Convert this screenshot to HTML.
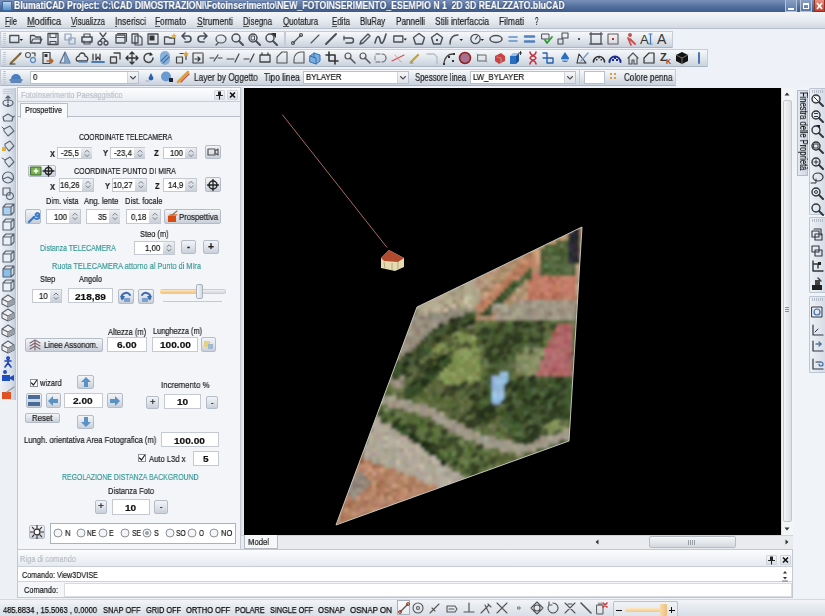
<!DOCTYPE html><html><head><meta charset="utf-8"><style>
html,body{margin:0;padding:0;width:825px;height:616px;overflow:hidden;background:#eef1f6;font-family:"Liberation Sans",sans-serif;}
#r{position:relative;width:825px;height:616px;overflow:hidden}
#r div{position:absolute;box-sizing:border-box}
.t{white-space:nowrap;line-height:1;transform-origin:0 0;will-change:transform;-webkit-text-stroke:0.2px currentColor}
.cg rect{width:4px;height:4px}
</style></head><body><div id="r">
<div style="left:0px;top:0px;width:825px;height:12px;background:linear-gradient(#7a92bb,#56739f 50%,#3d5b8b)"></div>
<div style="left:2px;top:1px;width:10px;height:10px;background:linear-gradient(#b8d4f0,#5a90c8);border:1px solid #3a6aa0;border-radius:1px"></div>
<div class="t" style="left:14px;top:1.00px;font-size:10px;font-weight:bold;color:#ffffff;transform:scaleX(0.869);text-shadow:0 0 2px #1a2f56,0 0 1px #1a2f56">BlumatiCAD Project: C:\CAD DIMOSTRAZIONI\Fotoinserimento\NEW_FOTOINSERIMENTO_ESEMPIO N 1  2D 3D REALZZATO.bluCAD</div>
<div style="left:785px;top:0px;width:12px;height:12px;background:linear-gradient(#8aa0c4,#5a78a6);border:1px solid #b4c2d8;border-top:none"></div>
<div style="left:788px;top:8px;width:6px;height:2px;background:#fff"></div>
<div style="left:800px;top:0px;width:12px;height:12px;background:linear-gradient(#8aa0c4,#5a78a6);border:1px solid #b4c2d8;border-top:none"></div>
<div style="left:803px;top:3px;width:6px;height:6px;border:1px solid #fff;border-top-width:2px"></div>
<div style="left:814px;top:0px;width:11px;height:12px;background:linear-gradient(#e89080,#c8402e);border:1px solid #8e3020;border-top:none"></div>
<svg style="position:absolute;left:814px;top:0px;" width="11" height="12" viewBox="0 0 11 12"><path d="M3 3 L8 9 M8 3 L3 9" stroke="#fff" stroke-width="1.8"/></svg>
<div style="left:0px;top:12px;width:825px;height:17px;background:linear-gradient(#f3f5f8,#e4e9ef 60%,#d2d9e1);border-bottom:1px solid #b6c0cc"></div>
<div class="t" style="left:5px;top:16.70px;font-size:10px;color:#1e1e1e;transform:scaleX(0.745);">File</div>
<div style="left:5px;top:25.8px;width:4.548875096974399px;height:1.0px;background:#555"></div>
<div class="t" style="left:27px;top:16.70px;font-size:10px;color:#1e1e1e;transform:scaleX(0.913);">Modifica</div>
<div style="left:27px;top:25.8px;width:7.606126731011329px;height:1.0px;background:#555"></div>
<div class="t" style="left:71px;top:16.70px;font-size:10px;color:#1e1e1e;transform:scaleX(0.758);">Visualizza</div>
<div style="left:71px;top:25.8px;width:5.058056872037909px;height:1.0px;background:#555"></div>
<div class="t" style="left:115px;top:16.70px;font-size:10px;color:#1e1e1e;transform:scaleX(0.845);">Inserisci</div>
<div style="left:115px;top:25.8px;width:2.3483447658813077px;height:1.0px;background:#555"></div>
<div class="t" style="left:155px;top:16.70px;font-size:10px;color:#1e1e1e;transform:scaleX(0.833);">Formato</div>
<div style="left:155px;top:25.8px;width:5.085998489045579px;height:1.0px;background:#555"></div>
<div class="t" style="left:197px;top:16.70px;font-size:10px;color:#1e1e1e;transform:scaleX(0.841);">Strumenti</div>
<div style="left:197px;top:25.8px;width:5.611772438472201px;height:1.0px;background:#555"></div>
<div class="t" style="left:243px;top:16.70px;font-size:10px;color:#1e1e1e;transform:scaleX(0.790);">Disegna</div>
<div style="left:243px;top:25.8px;width:5.708603066439537px;height:1.0px;background:#555"></div>
<div class="t" style="left:283px;top:16.70px;font-size:10px;color:#1e1e1e;transform:scaleX(0.787);">Quotatura</div>
<div style="left:283px;top:25.8px;width:6.121925509487028px;height:1.0px;background:#555"></div>
<div class="t" style="left:332px;top:16.70px;font-size:10px;color:#1e1e1e;transform:scaleX(0.790);">Edita</div>
<div style="left:332px;top:25.8px;width:5.267841228491136px;height:1.0px;background:#555"></div>
<div class="t" style="left:360px;top:16.70px;font-size:10px;color:#1e1e1e;transform:scaleX(0.776);">BluRay</div>
<div class="t" style="left:395.7px;top:16.70px;font-size:10px;color:#1e1e1e;transform:scaleX(0.815);">Pannelli</div>
<div class="t" style="left:434.5px;top:16.70px;font-size:10px;color:#1e1e1e;transform:scaleX(0.836);">Stili interfaccia</div>
<div class="t" style="left:499px;top:16.70px;font-size:10px;color:#1e1e1e;transform:scaleX(0.849);">Filmati</div>
<div class="t" style="left:534.5px;top:16.70px;font-size:10px;color:#1e1e1e;transform:scaleX(0.629);">?</div>
<div style="left:0px;top:29px;width:825px;height:58px;background:#eef1f7"></div>
<div style="left:0px;top:30.5px;width:672.5px;height:17.799999999999997px;background:linear-gradient(#f6f8fa,#e4e9ef 45%,#c9d2dd);border:1px solid #c4ccd8;border-bottom-color:#aab5c3;border-radius:1px"></div>
<div style="left:0px;top:49px;width:708.4px;height:18.200000000000003px;background:linear-gradient(#f6f8fa,#e4e9ef 45%,#c9d2dd);border:1px solid #c4ccd8;border-bottom-color:#aab5c3;border-radius:1px"></div>
<div style="left:0px;top:69px;width:676.4px;height:16.5px;background:linear-gradient(#f6f8fa,#e4e9ef 45%,#c9d2dd);border:1px solid #c4ccd8;border-bottom-color:#aab5c3;border-radius:1px"></div>
<div style="left:3px;top:33px;width:3px;height:1px;background:#c0c8d4"></div>
<div style="left:3px;top:35px;width:3px;height:1px;background:#c0c8d4"></div>
<div style="left:3px;top:37px;width:3px;height:1px;background:#c0c8d4"></div>
<div style="left:3px;top:39px;width:3px;height:1px;background:#c0c8d4"></div>
<div style="left:3px;top:41px;width:3px;height:1px;background:#c0c8d4"></div>
<div style="left:3px;top:43px;width:3px;height:1px;background:#c0c8d4"></div>
<div style="left:3px;top:45px;width:3px;height:1px;background:#c0c8d4"></div>
<div style="left:3px;top:52px;width:3px;height:1px;background:#c0c8d4"></div>
<div style="left:3px;top:54px;width:3px;height:1px;background:#c0c8d4"></div>
<div style="left:3px;top:56px;width:3px;height:1px;background:#c0c8d4"></div>
<div style="left:3px;top:58px;width:3px;height:1px;background:#c0c8d4"></div>
<div style="left:3px;top:60px;width:3px;height:1px;background:#c0c8d4"></div>
<div style="left:3px;top:62px;width:3px;height:1px;background:#c0c8d4"></div>
<div style="left:3px;top:64px;width:3px;height:1px;background:#c0c8d4"></div>
<div style="left:3px;top:71px;width:3px;height:1px;background:#c0c8d4"></div>
<div style="left:3px;top:73px;width:3px;height:1px;background:#c0c8d4"></div>
<div style="left:3px;top:75px;width:3px;height:1px;background:#c0c8d4"></div>
<div style="left:3px;top:77px;width:3px;height:1px;background:#c0c8d4"></div>
<div style="left:3px;top:79px;width:3px;height:1px;background:#c0c8d4"></div>
<div style="left:3px;top:81px;width:3px;height:1px;background:#c0c8d4"></div>
<div style="left:3px;top:83px;width:3px;height:1px;background:#c0c8d4"></div>
<svg style="position:absolute;left:9px;top:32px;" width="14" height="14" viewBox="0 0 14 14"><path d="M0.8 3.5h9v7h-9z" fill="none" stroke="#4a4f58" stroke-width="1.3" stroke-linecap="round" stroke-linejoin="round"/><path d="M10.5 7h3.5l-1.75 2z" fill="#222"/></svg>
<svg style="position:absolute;left:29px;top:32px;" width="14" height="14" viewBox="0 0 14 14"><path d="M1.5 3.5h4l1 1.5h5v6h-10z" fill="none" stroke="#4a4f58" stroke-width="1.3" stroke-linecap="round" stroke-linejoin="round"/><path d="M2 11l2-4h9l-2 4" fill="none" stroke="#4a4f58" stroke-width="1.1" stroke-linecap="round" stroke-linejoin="round"/></svg>
<svg style="position:absolute;left:46px;top:32px;" width="14" height="14" viewBox="0 0 14 14"><path d="M2 1.5h10v11h-10z" fill="none" stroke="#4a4f58" stroke-width="1.3" stroke-linecap="round" stroke-linejoin="round"/><path d="M4 1.5v4h6v-4M4 12.5v-3h6v3" fill="none" stroke="#4a4f58" stroke-width="1.1" stroke-linecap="round" stroke-linejoin="round"/></svg>
<svg style="position:absolute;left:63px;top:32px;" width="14" height="14" viewBox="0 0 14 14"><path d="M2 2h6v6h-6z" fill="none" stroke="#8aa0b8" stroke-width="1.2" stroke-linecap="round" stroke-linejoin="round"/><path d="M6 6h6v6h-6z" fill="none" stroke="#8aa0b8" stroke-width="1.2" stroke-linecap="round" stroke-linejoin="round"/></svg>
<svg style="position:absolute;left:80px;top:32px;" width="14" height="14" viewBox="0 0 14 14"><path d="M2 5h10v5h-10z" fill="none" stroke="#4a4f58" stroke-width="1.6" stroke-linecap="round" stroke-linejoin="round"/><path d="M4 5v-3h6v3M4 9v3h6v-3" fill="none" stroke="#4a4f58" stroke-width="1.2" stroke-linecap="round" stroke-linejoin="round"/></svg>
<svg style="position:absolute;left:96px;top:32px;" width="14" height="14" viewBox="0 0 14 14"><path d="M4 1l6 8M10 1l-6 8" fill="none" stroke="#4a4f58" stroke-width="1.3" stroke-linecap="round" stroke-linejoin="round"/><path d="M4 11m-2 0a2 2 0 1 0 4 0a2 2 0 1 0-4 0M10 11m-2 0a2 2 0 1 0 4 0a2 2 0 1 0-4 0" fill="none" stroke="#4a4f58" stroke-width="1.3" stroke-linecap="round" stroke-linejoin="round"/></svg>
<svg style="position:absolute;left:114px;top:32px;" width="14" height="14" viewBox="0 0 14 14"><path d="M2 3h9v8h-9z" fill="none" stroke="#4a4f58" stroke-width="1.3" stroke-linecap="round" stroke-linejoin="round"/><path d="M2 5.5h9M3.5 1.5h9v8" fill="none" stroke="#4a4f58" stroke-width="1.1" stroke-linecap="round" stroke-linejoin="round"/></svg>
<svg style="position:absolute;left:130px;top:32px;" width="14" height="14" viewBox="0 0 14 14"><path d="M2 2h6v9h-6z" fill="none" stroke="#4a4f58" stroke-width="1.3" stroke-linecap="round" stroke-linejoin="round"/><path d="M5 4h5l2 2v7h-7z" fill="none" stroke="#4a4f58" stroke-width="1.2" stroke-linecap="round" stroke-linejoin="round"/></svg>
<svg style="position:absolute;left:146px;top:32px;" width="14" height="14" viewBox="0 0 14 14"><path d="M2 2h10v10h-10z" fill="none" stroke="#4a4f58" stroke-width="1.3" stroke-linecap="round" stroke-linejoin="round"/><path d="M3.5 3.5h5v5h-5z" fill="#333"/></svg>
<svg style="position:absolute;left:163px;top:32px;" width="14" height="14" viewBox="0 0 14 14"><path d="M1.5 5h4l1 1h5v6h-10z" fill="none" stroke="#4a4f58" stroke-width="1.3" stroke-linecap="round" stroke-linejoin="round"/><path d="M11 1l1 2 2 .3-1.5 1.3.4 2-1.9-1-1.9 1 .4-2L8 3.3 10 3z" fill="#e8b030"/></svg>
<svg style="position:absolute;left:179px;top:32px;" width="14" height="14" viewBox="0 0 14 14"><path d="M3 4h6a3 3 0 0 1 0 6h-3M3 4l3-3M3 4l3 3" fill="none" stroke="#4a4f58" stroke-width="1.6" stroke-linecap="round" stroke-linejoin="round"/></svg>
<svg style="position:absolute;left:196px;top:32px;" width="14" height="14" viewBox="0 0 14 14"><path d="M11 4h-6a3 3 0 0 0 0 6h3M11 4l-3-3M11 4l-3 3" fill="none" stroke="#4a4f58" stroke-width="1.6" stroke-linecap="round" stroke-linejoin="round"/></svg>
<svg style="position:absolute;left:214px;top:32px;" width="14" height="14" viewBox="0 0 14 14"><path d="M2 7a5 4 0 1 0 10 0a5 4 0 1 0-10 0" fill="none" stroke="#4a4f58" stroke-width="1.2" stroke-linecap="round" stroke-linejoin="round"/><path d="M4 11l-2 2" fill="none" stroke="#4a4f58" stroke-width="1.2" stroke-linecap="round" stroke-linejoin="round"/></svg>
<svg style="position:absolute;left:230px;top:32px;" width="14" height="14" viewBox="0 0 14 14"><path d="M2 6a4 4 0 1 0 8 0a4 4 0 1 0-8 0" fill="none" stroke="#4a4f58" stroke-width="1.5" stroke-linecap="round" stroke-linejoin="round"/><path d="M9 9l4 4" fill="none" stroke="#4a4f58" stroke-width="2" stroke-linecap="round" stroke-linejoin="round"/></svg>
<svg style="position:absolute;left:247px;top:32px;" width="14" height="14" viewBox="0 0 14 14"><path d="M2 6a4 4 0 1 0 8 0a4 4 0 1 0-8 0" fill="none" stroke="#4a4f58" stroke-width="1.5" stroke-linecap="round" stroke-linejoin="round"/><path d="M9 9l4 4" fill="none" stroke="#4a4f58" stroke-width="2" stroke-linecap="round" stroke-linejoin="round"/><path d="M4.5 4h3v4h-3z" fill="none" stroke="#4a4f58" stroke-width="1" stroke-linecap="round" stroke-linejoin="round"/></svg>
<svg style="position:absolute;left:264px;top:32px;" width="14" height="14" viewBox="0 0 14 14"><path d="M2 6a4 4 0 1 0 8 0a4 4 0 1 0-8 0" fill="none" stroke="#4a4f58" stroke-width="1.5" stroke-linecap="round" stroke-linejoin="round"/><path d="M9 9l4 4" fill="none" stroke="#4a4f58" stroke-width="2" stroke-linecap="round" stroke-linejoin="round"/><path d="M7 1h5v5z" fill="#333"/></svg>
<svg style="position:absolute;left:290px;top:32px;" width="14" height="14" viewBox="0 0 14 14"><path d="M3 11l8-8" fill="none" stroke="#4a4f58" stroke-width="1.1" stroke-linecap="round" stroke-linejoin="round"/><path d="M3 11m-1.5 0a1.5 1.5 0 1 0 3 0a1.5 1.5 0 1 0-3 0M11 3m-1.5 0a1.5 1.5 0 1 0 3 0a1.5 1.5 0 1 0-3 0" fill="none" stroke="#4a4f58" stroke-width="1.1" stroke-linecap="round" stroke-linejoin="round"/></svg>
<svg style="position:absolute;left:308px;top:32px;" width="14" height="14" viewBox="0 0 14 14"><path d="M3 11l8-8" fill="none" stroke="#4a4f58" stroke-width="1.1" stroke-linecap="round" stroke-linejoin="round"/></svg>
<svg style="position:absolute;left:324px;top:32px;" width="14" height="14" viewBox="0 0 14 14"><path d="M2 12l10-10" fill="none" stroke="#4a4f58" stroke-width="2" stroke-linecap="round" stroke-linejoin="round"/></svg>
<svg style="position:absolute;left:342px;top:32px;" width="14" height="14" viewBox="0 0 14 14"><path d="M2 6h7a2.5 2.5 0 0 1 0 5h-5" fill="none" stroke="#4a4f58" stroke-width="1.4" stroke-linecap="round" stroke-linejoin="round"/><path d="M2 4v4" fill="none" stroke="#4a4f58" stroke-width="1.2" stroke-linecap="round" stroke-linejoin="round"/></svg>
<svg style="position:absolute;left:358px;top:32px;" width="14" height="14" viewBox="0 0 14 14"><path d="M2 12l1-3 7-7 2 2-7 7z" fill="none" stroke="#4a4f58" stroke-width="1.4" stroke-linecap="round" stroke-linejoin="round"/></svg>
<svg style="position:absolute;left:374px;top:32px;" width="14" height="14" viewBox="0 0 14 14"><path d="M1 11c2-8 4-8 5-3s3 5 6-6" fill="none" stroke="#4a4f58" stroke-width="1.6" stroke-linecap="round" stroke-linejoin="round"/></svg>
<svg style="position:absolute;left:393px;top:32px;" width="14" height="14" viewBox="0 0 14 14"><path d="M0.8 4h9v6h-9z" fill="none" stroke="#4a4f58" stroke-width="1.3" stroke-linecap="round" stroke-linejoin="round"/><path d="M10.5 6.5h3.5l-1.75 2z" fill="#222"/></svg>
<svg style="position:absolute;left:412px;top:32px;" width="14" height="14" viewBox="0 0 14 14"><path d="M7 1.5l5.5 4-2 6.5h-7l-2-6.5z" fill="none" stroke="#4a4f58" stroke-width="1.4" stroke-linecap="round" stroke-linejoin="round"/></svg>
<svg style="position:absolute;left:430px;top:32px;" width="14" height="14" viewBox="0 0 14 14"><path d="M7 1.5l5.5 4-2 6.5h-7l-2-6.5z" fill="none" stroke="#4a4f58" stroke-width="1.4" stroke-linecap="round" stroke-linejoin="round"/><path d="M6 7h2v2h-2z" fill="#4a4f58"/></svg>
<svg style="position:absolute;left:449px;top:32px;" width="14" height="14" viewBox="0 0 14 14"><path d="M1 12c0-6 3-9 8-9" fill="none" stroke="#4a4f58" stroke-width="1.4" stroke-linecap="round" stroke-linejoin="round"/><path d="M10.5 7h3.5l-1.75 2z" fill="#222"/></svg>
<svg style="position:absolute;left:470px;top:32px;" width="14" height="14" viewBox="0 0 14 14"><path d="M0.8 7a4.7 4.7 0 1 0 9.4 0a4.7 4.7 0 1 0-9.4 0" fill="none" stroke="#4a4f58" stroke-width="1.3" stroke-linecap="round" stroke-linejoin="round"/><path d="M5.5 7l2-3" fill="none" stroke="#4a4f58" stroke-width="1.2" stroke-linecap="round" stroke-linejoin="round"/><path d="M10.5 7h3.5l-1.75 2z" fill="#222"/></svg>
<svg style="position:absolute;left:489px;top:32px;" width="14" height="14" viewBox="0 0 14 14"><path d="M1 7a6 3.5 0 1 0 12 0a6 3.5 0 1 0-12 0" fill="none" stroke="#4a4f58" stroke-width="1.5" stroke-linecap="round" stroke-linejoin="round"/></svg>
<svg style="position:absolute;left:506px;top:32px;" width="14" height="14" viewBox="0 0 14 14"><path d="M3 5h8M3 9h8" fill="none" stroke="#6090c8" stroke-width="1.5" stroke-linecap="round" stroke-linejoin="round"/></svg>
<svg style="position:absolute;left:522px;top:32px;" width="14" height="14" viewBox="0 0 14 14"><path d="M3 4.5h9M3 9.5h9" fill="none" stroke="#5080c0" stroke-width="2.6" stroke-linecap="round" stroke-linejoin="round"/></svg>
<svg style="position:absolute;left:540px;top:32px;" width="14" height="14" viewBox="0 0 14 14"><path d="M2 2h7v5h-7z" fill="none" stroke="#4a4f58" stroke-width="1" stroke-linecap="round" stroke-linejoin="round"/><path d="M5 8l2 3 5-6" fill="none" stroke="#2a9a2a" stroke-width="1.8" stroke-linecap="round" stroke-linejoin="round"/></svg>
<svg style="position:absolute;left:556px;top:32px;" width="14" height="14" viewBox="0 0 14 14"><path d="M6 1h6v5h-6zM2 7h5v5h-5z" fill="none" stroke="#4a4f58" stroke-width="1.1" stroke-linecap="round" stroke-linejoin="round"/></svg>
<svg style="position:absolute;left:572px;top:32px;" width="14" height="14" viewBox="0 0 14 14"><path d="M6 6h2v2h-2z" fill="#555"/></svg>
<svg style="position:absolute;left:589px;top:32px;" width="14" height="14" viewBox="0 0 14 14"><path d="M2 2h10v10h-10z" fill="none" stroke="#4a4f58" stroke-width="1.3" stroke-linecap="round" stroke-linejoin="round"/><path d="M0 2h2M12 2h2M0 12h2M12 12h2M2 0v2M12 0v2" fill="none" stroke="#4a4f58" stroke-width="1" stroke-linecap="round" stroke-linejoin="round"/></svg>
<svg style="position:absolute;left:606px;top:32px;" width="14" height="14" viewBox="0 0 14 14"><path d="M2 2h10v10h-10z" fill="none" stroke="#6a5a5a" stroke-width="1.1" stroke-linecap="round" stroke-linejoin="round"/><path d="M6 6h2v2h-2z" fill="#c03030"/></svg>
<svg style="position:absolute;left:624px;top:32px;" width="14" height="14" viewBox="0 0 14 14"><path d="M6 1a2 2 0 1 1 0 4a2 2 0 1 1 0-4z" fill="#c85050"/><path d="M4 6l3 7M6 7l5 5" fill="none" stroke="#c85050" stroke-width="1.8" stroke-linecap="round" stroke-linejoin="round"/></svg>
<svg style="position:absolute;left:640px;top:32px;" width="14" height="14" viewBox="0 0 14 14"><text x="0" y="12" font-family="Liberation Sans" font-size="13" fill="#333">A</text><path d="M10.5 2v10M9 2h3M9 12h3" fill="none" stroke="#4a7ab8" stroke-width="1.2" stroke-linecap="round" stroke-linejoin="round"/></svg>
<svg style="position:absolute;left:656px;top:32px;" width="14" height="14" viewBox="0 0 14 14"><text x="1" y="12" font-family="Liberation Sans" font-size="14" fill="#333">A</text></svg>
<div style="left:284px;top:32px;width:2px;height:14px;background:#c4ccd8"></div>
<svg style="position:absolute;left:9px;top:51px;" width="14" height="14" viewBox="0 0 14 14"><path d="M2 12l9-9" fill="none" stroke="#8a6a3a" stroke-width="2.2" stroke-linecap="round" stroke-linejoin="round"/><path d="M1 13h5" fill="none" stroke="#333" stroke-width="1" stroke-linecap="round" stroke-linejoin="round"/><path d="M11 3l1-1" fill="none" stroke="#555" stroke-width="1.5" stroke-linecap="round" stroke-linejoin="round"/></svg>
<svg style="position:absolute;left:24px;top:51px;" width="14" height="14" viewBox="0 0 14 14"><path d="M4 4m-2.5 0a2.5 2.5 0 1 0 5 0a2.5 2.5 0 1 0-5 0" fill="none" stroke="#555" stroke-width="1.1" stroke-linecap="round" stroke-linejoin="round"/><path d="M9 9m-2.5 0a2.5 2.5 0 1 0 5 0a2.5 2.5 0 1 0-5 0" fill="none" stroke="#5a8ac0" stroke-width="1.3" stroke-linecap="round" stroke-linejoin="round"/><path d="M8 2h3v3" fill="none" stroke="#333" stroke-width="1.1" stroke-linecap="round" stroke-linejoin="round"/></svg>
<svg style="position:absolute;left:41px;top:51px;" width="14" height="14" viewBox="0 0 14 14"><path d="M2 1.5h7v11h-7z" fill="none" stroke="#444" stroke-width="1.2" stroke-linecap="round" stroke-linejoin="round"/><path d="M3.5 3h3v3h-3z" fill="#333"/><path d="M6 10h6M10 8l2 2-2 2" fill="none" stroke="#c06020" stroke-width="1.4" stroke-linecap="round" stroke-linejoin="round"/></svg>
<svg style="position:absolute;left:58px;top:51px;" width="14" height="14" viewBox="0 0 14 14"><path d="M7 1l-5 11h5zM7 1l5 11h-5z" fill="none" stroke="#506a88" stroke-width="1.2" stroke-linecap="round" stroke-linejoin="round"/><path d="M7 1l5 11h-5z" fill="#7aa0c8"/></svg>
<svg style="position:absolute;left:75px;top:51px;" width="14" height="14" viewBox="0 0 14 14"><path d="M2 10a3 3 0 0 1 2-5a3 3 0 0 1 6 0a3 3 0 0 1 2 5z" fill="none" stroke="#444" stroke-width="1.3" stroke-linecap="round" stroke-linejoin="round"/><path d="M4 11h8" fill="none" stroke="#5a8ac0" stroke-width="1.5" stroke-linecap="round" stroke-linejoin="round"/></svg>
<svg style="position:absolute;left:91px;top:51px;" width="14" height="14" viewBox="0 0 14 14"><path d="M2 3v6M5 3v6l2-3 2 3v-6" fill="none" stroke="#333" stroke-width="1.2" stroke-linecap="round" stroke-linejoin="round"/><path d="M1 11h12" fill="none" stroke="#4a7ab8" stroke-width="1.8" stroke-linecap="round" stroke-linejoin="round"/></svg>
<svg style="position:absolute;left:109px;top:51px;" width="14" height="14" viewBox="0 0 14 14"><path d="M1.5 6h6v6h-6zM5 2h6v6" fill="none" stroke="#444" stroke-width="1.3" stroke-linecap="round" stroke-linejoin="round"/></svg>
<svg style="position:absolute;left:125px;top:51px;" width="14" height="14" viewBox="0 0 14 14"><path d="M7 1v12M1 7h12M5 3l2-2 2 2M5 11l2 2 2-2M3 5l-2 2 2 2M11 5l2 2-2 2" fill="none" stroke="#333" stroke-width="1.3" stroke-linecap="round" stroke-linejoin="round"/></svg>
<svg style="position:absolute;left:142px;top:51px;" width="14" height="14" viewBox="0 0 14 14"><path d="M11 7a4.5 4.5 0 1 1-2-3.8" fill="none" stroke="#444" stroke-width="1.5" stroke-linecap="round" stroke-linejoin="round"/><path d="M8 1l3 3-3.5 1z" fill="#333"/></svg>
<svg style="position:absolute;left:158px;top:51px;" width="14" height="14" viewBox="0 0 14 14"><path d="M2 5a5 5 0 0 1 10 0v4a5 5 0 0 1-10 0z" fill="#8ab0d8"/><path d="M3 10l6-6M5 12l6-6" fill="none" stroke="#3a70b0" stroke-width="1.1" stroke-linecap="round" stroke-linejoin="round"/></svg>
<svg style="position:absolute;left:175px;top:51px;" width="14" height="14" viewBox="0 0 14 14"><path d="M1.5 6h6v6h-6zM5 2.5h6v6" fill="none" stroke="#444" stroke-width="1.2" stroke-linecap="round" stroke-linejoin="round"/><path d="M11 0l1 2 2 .3-1.5 1.3.4 2-1.9-1-1.9 1 .4-2L8 2.3 10 2z" fill="#e8a020"/></svg>
<svg style="position:absolute;left:191px;top:51px;" width="14" height="14" viewBox="0 0 14 14"><path d="M2 2h10v10h-10z" fill="none" stroke="#444" stroke-width="1.2" stroke-linecap="round" stroke-linejoin="round"/><path d="M4 8h5M7 6l2 2-2 2" fill="none" stroke="#333" stroke-width="1.2" stroke-linecap="round" stroke-linejoin="round"/><path d="M10 0l1 2 2 .3-1.5 1.3z" fill="#e8a020"/></svg>
<svg style="position:absolute;left:209px;top:51px;" width="14" height="14" viewBox="0 0 14 14"><path d="M1 7h4M9 7h4M5 10l4-6" fill="none" stroke="#444" stroke-width="1.2" stroke-linecap="round" stroke-linejoin="round"/></svg>
<svg style="position:absolute;left:226px;top:51px;" width="14" height="14" viewBox="0 0 14 14"><path d="M1 8h3M5 8h3M9 11l4-8" fill="none" stroke="#444" stroke-width="1.2" stroke-linecap="round" stroke-linejoin="round"/></svg>
<svg style="position:absolute;left:242px;top:51px;" width="14" height="14" viewBox="0 0 14 14"><path d="M2 8h5M8 11l4-8" fill="none" stroke="#444" stroke-width="1.2" stroke-linecap="round" stroke-linejoin="round"/></svg>
<svg style="position:absolute;left:258px;top:51px;" width="14" height="14" viewBox="0 0 14 14"><path d="M2 4h10v7h-10zM4 4v-2M10 4v-2" fill="none" stroke="#444" stroke-width="1.3" stroke-linecap="round" stroke-linejoin="round"/></svg>
<svg style="position:absolute;left:275px;top:51px;" width="14" height="14" viewBox="0 0 14 14"><path d="M2 12v-6l5-5h5v11z" fill="none" stroke="#555" stroke-width="1.1" stroke-linecap="round" stroke-linejoin="round"/></svg>
<svg style="position:absolute;left:292px;top:51px;" width="14" height="14" viewBox="0 0 14 14"><path d="M2 12v-4a7 7 0 0 1 7-7h3v11z" fill="none" stroke="#555" stroke-width="1.1" stroke-linecap="round" stroke-linejoin="round"/></svg>
<svg style="position:absolute;left:308px;top:51px;" width="14" height="14" viewBox="0 0 14 14"><path d="M2 5l4-3 6 2v6l-4 3-6-2z" fill="#7aaee0"/><path d="M2 5l4-3 6 2v6l-4 3-6-2zM6 2v5M2 5l6 2v6" fill="none" stroke="#3a70b0" stroke-width="1" stroke-linecap="round" stroke-linejoin="round"/></svg>
<svg style="position:absolute;left:325px;top:51px;" width="14" height="14" viewBox="0 0 14 14"><path d="M4 1v9h9M1 4h9v9" fill="none" stroke="#333" stroke-width="1.6" stroke-linecap="round" stroke-linejoin="round"/></svg>
<svg style="position:absolute;left:343px;top:51px;" width="14" height="14" viewBox="0 0 14 14"><path d="M2 5a3 3 0 1 0 6 0a3 3 0 1 0-6 0" fill="none" stroke="#555" stroke-width="1.2" stroke-linecap="round" stroke-linejoin="round"/><path d="M7 7l5 5" fill="none" stroke="#555" stroke-width="1.5" stroke-linecap="round" stroke-linejoin="round"/></svg>
<svg style="position:absolute;left:358px;top:51px;" width="14" height="14" viewBox="0 0 14 14"><path d="M2 5a3 3 0 1 0 6 0a3 3 0 1 0-6 0" fill="none" stroke="#555" stroke-width="1.2" stroke-linecap="round" stroke-linejoin="round"/><path d="M7 7l5 5" fill="none" stroke="#555" stroke-width="1.5" stroke-linecap="round" stroke-linejoin="round"/></svg>
<svg style="position:absolute;left:374px;top:51px;" width="14" height="14" viewBox="0 0 14 14"><path d="M2 3h4M2 11h4M8 3a4 4 0 0 1 0 8" fill="none" stroke="#666" stroke-width="1.2" stroke-linecap="round" stroke-linejoin="round"/><path d="M1 5v4" fill="none" stroke="#888" stroke-width="1" stroke-linecap="round" stroke-linejoin="round"/></svg>
<svg style="position:absolute;left:391px;top:51px;" width="14" height="14" viewBox="0 0 14 14"><path d="M1 10l12-6" fill="none" stroke="#d05050" stroke-width="1.1" stroke-linecap="round" stroke-linejoin="round"/><path d="M4 4l6 7" fill="none" stroke="#e08080" stroke-width="0.8" stroke-linecap="round" stroke-linejoin="round"/></svg>
<svg style="position:absolute;left:408px;top:51px;" width="14" height="14" viewBox="0 0 14 14"><path d="M3 11l7-7" fill="none" stroke="#c8a030" stroke-width="2.2" stroke-linecap="round" stroke-linejoin="round"/><path d="M2 12h3" fill="none" stroke="#888" stroke-width="1" stroke-linecap="round" stroke-linejoin="round"/></svg>
<svg style="position:absolute;left:425px;top:51px;" width="14" height="14" viewBox="0 0 14 14"><path d="M2 3h7l3 3v7" fill="none" stroke="#b8bcc4" stroke-width="1.3" stroke-linecap="round" stroke-linejoin="round"/></svg>
<svg style="position:absolute;left:442px;top:51px;" width="14" height="14" viewBox="0 0 14 14"><path d="M2 12c1-6 4-9 9-9" fill="none" stroke="#444" stroke-width="1.3" stroke-linecap="round" stroke-linejoin="round"/><path d="M1 12h2v2h-2zM6 5h2v2h-2zM11 2h2v2h-2zM10 9h2v2h-2z" fill="#333"/></svg>
<svg style="position:absolute;left:458px;top:51px;" width="14" height="14" viewBox="0 0 14 14"><path d="M7 1.5a5.5 5.5 0 1 1 0 11a5.5 5.5 0 1 1 0-11z" fill="#a87090"/><path d="M7 1.5a5.5 5.5 0 1 1 0 11a5.5 5.5 0 1 1 0-11z" fill="none" stroke="#902020" stroke-width="1.5" stroke-linecap="round" stroke-linejoin="round"/></svg>
<svg style="position:absolute;left:475px;top:51px;" width="14" height="14" viewBox="0 0 14 14"><path d="M3 4h8v6h-8z" fill="none" stroke="#666" stroke-width="1" stroke-linecap="round" stroke-linejoin="round"/><path d="M2 3l1 1M11 10l1 1" fill="none" stroke="#888" stroke-width="1" stroke-linecap="round" stroke-linejoin="round"/></svg>
<svg style="position:absolute;left:493px;top:51px;" width="14" height="14" viewBox="0 0 14 14"><path d="M2 5l6-3 4 3v5l-6 3-4-3z" fill="#d04040"/><path d="M4 6l4 1v5" fill="none" stroke="#999" stroke-width="1.2" stroke-linecap="round" stroke-linejoin="round"/></svg>
<svg style="position:absolute;left:508px;top:51px;" width="14" height="14" viewBox="0 0 14 14"><path d="M2 5h6v8h-6z" fill="#2a70c0"/><path d="M2 5l3-3h6l-3 3z" fill="#9ac0e8"/><path d="M8 5l3-3v8l-3 3z" fill="#1a50a0"/><path d="M11 2h3M12.5 0.5v3" fill="none" stroke="#333" stroke-width="1" stroke-linecap="round" stroke-linejoin="round"/></svg>
<svg style="position:absolute;left:526px;top:51px;" width="14" height="14" viewBox="0 0 14 14"><path d="M4 1c0 4 6 4 6 6s-6 2-6 6M10 1c0 4-6 4-6 6s6 2 6 6" fill="none" stroke="#c03040" stroke-width="1.5" stroke-linecap="round" stroke-linejoin="round"/></svg>
<svg style="position:absolute;left:541px;top:51px;" width="14" height="14" viewBox="0 0 14 14"><path d="M2 2h4v10h6v-5h-10" fill="none" stroke="#2a60b0" stroke-width="1.4" stroke-linecap="round" stroke-linejoin="round"/></svg>
<svg style="position:absolute;left:558px;top:51px;" width="14" height="14" viewBox="0 0 14 14"><path d="M7 1l4 6a4 4 0 0 1-8 0z" fill="#2a70c0"/><path d="M3 9h8" fill="none" stroke="#fff" stroke-width="1" stroke-linecap="round" stroke-linejoin="round"/></svg>
<svg style="position:absolute;left:575px;top:51px;" width="14" height="14" viewBox="0 0 14 14"><path d="M2 12h9l-7-9z" fill="none" stroke="#333" stroke-width="1.1" stroke-linecap="round" stroke-linejoin="round"/><path d="M6 10l7-8" fill="none" stroke="#7aa0c8" stroke-width="1.5" stroke-linecap="round" stroke-linejoin="round"/></svg>
<svg style="position:absolute;left:592px;top:51px;" width="14" height="14" viewBox="0 0 14 14"><path d="M1.5 11a5.5 5.5 0 0 1 11 0" fill="none" stroke="#333" stroke-width="1.6" stroke-linecap="round" stroke-linejoin="round"/><path d="M4 8h1.5v1.5h-1.5zM8.5 8h1.5v1.5h-1.5zM6.3 6h1.5v1.5h-1.5z" fill="#333"/></svg>
<svg style="position:absolute;left:608px;top:51px;" width="14" height="14" viewBox="0 0 14 14"><path d="M1.5 11a5.5 5.5 0 0 1 11 0" fill="none" stroke="#1a2a90" stroke-width="2" stroke-linecap="round" stroke-linejoin="round"/><path d="M4 8h2v2h-2zM8 8h2v2h-2zM6 6h2v2h-2z" fill="#1a2a90"/></svg>
<svg style="position:absolute;left:626px;top:51px;" width="14" height="14" viewBox="0 0 14 14"><path d="M2 7l5-5 5 5M3 6v7h3v-4h2v4h3v-7" fill="none" stroke="#555" stroke-width="1.2" stroke-linecap="round" stroke-linejoin="round"/></svg>
<svg style="position:absolute;left:642px;top:51px;" width="14" height="14" viewBox="0 0 14 14"><path d="M2 12v-5l5-5h5v10z" fill="none" stroke="#333" stroke-width="1.2" stroke-linecap="round" stroke-linejoin="round"/></svg>
<svg style="position:absolute;left:659px;top:51px;" width="14" height="14" viewBox="0 0 14 14"><text x="1" y="10" font-family="Liberation Sans" font-weight="bold" font-size="11" fill="#333">Z</text><text x="7" y="13" font-family="Liberation Sans" font-weight="bold" font-size="7" fill="#c03030">K</text></svg>
<svg style="position:absolute;left:675px;top:51px;" width="14" height="14" viewBox="0 0 14 14"><path d="M7 1l6 3v6l-6 3-6-3v-6z" fill="#111"/><path d="M1 4l6 3 6-3M7 7v6" fill="none" stroke="#888" stroke-width="0.8" stroke-linecap="round" stroke-linejoin="round"/></svg>
<svg style="position:absolute;left:692px;top:51px;" width="14" height="14" viewBox="0 0 14 14"><path d="M7 2v10" fill="none" stroke="#3a6aa8" stroke-width="1.8" stroke-linecap="round" stroke-linejoin="round"/></svg>
<svg style="position:absolute;left:9px;top:70px;" width="14" height="14" viewBox="0 0 14 14"><path d="M2 9a5 5 0 0 1 10 0z" fill="#4a80c0"/><path d="M1 10h12M2 12h10" fill="none" stroke="#3a6aa8" stroke-width="1.4" stroke-linecap="round" stroke-linejoin="round"/></svg>
<div style="left:29.6px;top:70.5px;width:109.4px;height:13.0px;background:#fff;border:1px solid #b8c0cc"></div>
<div style="left:127px;top:71.5px;width:11px;height:11.0px;background:linear-gradient(#f4f6f8,#dde2e8);border-left:1px solid #d0d6de"></div>
<svg style="position:absolute;left:129px;top:74.5px;" width="8" height="6" viewBox="0 0 8 6"><path d="M1.5 1.5l2.5 2.5 2.5-2.5" fill="none" stroke="#555" stroke-width="1.1" stroke-linecap="round" stroke-linejoin="round"/></svg>
<div class="t" style="left:32.6px;top:73.22px;font-size:9px;color:#111;transform:scaleX(0.870);">0</div>
<svg style="position:absolute;left:144px;top:70px;" width="14" height="14" viewBox="0 0 14 14"><path d="M7 3l2.5 5a2.5 2.5 0 0 1-5 0z" fill="#2a60b0"/><path d="M2 11h3" fill="none" stroke="#aab" stroke-width="1" stroke-linecap="round" stroke-linejoin="round"/></svg>
<svg style="position:absolute;left:160px;top:70px;" width="14" height="14" viewBox="0 0 14 14"><path d="M6 1.5a5 5 0 1 1 0 10a5 5 0 1 1 0-10z" fill="#6a9ad0"/><path d="M9 8h4v4h-4z" fill="#223"/></svg>
<svg style="position:absolute;left:176px;top:70px;" width="14" height="14" viewBox="0 0 14 14"><path d="M2 12l10-10" fill="none" stroke="#d8a040" stroke-width="2.5" stroke-linecap="round" stroke-linejoin="round"/><path d="M5 12l8-8" fill="none" stroke="#c85050" stroke-width="1.3" stroke-linecap="round" stroke-linejoin="round"/></svg>
<div class="t" style="left:193.5px;top:72.14px;font-size:10.5px;color:#1e1e1e;transform:scaleX(0.792);">Layer by Oggetto</div>
<div class="t" style="left:264px;top:72.14px;font-size:10.5px;color:#1e1e1e;transform:scaleX(0.791);">Tipo linea</div>
<div style="left:303.3px;top:70.5px;width:105.5px;height:13.0px;background:#fff;border:1px solid #b8c0cc"></div>
<div style="left:396.8px;top:71.5px;width:11.0px;height:11.0px;background:linear-gradient(#f4f6f8,#dde2e8);border-left:1px solid #d0d6de"></div>
<svg style="position:absolute;left:398.8px;top:74.5px;" width="8" height="6" viewBox="0 0 8 6"><path d="M1.5 1.5l2.5 2.5 2.5-2.5" fill="none" stroke="#555" stroke-width="1.1" stroke-linecap="round" stroke-linejoin="round"/></svg>
<div class="t" style="left:306.3px;top:73.22px;font-size:9px;color:#111;transform:scaleX(0.870);">BYLAYER</div>
<div class="t" style="left:414.8px;top:72.14px;font-size:10.5px;color:#1e1e1e;transform:scaleX(0.737);">Spessore linea</div>
<div style="left:469.6px;top:70.5px;width:106.10000000000002px;height:13.0px;background:#fff;border:1px solid #b8c0cc"></div>
<div style="left:563.7px;top:71.5px;width:11.0px;height:11.0px;background:linear-gradient(#f4f6f8,#dde2e8);border-left:1px solid #d0d6de"></div>
<svg style="position:absolute;left:565.7px;top:74.5px;" width="8" height="6" viewBox="0 0 8 6"><path d="M1.5 1.5l2.5 2.5 2.5-2.5" fill="none" stroke="#555" stroke-width="1.1" stroke-linecap="round" stroke-linejoin="round"/></svg>
<div class="t" style="left:472.6px;top:73.22px;font-size:9px;color:#111;transform:scaleX(0.870);">LW_BYLAYER</div>
<div style="left:579px;top:70px;width:1px;height:14px;background:#c0c8d4"></div>
<div style="left:583.5px;top:70.5px;width:21.100000000000023px;height:13.0px;background:#fff;border:1px solid #b8c0cc"></div>
<svg style="position:absolute;left:607px;top:70px;" width="14" height="14" viewBox="0 0 14 14"><path d="M3 3h2v2h-2zM7 3h2v2h-2zM3 7h2v2h-2zM7 7h2v2h-2z" fill="#d8a040"/></svg>
<div class="t" style="left:624px;top:72.14px;font-size:10.5px;color:#1e1e1e;transform:scaleX(0.768);">Colore penna</div>
<div style="left:0px;top:87px;width:17px;height:511px;background:#edf0f5"></div>
<div style="left:0px;top:88px;width:16px;height:312px;background:linear-gradient(90deg,#eef2f8,#d8e0ea 70%,#c6d0dc);border-right:1px solid #bcc6d2"></div>
<div style="left:17px;top:87px;width:224px;height:463px;background:#f3f5f9;border:1px solid #c2c8d2"></div>
<div style="left:18px;top:88px;width:222px;height:14px;background:linear-gradient(#fdfdfe,#eaeef3);border-bottom:1px solid #c8ced8"></div>
<div class="t" style="left:20.5px;top:90.26px;font-size:9.5px;color:#bcc0c8;transform:scaleX(0.778);">FotoInserimento Paesaggistico</div>
<div style="left:18px;top:102px;width:222px;height:15px;background:#eef1f5;border-bottom:1px solid #b8bec8"></div>
<div style="left:20px;top:103px;width:48px;height:15px;background:#f8f9fb;border:1px solid #b8bec8;border-bottom:none"></div>
<div class="t" style="left:25px;top:106.42px;font-size:9px;color:#1a1a1a;transform:scaleX(0.822);">Prospettive</div>
<div class="t" style="left:79px;top:133.22px;font-size:9px;color:#1a1a1a;transform:scaleX(0.758);">COORDINATE TELECAMERA</div>
<div class="t" style="left:49.9px;top:148.71px;font-size:9.6px;font-weight:bold;color:#1a1a1a;transform:scaleX(0.765);">X</div>
<div style="left:57.4px;top:146.6px;width:35.1px;height:12.800000000000011px;background:#fff;border:1px solid #c4c9d2"></div>
<div style="left:80.5px;top:147.6px;width:11.0px;height:10.800000000000011px;background:linear-gradient(#eceff3,#c9cfd8)"></div>
<svg style="position:absolute;left:81.5px;top:147.6px;" width="10" height="10.800000000000011" viewBox="0 0 10 10.800000000000011"><path d="M3 4.2l2 -2 2 2M3 6.6l2 2 2-2" fill="none" stroke="#6a7078" stroke-width="0.9" stroke-linecap="round" stroke-linejoin="round"/></svg>
<div class="t" style="left:60.654940624999995px;top:149.22px;font-size:9px;color:#111;transform:scaleX(0.870);">-25,5</div>
<div class="t" style="left:102.7px;top:148.21px;font-size:9.6px;font-weight:bold;color:#1a1a1a;transform:scaleX(0.796);">Y</div>
<div style="left:110.4px;top:146.6px;width:35.099999999999994px;height:12.800000000000011px;background:#fff;border:1px solid #c4c9d2"></div>
<div style="left:133.5px;top:147.6px;width:11.0px;height:10.800000000000011px;background:linear-gradient(#eceff3,#c9cfd8)"></div>
<svg style="position:absolute;left:134.5px;top:147.6px;" width="10" height="10.800000000000011" viewBox="0 0 10 10.800000000000011"><path d="M3 4.2l2 -2 2 2M3 6.6l2 2 2-2" fill="none" stroke="#6a7078" stroke-width="0.9" stroke-linecap="round" stroke-linejoin="round"/></svg>
<div class="t" style="left:113.654940625px;top:149.22px;font-size:9px;color:#111;transform:scaleX(0.870);">-23,4</div>
<div class="t" style="left:154px;top:147.71px;font-size:9.6px;font-weight:bold;color:#1a1a1a;transform:scaleX(0.802);">Z</div>
<div style="left:162.5px;top:146.6px;width:34.900000000000006px;height:12.800000000000011px;background:#fff;border:1px solid #c4c9d2"></div>
<div style="left:185.4px;top:147.6px;width:11.0px;height:10.800000000000011px;background:linear-gradient(#eceff3,#c9cfd8)"></div>
<svg style="position:absolute;left:186.4px;top:147.6px;" width="10" height="10.800000000000011" viewBox="0 0 10 10.800000000000011"><path d="M3 4.2l2 -2 2 2M3 6.6l2 2 2-2" fill="none" stroke="#6a7078" stroke-width="0.9" stroke-linecap="round" stroke-linejoin="round"/></svg>
<div class="t" style="left:170.33735781250002px;top:149.22px;font-size:9px;color:#111;transform:scaleX(0.870);">100</div>
<div style="left:205px;top:145.4px;width:16px;height:14.0px;background:linear-gradient(#f2f4f7,#dde2e9 55%,#c9d0da);border:1px solid #b4bcc8;border-radius:2px;"></div>
<svg style="position:absolute;left:206px;top:145px;" width="14" height="14" viewBox="0 0 14 14"><path d="M2 4h7v6h-7z" fill="none" stroke="#555" stroke-width="1.2" stroke-linecap="round" stroke-linejoin="round"/><path d="M9 6l3-2v6l-3-2" fill="none" stroke="#555" stroke-width="1.2" stroke-linecap="round" stroke-linejoin="round"/></svg>
<div style="left:28.4px;top:164.5px;width:27.200000000000003px;height:12.699999999999989px;background:linear-gradient(#f2f4f7,#dde2e9 55%,#c9d0da);border:1px solid #b4bcc8;border-radius:2px;"></div>
<svg style="position:absolute;left:30px;top:165px;" width="12" height="12" viewBox="0 0 12 12"><path d="M1 2h10v8h-10z" fill="#7ab050"/><path d="M1 2h10v8h-10z" fill="none" stroke="#3a6a2a" stroke-width="1" stroke-linecap="round" stroke-linejoin="round"/><path d="M6 4v4M4 6h4" fill="none" stroke="#fff" stroke-width="1.4" stroke-linecap="round" stroke-linejoin="round"/></svg>
<svg style="position:absolute;left:42px;top:165px;" width="13" height="12" viewBox="0 0 13 12"><path d="M6.5 1v10M1 6h11" fill="none" stroke="#222" stroke-width="1.3" stroke-linecap="round" stroke-linejoin="round"/><path d="M6.5 6m-3.5 0a3.5 3.5 0 1 0 7 0a3.5 3.5 0 1 0-7 0" fill="none" stroke="#222" stroke-width="1.4" stroke-linecap="round" stroke-linejoin="round"/></svg>
<div class="t" style="left:74px;top:166.92px;font-size:9px;color:#1a1a1a;transform:scaleX(0.785);">COORDINATE PUNTO DI MIRA</div>
<div class="t" style="left:50px;top:181.51px;font-size:9.6px;font-weight:bold;color:#1a1a1a;transform:scaleX(0.781);">X</div>
<div style="left:59px;top:178.4px;width:34.8px;height:13.299999999999983px;background:#fff;border:1px solid #c4c9d2"></div>
<div style="left:81.8px;top:179.4px;width:11.0px;height:11.299999999999983px;background:linear-gradient(#eceff3,#c9cfd8)"></div>
<svg style="position:absolute;left:82.8px;top:179.4px;" width="10" height="11.299999999999983" viewBox="0 0 10 11.299999999999983"><path d="M3 4.4l2 -2 2 2M3 6.8l2 2 2-2" fill="none" stroke="#6a7078" stroke-width="0.9" stroke-linecap="round" stroke-linejoin="round"/></svg>
<div class="t" style="left:60.207871874999995px;top:181.27px;font-size:9px;color:#111;transform:scaleX(0.870);">16,26</div>
<div class="t" style="left:105px;top:181.21px;font-size:9.6px;font-weight:bold;color:#1a1a1a;transform:scaleX(0.781);">Y</div>
<div style="left:112px;top:178.4px;width:35px;height:13.299999999999983px;background:#fff;border:1px solid #c4c9d2"></div>
<div style="left:135px;top:179.4px;width:11px;height:11.299999999999983px;background:linear-gradient(#eceff3,#c9cfd8)"></div>
<svg style="position:absolute;left:136px;top:179.4px;" width="10" height="11.299999999999983" viewBox="0 0 10 11.299999999999983"><path d="M3 4.4l2 -2 2 2M3 6.8l2 2 2-2" fill="none" stroke="#6a7078" stroke-width="0.9" stroke-linecap="round" stroke-linejoin="round"/></svg>
<div class="t" style="left:113.407871875px;top:181.27px;font-size:9px;color:#111;transform:scaleX(0.870);">10,27</div>
<div class="t" style="left:155px;top:180.71px;font-size:9.6px;font-weight:bold;color:#1a1a1a;transform:scaleX(0.767);">Z</div>
<div style="left:162.5px;top:178.4px;width:34.900000000000006px;height:13.299999999999983px;background:#fff;border:1px solid #c4c9d2"></div>
<div style="left:185.4px;top:179.4px;width:11.0px;height:11.299999999999983px;background:linear-gradient(#eceff3,#c9cfd8)"></div>
<svg style="position:absolute;left:186.4px;top:179.4px;" width="10" height="11.299999999999983" viewBox="0 0 10 11.299999999999983"><path d="M3 4.4l2 -2 2 2M3 6.8l2 2 2-2" fill="none" stroke="#6a7078" stroke-width="0.9" stroke-linecap="round" stroke-linejoin="round"/></svg>
<div class="t" style="left:168.1620859375px;top:181.27px;font-size:9px;color:#111;transform:scaleX(0.870);">14,9</div>
<div style="left:205px;top:177px;width:16px;height:14.699999999999989px;background:linear-gradient(#f2f4f7,#dde2e9 55%,#c9d0da);border:1px solid #b4bcc8;border-radius:2px;"></div>
<svg style="position:absolute;left:206px;top:177.5px;" width="14" height="14" viewBox="0 0 14 14"><path d="M7 1.5v11M1.5 7h11" fill="none" stroke="#222" stroke-width="1.3" stroke-linecap="round" stroke-linejoin="round"/><path d="M7 7m-4 0a4 4 0 1 0 8 0a4 4 0 1 0-8 0" fill="none" stroke="#222" stroke-width="1.5" stroke-linecap="round" stroke-linejoin="round"/></svg>
<div class="t" style="left:45.5px;top:196.92px;font-size:9px;color:#1a1a1a;transform:scaleX(0.823);">Dim. vista</div>
<div class="t" style="left:84.4px;top:196.92px;font-size:9px;color:#1a1a1a;transform:scaleX(0.849);">Ang. lente</div>
<div class="t" style="left:125px;top:196.92px;font-size:9px;color:#1a1a1a;transform:scaleX(0.842);">Dist. focale</div>
<div style="left:25px;top:209px;width:16px;height:14.800000000000011px;background:linear-gradient(#f2f4f7,#dde2e9 55%,#c9d0da);border:1px solid #b4bcc8;border-radius:2px;"></div>
<svg style="position:absolute;left:26px;top:209.5px;" width="14" height="14" viewBox="0 0 14 14"><path d="M3 12l5-5" fill="none" stroke="#3a7ac8" stroke-width="2.4" stroke-linecap="round" stroke-linejoin="round"/><path d="M8 7a3 3 0 1 0 3-4l-1.5 1.5 .5 1.5 1.5.5 1.5-1.5" fill="none" stroke="#3a7ac8" stroke-width="1.8" stroke-linecap="round" stroke-linejoin="round"/></svg>
<div style="left:45.5px;top:209px;width:35.5px;height:14.800000000000011px;background:#fff;border:1px solid #c4c9d2"></div>
<div style="left:69px;top:210px;width:11px;height:12.800000000000011px;background:linear-gradient(#eceff3,#c9cfd8)"></div>
<svg style="position:absolute;left:70px;top:210px;" width="10" height="12.800000000000011" viewBox="0 0 10 12.800000000000011"><path d="M3 5.2l2 -2 2 2M3 7.6l2 2 2-2" fill="none" stroke="#6a7078" stroke-width="0.9" stroke-linecap="round" stroke-linejoin="round"/></svg>
<div class="t" style="left:53.9373578125px;top:212.62px;font-size:9px;color:#111;transform:scaleX(0.870);">100</div>
<div style="left:85.7px;top:209px;width:34.8px;height:14.800000000000011px;background:#fff;border:1px solid #c4c9d2"></div>
<div style="left:108.5px;top:210px;width:11.0px;height:12.800000000000011px;background:linear-gradient(#eceff3,#c9cfd8)"></div>
<svg style="position:absolute;left:109.5px;top:210px;" width="10" height="12.800000000000011" viewBox="0 0 10 12.800000000000011"><path d="M3 5.2l2 -2 2 2M3 7.6l2 2 2-2" fill="none" stroke="#6a7078" stroke-width="0.9" stroke-linecap="round" stroke-linejoin="round"/></svg>
<div class="t" style="left:97.791571875px;top:212.62px;font-size:9px;color:#111;transform:scaleX(0.870);">35</div>
<div style="left:125.6px;top:209px;width:35.099999999999994px;height:14.800000000000011px;background:#fff;border:1px solid #c4c9d2"></div>
<div style="left:148.7px;top:210px;width:11.0px;height:12.800000000000011px;background:linear-gradient(#eceff3,#c9cfd8)"></div>
<svg style="position:absolute;left:149.7px;top:210px;" width="10" height="12.800000000000011" viewBox="0 0 10 12.800000000000011"><path d="M3 5.2l2 -2 2 2M3 7.6l2 2 2-2" fill="none" stroke="#6a7078" stroke-width="0.9" stroke-linecap="round" stroke-linejoin="round"/></svg>
<div class="t" style="left:131.46208593749998px;top:212.62px;font-size:9px;color:#111;transform:scaleX(0.870);">0,18</div>
<div style="left:164.3px;top:209px;width:56.29999999999998px;height:14.800000000000011px;background:linear-gradient(#f2f4f7,#dde2e9 55%,#c9d0da);border:1px solid #b4bcc8;border-radius:2px;"></div>
<svg style="position:absolute;left:166px;top:210px;" width="12" height="13" viewBox="0 0 12 13"><path d="M2 6h8v6h-8z" fill="#d84a10"/><path d="M2 6l2-2h8l-2 2z" fill="#f08040"/><path d="M6 5l5-4" fill="none" stroke="#777" stroke-width="1.2" stroke-linecap="round" stroke-linejoin="round"/></svg>
<div class="t" style="left:179px;top:212.16px;font-size:9.5px;color:#1a1a1a;transform:scaleX(0.821);">Prospettiva</div>
<div class="t" style="left:140.4px;top:229.82px;font-size:9px;color:#1a1a1a;transform:scaleX(0.829);">Steo (m)</div>
<div class="t" style="left:40.4px;top:243.92px;font-size:9px;color:#3a9a98;transform:scaleX(0.771);">Distanza TELECAMERA</div>
<div style="left:134px;top:240.8px;width:40.69999999999999px;height:14.0px;background:#fff;border:1px solid #c4c9d2"></div>
<div style="left:162.7px;top:241.8px;width:11.0px;height:12.0px;background:linear-gradient(#eceff3,#c9cfd8)"></div>
<svg style="position:absolute;left:163.7px;top:241.8px;" width="10" height="12.0" viewBox="0 0 10 12.0"><path d="M3 4.8l2 -2 2 2M3 7.2l2 2 2-2" fill="none" stroke="#6a7078" stroke-width="0.9" stroke-linecap="round" stroke-linejoin="round"/></svg>
<div class="t" style="left:145.46208593749998px;top:244.02px;font-size:9px;color:#111;transform:scaleX(0.870);">1,00</div>
<div style="left:181px;top:240px;width:15px;height:14px;background:linear-gradient(#f2f4f7,#dde2e9 55%,#c9d0da);border:1px solid #b4bcc8;border-radius:2px;"></div>
<div class="t" style="left:187px;top:241.90px;font-size:10px;font-weight:bold;color:#1a1a1a;transform:scaleX(0.901);">-</div>
<div style="left:203px;top:240px;width:15.5px;height:14px;background:linear-gradient(#f2f4f7,#dde2e9 55%,#c9d0da);border:1px solid #b4bcc8;border-radius:2px;"></div>
<div class="t" style="left:207.5px;top:242.40px;font-size:10px;font-weight:bold;color:#1a1a1a;transform:scaleX(1.027);">+</div>
<div class="t" style="left:51.8px;top:261.62px;font-size:9px;color:#3a9a98;transform:scaleX(0.814);">Ruota TELECAMERA attorno al Punto di MIra</div>
<div class="t" style="left:39.8px;top:274.92px;font-size:9px;color:#1a1a1a;transform:scaleX(0.821);">Step</div>
<div class="t" style="left:79px;top:274.92px;font-size:9px;color:#1a1a1a;transform:scaleX(0.821);">Angolo</div>
<div style="left:31.5px;top:289px;width:30.5px;height:14.399999999999977px;background:#fff;border:1px solid #c4c9d2"></div>
<div style="left:50px;top:290px;width:11px;height:12.399999999999977px;background:linear-gradient(#eceff3,#c9cfd8)"></div>
<svg style="position:absolute;left:51px;top:290px;" width="10" height="12.399999999999977" viewBox="0 0 10 12.399999999999977"><path d="M3 5.0l2 -2 2 2M3 7.4l2 2 2-2" fill="none" stroke="#6a7078" stroke-width="0.9" stroke-linecap="round" stroke-linejoin="round"/></svg>
<div class="t" style="left:39.291571875px;top:292.42px;font-size:9px;color:#111;transform:scaleX(0.870);">10</div>
<div style="left:68.4px;top:288px;width:44.599999999999994px;height:15.399999999999977px;background:#fff;border:1px solid #c4c9d2"></div>
<div class="t" style="left:75.26485453125px;top:291.50px;font-size:9.8px;font-weight:bold;color:#111;transform:scaleX(1.030);">218,89</div>
<div style="left:118px;top:289px;width:15.5px;height:15px;background:linear-gradient(#f2f4f7,#dde2e9 55%,#c9d0da);border:1px solid #b4bcc8;border-radius:2px;"></div>
<svg style="position:absolute;left:119px;top:290px;" width="14" height="14" viewBox="0 0 14 14"><path d="M3 9a4.5 4.5 0 0 1 8-4" fill="none" stroke="#3a6ab0" stroke-width="2" stroke-linecap="round" stroke-linejoin="round"/><path d="M1 6l3 4 2-4z" fill="#3a6ab0"/><path d="M5 8h6v4h-6z" fill="#7aa0d0"/></svg>
<div style="left:137.8px;top:289px;width:15.799999999999983px;height:15px;background:linear-gradient(#f2f4f7,#dde2e9 55%,#c9d0da);border:1px solid #b4bcc8;border-radius:2px;"></div>
<svg style="position:absolute;left:139px;top:290px;" width="14" height="14" viewBox="0 0 14 14"><path d="M11 9a4.5 4.5 0 0 0-8-4" fill="none" stroke="#3a6ab0" stroke-width="2" stroke-linecap="round" stroke-linejoin="round"/><path d="M13 6l-3 4-2-4z" fill="#3a6ab0"/><path d="M3 8h6v4h-6z" fill="#7aa0d0"/></svg>
<div style="left:159.5px;top:289px;width:66.1px;height:4.5px;background:linear-gradient(#eef0f3,#d4d9e0);border:1px solid #c8ced6;border-radius:2px"></div>
<div style="left:160px;top:289.5px;width:37px;height:3.5px;background:linear-gradient(#fae6c0,#f2c47e)"></div>
<div style="left:196px;top:284px;width:6.5px;height:14.800000000000011px;background:linear-gradient(90deg,#f4f6f8,#d4dae2);border:1px solid #a8b0bc;border-radius:2px"></div>
<div style="left:163px;top:300.5px;width:59px;height:1.5px;background:#c4cad4"></div>
<div class="t" style="left:107.8px;top:327.92px;font-size:9px;color:#1a1a1a;transform:scaleX(0.839);">Altezza (m)</div>
<div class="t" style="left:152.9px;top:326.52px;font-size:9px;color:#1a1a1a;transform:scaleX(0.818);">Lunghezza (m)</div>
<div style="left:25px;top:337.5px;width:77.7px;height:14.800000000000011px;background:linear-gradient(#f2f4f7,#dde2e9 55%,#c9d0da);border:1px solid #b4bcc8;border-radius:2px;"></div>
<svg style="position:absolute;left:28px;top:338px;" width="14" height="14" viewBox="0 0 14 14"><path d="M2 5l5-3 5 3M2 8l5-3 5 3M2 11l5-3 5 3M7 2v10" fill="none" stroke="#806068" stroke-width="1.1" stroke-linecap="round" stroke-linejoin="round"/></svg>
<div class="t" style="left:44px;top:340.92px;font-size:9px;color:#1a1a1a;transform:scaleX(0.843);">Linee Assonom.</div>
<div style="left:107.3px;top:337px;width:40.000000000000014px;height:15.300000000000011px;background:#fff;border:1px solid #c4c9d2"></div>
<div class="t" style="left:117.47806484375px;top:340.45px;font-size:9.8px;font-weight:bold;color:#111;transform:scaleX(1.030);">6.00</div>
<div style="left:152.4px;top:337px;width:45.19999999999999px;height:15.300000000000011px;background:#fff;border:1px solid #c4c9d2"></div>
<div class="t" style="left:159.56485453125px;top:340.45px;font-size:9.8px;font-weight:bold;color:#111;transform:scaleX(1.030);">100.00</div>
<div style="left:200.7px;top:337px;width:15.300000000000011px;height:15.300000000000011px;background:linear-gradient(#f2f4f7,#dde2e9 55%,#c9d0da);border:1px solid #b4bcc8;border-radius:2px;"></div>
<svg style="position:absolute;left:202px;top:338px;" width="13" height="13" viewBox="0 0 13 13"><path d="M2 3h6v6h-6z" fill="#e8d080"/><path d="M6 6h5v5h-5z" fill="#a0b8d0"/></svg>
<div style="left:29.7px;top:379px;width:8.099999999999998px;height:7.600000000000023px;background:#fff;border:1px solid #8a929c"></div>
<svg style="position:absolute;left:29.7px;top:379px;" width="8" height="8" viewBox="0 0 8 8"><path d="M1.5 4l2 2 3-4.5" fill="none" stroke="#222" stroke-width="1.2" stroke-linecap="round" stroke-linejoin="round"/></svg>
<div class="t" style="left:40.4px;top:378.72px;font-size:9px;color:#1a1a1a;transform:scaleX(0.831);">wizard</div>
<div style="left:77.3px;top:375px;width:16.5px;height:14px;background:linear-gradient(#f2f4f7,#dde2e9 55%,#c9d0da);border:1px solid #b4bcc8;border-radius:2px;"></div>
<svg style="position:absolute;left:78.55px;top:375.0px;" width="14" height="14" viewBox="0 0 14 14"><path d="M7 2l5 5h-3v5h-4v-5h-3z" fill="#5a92c4"/></svg>
<div class="t" style="left:161px;top:380.82px;font-size:9px;color:#1a1a1a;transform:scaleX(0.875);">Incremento %</div>
<div style="left:26.4px;top:393px;width:15.200000000000003px;height:15px;background:linear-gradient(#f2f4f7,#dde2e9 55%,#c9d0da);border:1px solid #b4bcc8;border-radius:2px;"></div>
<svg style="position:absolute;left:28px;top:395px;" width="12" height="11" viewBox="0 0 12 11"><path d="M0 0h12v11h-12z" fill="#4a6a98"/><path d="M0 4h12v3h-12z" fill="#c8d8e8"/></svg>
<div style="left:45.5px;top:393px;width:15.200000000000003px;height:15px;background:linear-gradient(#f2f4f7,#dde2e9 55%,#c9d0da);border:1px solid #b4bcc8;border-radius:2px;"></div>
<svg style="position:absolute;left:46.1px;top:393.5px;" width="14" height="14" viewBox="0 0 14 14"><path d="M2 7l5-5v3h5v4h-5v3z" fill="#5a92c4"/></svg>
<div style="left:63.8px;top:393px;width:38.900000000000006px;height:15px;background:#fff;border:1px solid #c4c9d2"></div>
<div class="t" style="left:73.42806484375px;top:396.30px;font-size:9.8px;font-weight:bold;color:#111;transform:scaleX(1.030);">2.00</div>
<div style="left:107px;top:393px;width:16px;height:15px;background:linear-gradient(#f2f4f7,#dde2e9 55%,#c9d0da);border:1px solid #b4bcc8;border-radius:2px;"></div>
<svg style="position:absolute;left:108.0px;top:393.5px;" width="14" height="14" viewBox="0 0 14 14"><path d="M12 7l-5-5v3h-5v4h5v3z" fill="#5a92c4"/></svg>
<div style="left:146px;top:396px;width:12.699999999999989px;height:12.800000000000011px;background:linear-gradient(#f2f4f7,#dde2e9 55%,#c9d0da);border:1px solid #b4bcc8;border-radius:2px;"></div>
<div class="t" style="left:149.5px;top:398.42px;font-size:9px;color:#1a1a1a;transform:scaleX(1.046);">+</div>
<div style="left:163.8px;top:394px;width:37.39999999999998px;height:14.800000000000011px;background:#fff;border:1px solid #c4c9d2"></div>
<div class="t" style="left:176.8867896875px;top:397.20px;font-size:9.8px;font-weight:bold;color:#111;transform:scaleX(1.030);">10</div>
<div style="left:205.8px;top:396px;width:12.699999999999989px;height:12.800000000000011px;background:linear-gradient(#f2f4f7,#dde2e9 55%,#c9d0da);border:1px solid #b4bcc8;border-radius:2px;"></div>
<div class="t" style="left:210.5px;top:397.66px;font-size:9.5px;color:#1a1a1a;transform:scaleX(0.790);">-</div>
<div style="left:24.6px;top:413.4px;width:35.6px;height:9.600000000000023px;background:linear-gradient(#f2f4f7,#dde2e9 55%,#c9d0da);border:1px solid #b4bcc8;border-radius:2px;"></div>
<div class="t" style="left:31.5px;top:414.22px;font-size:9px;color:#1a1a1a;transform:scaleX(0.872);">Reset</div>
<div style="left:77.3px;top:415.4px;width:16.5px;height:13.600000000000023px;background:linear-gradient(#f2f4f7,#dde2e9 55%,#c9d0da);border:1px solid #b4bcc8;border-radius:2px;"></div>
<svg style="position:absolute;left:78.55px;top:415.2px;" width="14" height="14" viewBox="0 0 14 14"><path d="M7 12l5-5h-3v-5h-4v5h-3z" fill="#5a92c4"/></svg>
<div class="t" style="left:23.8px;top:435.92px;font-size:9px;color:#1a1a1a;transform:scaleX(0.848);">Lungh. orientativa Area Fotografica (m)</div>
<div style="left:160.5px;top:432.4px;width:58.80000000000001px;height:14.600000000000023px;background:#fff;border:1px solid #c4c9d2"></div>
<div class="t" style="left:174.46485453125px;top:435.50px;font-size:9.8px;font-weight:bold;color:#111;transform:scaleX(1.030);">100.00</div>
<div style="left:137.6px;top:454px;width:8.400000000000006px;height:8px;background:#fff;border:1px solid #8a929c"></div>
<svg style="position:absolute;left:137.6px;top:454px;" width="8" height="8" viewBox="0 0 8 8"><path d="M1.5 4l2 2 3-4.5" fill="none" stroke="#222" stroke-width="1.2" stroke-linecap="round" stroke-linejoin="round"/></svg>
<div class="t" style="left:148.5px;top:454.62px;font-size:9px;color:#1a1a1a;transform:scaleX(0.848);">Auto L3d x</div>
<div style="left:193px;top:451px;width:26.30000000000001px;height:15px;background:#fff;border:1px solid #c4c9d2"></div>
<div class="t" style="left:203.34339484375002px;top:454.30px;font-size:9.8px;font-weight:bold;color:#111;transform:scaleX(1.030);">5</div>
<div class="t" style="left:61.8px;top:472.62px;font-size:9px;color:#3a9a98;transform:scaleX(0.768);">REGOLAZIONE DISTANZA BACKGROUND</div>
<div class="t" style="left:108.4px;top:486.52px;font-size:9px;color:#1a1a1a;transform:scaleX(0.829);">Distanza Foto</div>
<div style="left:94.5px;top:499.8px;width:12.5px;height:13.999999999999943px;background:linear-gradient(#f2f4f7,#dde2e9 55%,#c9d0da);border:1px solid #b4bcc8;border-radius:2px;"></div>
<div class="t" style="left:98px;top:502.42px;font-size:9px;color:#1a1a1a;transform:scaleX(1.141);">+</div>
<div style="left:112px;top:499.3px;width:37.69999999999999px;height:15.300000000000011px;background:#fff;border:1px solid #c4c9d2"></div>
<div class="t" style="left:125.23678968749999px;top:502.75px;font-size:9.8px;font-weight:bold;color:#111;transform:scaleX(1.030);">10</div>
<div style="left:154.4px;top:499.8px;width:13.400000000000006px;height:13.999999999999943px;background:linear-gradient(#f2f4f7,#dde2e9 55%,#c9d0da);border:1px solid #b4bcc8;border-radius:2px;"></div>
<div class="t" style="left:159.5px;top:501.66px;font-size:9.5px;color:#1a1a1a;transform:scaleX(0.790);">-</div>
<div style="left:29px;top:525px;width:16px;height:14px;background:linear-gradient(#f2f4f7,#dde2e9 55%,#c9d0da);border:1px solid #b4bcc8;border-radius:2px;"></div>
<svg style="position:absolute;left:30px;top:525px;" width="14" height="14" viewBox="0 0 14 14"><path d="M7 4a3 3 0 1 1 0 6a3 3 0 1 1 0-6z" fill="#fff"/><path d="M7 4a3 3 0 1 1 0 6a3 3 0 1 1 0-6z" fill="none" stroke="#333" stroke-width="1.3" stroke-linecap="round" stroke-linejoin="round"/><path d="M7 0.5v2M7 11.5v2M0.5 7h2M11.5 7h2M2.4 2.4l1.4 1.4M10.2 10.2l1.4 1.4M2.4 11.6l1.4-1.4M10.2 3.8l1.4-1.4" fill="none" stroke="#333" stroke-width="1.2" stroke-linecap="round" stroke-linejoin="round"/></svg>
<div style="left:49.8px;top:523px;width:186.0px;height:20.5px;background:#fff;border:1px solid #aab2bc"></div>
<svg style="position:absolute;left:53.2px;top:528.3px;" width="10" height="10" viewBox="0 0 10 10"><circle cx="5" cy="5" r="4" fill="#f4f5f7" stroke="#8a929c" stroke-width="1"/></svg>
<svg style="position:absolute;left:75.5px;top:528.3px;" width="10" height="10" viewBox="0 0 10 10"><circle cx="5" cy="5" r="4" fill="#f4f5f7" stroke="#8a929c" stroke-width="1"/></svg>
<svg style="position:absolute;left:97.8px;top:528.3px;" width="10" height="10" viewBox="0 0 10 10"><circle cx="5" cy="5" r="4" fill="#f4f5f7" stroke="#8a929c" stroke-width="1"/></svg>
<svg style="position:absolute;left:120px;top:528.3px;" width="10" height="10" viewBox="0 0 10 10"><circle cx="5" cy="5" r="4" fill="#f4f5f7" stroke="#8a929c" stroke-width="1"/></svg>
<svg style="position:absolute;left:142.4px;top:528.3px;" width="10" height="10" viewBox="0 0 10 10"><circle cx="5" cy="5" r="4" fill="#f4f5f7" stroke="#8a929c" stroke-width="1"/><circle cx="5" cy="5" r="2" fill="#9aa2ac"/></svg>
<svg style="position:absolute;left:164.7px;top:528.3px;" width="10" height="10" viewBox="0 0 10 10"><circle cx="5" cy="5" r="4" fill="#f4f5f7" stroke="#8a929c" stroke-width="1"/></svg>
<svg style="position:absolute;left:187px;top:528.3px;" width="10" height="10" viewBox="0 0 10 10"><circle cx="5" cy="5" r="4" fill="#f4f5f7" stroke="#8a929c" stroke-width="1"/></svg>
<svg style="position:absolute;left:209.3px;top:528.3px;" width="10" height="10" viewBox="0 0 10 10"><circle cx="5" cy="5" r="4" fill="#f4f5f7" stroke="#8a929c" stroke-width="1"/></svg>
<div class="t" style="left:65px;top:529.42px;font-size:9px;color:#1a1a1a;transform:scaleX(0.877);">N</div>
<div class="t" style="left:87px;top:529.42px;font-size:9px;color:#1a1a1a;transform:scaleX(0.720);">NE</div>
<div class="t" style="left:109.3px;top:529.42px;font-size:9px;color:#1a1a1a;transform:scaleX(0.766);">E</div>
<div class="t" style="left:131.5px;top:529.42px;font-size:9px;color:#1a1a1a;transform:scaleX(0.750);">SE</div>
<div class="t" style="left:153.8px;top:529.42px;font-size:9px;color:#1a1a1a;transform:scaleX(0.800);">S</div>
<div class="t" style="left:176px;top:529.42px;font-size:9px;color:#1a1a1a;transform:scaleX(0.738);">SO</div>
<div class="t" style="left:199px;top:529.42px;font-size:9px;color:#1a1a1a;transform:scaleX(0.714);">O</div>
<div class="t" style="left:220.7px;top:529.42px;font-size:9px;color:#1a1a1a;transform:scaleX(0.837);">NO</div>
<div style="left:241px;top:87px;width:3px;height:448px;background:linear-gradient(90deg,#d4d8de,#eef0f3)"></div>
<div style="left:244px;top:87.5px;width:537px;height:447.5px;background:#000"></div>
<svg style="position:absolute;left:244px;top:88px;" width="537" height="447" viewBox="0 0 537 447">
<line x1="38.3" y1="26.6" x2="143" y2="159.5" stroke="#c07070" stroke-width="0.9"/>
<polygon points="137,170 145,162 160,170 160,179 151,183 137,180" fill="#e6dab0"/>
<polygon points="137,170 145,162 160,170 154,174 140,173" fill="#b24a30"/>
<path d="M140 174l1 6M148 175v7M154 174v8" stroke="#a89870" stroke-width="0.8"/>
</svg>
<svg style="position:absolute;left:330px;top:220px;" width="260" height="310" viewBox="0 0 260 310"><defs><clipPath id="cq"><polygon points="252,7 239,221 6,305 87,87"/></clipPath>
<filter id="bl" x="-2%" y="-2%" width="104%" height="104%"><feGaussianBlur stdDeviation="1.8"/></filter></defs>
<g clip-path="url(#cq)"><g filter="url(#bl)" class="cg"><rect x="246" y="4" fill="#ae8d6f"/><rect x="250" y="4" fill="#a38a69"/><rect x="238" y="8" fill="#bea182"/><rect x="242" y="8" fill="#25232d"/><rect x="246" y="8" fill="#1a1d29"/><rect x="250" y="8" fill="#b39875"/><rect x="230" y="12" fill="#c89679"/><rect x="234" y="12" fill="#bc9678"/><rect x="238" y="12" fill="#272a33"/><rect x="242" y="12" fill="#232536"/><rect x="246" y="12" fill="#26272a"/><rect x="250" y="12" fill="#b58a73"/><rect x="222" y="16" fill="#bf966e"/><rect x="226" y="16" fill="#b88a65"/><rect x="230" y="16" fill="#d3a479"/><rect x="234" y="16" fill="#b59876"/><rect x="238" y="16" fill="#232a27"/><rect x="242" y="16" fill="#23282f"/><rect x="246" y="16" fill="#162127"/><rect x="250" y="16" fill="#a58766"/><rect x="210" y="20" fill="#c89e74"/><rect x="214" y="20" fill="#cb947a"/><rect x="218" y="20" fill="#cf9777"/><rect x="222" y="20" fill="#c59d7c"/><rect x="226" y="20" fill="#49592e"/><rect x="230" y="20" fill="#556743"/><rect x="234" y="20" fill="#476135"/><rect x="238" y="20" fill="#292b2d"/><rect x="242" y="20" fill="#22222b"/><rect x="246" y="20" fill="#2c3635"/><rect x="250" y="20" fill="#a88c6d"/><rect x="202" y="24" fill="#c89a75"/><rect x="206" y="24" fill="#c3966e"/><rect x="210" y="24" fill="#cda578"/><rect x="214" y="24" fill="#4a5f3b"/><rect x="218" y="24" fill="#4e672e"/><rect x="222" y="24" fill="#455a31"/><rect x="226" y="24" fill="#4e6035"/><rect x="230" y="24" fill="#697a53"/><rect x="234" y="24" fill="#4d5637"/><rect x="238" y="24" fill="#2a2e3c"/><rect x="242" y="24" fill="#342736"/><rect x="246" y="24" fill="#2a2c27"/><rect x="250" y="24" fill="#b8a27c"/><rect x="194" y="28" fill="#b79377"/><rect x="198" y="28" fill="#ba9c84"/><rect x="202" y="28" fill="#cdab75"/><rect x="206" y="28" fill="#cc9f7b"/><rect x="210" y="28" fill="#546038"/><rect x="214" y="28" fill="#52663c"/><rect x="218" y="28" fill="#5f7644"/><rect x="222" y="28" fill="#4b6742"/><rect x="226" y="28" fill="#4d5f32"/><rect x="230" y="28" fill="#414f25"/><rect x="234" y="28" fill="#556d3b"/><rect x="238" y="28" fill="#353538"/><rect x="242" y="28" fill="#2a2630"/><rect x="246" y="28" fill="#302739"/><rect x="250" y="28" fill="#9b7b59"/><rect x="186" y="32" fill="#b39279"/><rect x="190" y="32" fill="#b39779"/><rect x="194" y="32" fill="#aa8166"/><rect x="198" y="32" fill="#a8654a"/><rect x="202" y="32" fill="#c1916f"/><rect x="206" y="32" fill="#d6aa85"/><rect x="210" y="32" fill="#485f3e"/><rect x="214" y="32" fill="#3d572e"/><rect x="218" y="32" fill="#536437"/><rect x="222" y="32" fill="#3d582a"/><rect x="226" y="32" fill="#435432"/><rect x="230" y="32" fill="#454e31"/><rect x="234" y="32" fill="#416034"/><rect x="238" y="32" fill="#1b2027"/><rect x="242" y="32" fill="#303039"/><rect x="246" y="32" fill="#333232"/><rect x="250" y="32" fill="#c09c7d"/><rect x="178" y="36" fill="#c2ad96"/><rect x="182" y="36" fill="#a68d67"/><rect x="186" y="36" fill="#ba957a"/><rect x="190" y="36" fill="#b79577"/><rect x="194" y="36" fill="#ad7855"/><rect x="198" y="36" fill="#ad815b"/><rect x="202" y="36" fill="#b68968"/><rect x="206" y="36" fill="#d6a682"/><rect x="210" y="36" fill="#405125"/><rect x="214" y="36" fill="#646b46"/><rect x="218" y="36" fill="#53653b"/><rect x="222" y="36" fill="#69744b"/><rect x="226" y="36" fill="#647c50"/><rect x="230" y="36" fill="#485230"/><rect x="234" y="36" fill="#51603a"/><rect x="238" y="36" fill="#2d2e37"/><rect x="242" y="36" fill="#2b282f"/><rect x="246" y="36" fill="#262631"/><rect x="250" y="36" fill="#b0916e"/><rect x="170" y="40" fill="#b99978"/><rect x="174" y="40" fill="#b1907a"/><rect x="178" y="40" fill="#a6815d"/><rect x="182" y="40" fill="#a88261"/><rect x="186" y="40" fill="#a88a6a"/><rect x="190" y="40" fill="#cd9072"/><rect x="194" y="40" fill="#d0966d"/><rect x="198" y="40" fill="#bb7d62"/><rect x="202" y="40" fill="#c48570"/><rect x="206" y="40" fill="#cfa286"/><rect x="210" y="40" fill="#506438"/><rect x="214" y="40" fill="#455934"/><rect x="218" y="40" fill="#576f45"/><rect x="222" y="40" fill="#526540"/><rect x="226" y="40" fill="#42592b"/><rect x="230" y="40" fill="#435c39"/><rect x="234" y="40" fill="#55683b"/><rect x="238" y="40" fill="#353739"/><rect x="242" y="40" fill="#212c36"/><rect x="246" y="40" fill="#202323"/><rect x="250" y="40" fill="#947756"/><rect x="162" y="44" fill="#b19477"/><rect x="166" y="44" fill="#c8a085"/><rect x="170" y="44" fill="#9d8366"/><rect x="174" y="44" fill="#b0937a"/><rect x="178" y="44" fill="#ac8f6e"/><rect x="182" y="44" fill="#ba9a7a"/><rect x="186" y="44" fill="#ad7a5e"/><rect x="190" y="44" fill="#aa7049"/><rect x="194" y="44" fill="#b57f5f"/><rect x="198" y="44" fill="#b67f5f"/><rect x="202" y="44" fill="#c38562"/><rect x="206" y="44" fill="#bd8d6b"/><rect x="210" y="44" fill="#4b6135"/><rect x="214" y="44" fill="#657f53"/><rect x="218" y="44" fill="#516c48"/><rect x="222" y="44" fill="#5f6b47"/><rect x="226" y="44" fill="#5b6d43"/><rect x="230" y="44" fill="#506d3d"/><rect x="234" y="44" fill="#5a653e"/><rect x="238" y="44" fill="#5b6c48"/><rect x="242" y="44" fill="#586648"/><rect x="246" y="44" fill="#c5a887"/><rect x="250" y="44" fill="#bfa784"/><rect x="154" y="48" fill="#a98e6a"/><rect x="158" y="48" fill="#aa886c"/><rect x="162" y="48" fill="#c8a390"/><rect x="166" y="48" fill="#b38f73"/><rect x="170" y="48" fill="#a08058"/><rect x="174" y="48" fill="#95835e"/><rect x="178" y="48" fill="#ad906e"/><rect x="182" y="48" fill="#b47f61"/><rect x="186" y="48" fill="#be8165"/><rect x="190" y="48" fill="#ba7d5a"/><rect x="194" y="48" fill="#b27759"/><rect x="198" y="48" fill="#425c39"/><rect x="202" y="48" fill="#a69463"/><rect x="206" y="48" fill="#a98b6e"/><rect x="210" y="48" fill="#4f613c"/><rect x="214" y="48" fill="#395124"/><rect x="218" y="48" fill="#485634"/><rect x="222" y="48" fill="#586d43"/><rect x="226" y="48" fill="#41572b"/><rect x="230" y="48" fill="#525f3d"/><rect x="234" y="48" fill="#60774e"/><rect x="238" y="48" fill="#607648"/><rect x="242" y="48" fill="#4f5c41"/><rect x="246" y="48" fill="#b4a07f"/><rect x="250" y="48" fill="#b79178"/><rect x="146" y="52" fill="#c1a181"/><rect x="150" y="52" fill="#a18865"/><rect x="154" y="52" fill="#bc9374"/><rect x="158" y="52" fill="#b99476"/><rect x="162" y="52" fill="#b49076"/><rect x="166" y="52" fill="#aa8a6c"/><rect x="170" y="52" fill="#af926d"/><rect x="174" y="52" fill="#b79d81"/><rect x="178" y="52" fill="#c99071"/><rect x="182" y="52" fill="#a96c51"/><rect x="186" y="52" fill="#a57354"/><rect x="190" y="52" fill="#b77857"/><rect x="194" y="52" fill="#3c5932"/><rect x="198" y="52" fill="#446033"/><rect x="202" y="52" fill="#c77a70"/><rect x="206" y="52" fill="#b77461"/><rect x="210" y="52" fill="#3b5a32"/><rect x="214" y="52" fill="#606b43"/><rect x="218" y="52" fill="#5a7340"/><rect x="222" y="52" fill="#3e6336"/><rect x="226" y="52" fill="#616d44"/><rect x="230" y="52" fill="#475c39"/><rect x="234" y="52" fill="#506340"/><rect x="238" y="52" fill="#546b40"/><rect x="242" y="52" fill="#4a5a2c"/><rect x="246" y="52" fill="#bf9988"/><rect x="250" y="52" fill="#636e41"/><rect x="138" y="56" fill="#a09075"/><rect x="142" y="56" fill="#b7ad8f"/><rect x="146" y="56" fill="#a68f76"/><rect x="150" y="56" fill="#bfa28b"/><rect x="154" y="56" fill="#ae946f"/><rect x="158" y="56" fill="#bda283"/><rect x="162" y="56" fill="#b69d72"/><rect x="166" y="56" fill="#aa866e"/><rect x="170" y="56" fill="#b69b75"/><rect x="174" y="56" fill="#bc8566"/><rect x="178" y="56" fill="#b97b59"/><rect x="182" y="56" fill="#c68667"/><rect x="186" y="56" fill="#c88877"/><rect x="190" y="56" fill="#496b43"/><rect x="194" y="56" fill="#495f32"/><rect x="198" y="56" fill="#43542a"/><rect x="202" y="56" fill="#b67862"/><rect x="206" y="56" fill="#bf7a66"/><rect x="210" y="56" fill="#ba7966"/><rect x="214" y="56" fill="#d0826e"/><rect x="218" y="56" fill="#ac5e4b"/><rect x="222" y="56" fill="#bd8169"/><rect x="226" y="56" fill="#ac6c4a"/><rect x="230" y="56" fill="#c6836d"/><rect x="234" y="56" fill="#ca8a6f"/><rect x="238" y="56" fill="#c28072"/><rect x="242" y="56" fill="#c17965"/><rect x="246" y="56" fill="#b69678"/><rect x="250" y="56" fill="#60673b"/><rect x="130" y="60" fill="#beb196"/><rect x="134" y="60" fill="#b0a383"/><rect x="138" y="60" fill="#b8a795"/><rect x="142" y="60" fill="#aca58d"/><rect x="146" y="60" fill="#a88574"/><rect x="150" y="60" fill="#ae8870"/><rect x="154" y="60" fill="#c2ad92"/><rect x="158" y="60" fill="#ac9973"/><rect x="162" y="60" fill="#9e7563"/><rect x="166" y="60" fill="#a98f6c"/><rect x="170" y="60" fill="#a37553"/><rect x="174" y="60" fill="#b47959"/><rect x="178" y="60" fill="#9f6a4a"/><rect x="182" y="60" fill="#3c6037"/><rect x="186" y="60" fill="#516d45"/><rect x="190" y="60" fill="#446432"/><rect x="194" y="60" fill="#b19674"/><rect x="198" y="60" fill="#b26b51"/><rect x="202" y="60" fill="#c37865"/><rect x="206" y="60" fill="#c57e60"/><rect x="210" y="60" fill="#cb866f"/><rect x="214" y="60" fill="#be7863"/><rect x="218" y="60" fill="#b56f60"/><rect x="222" y="60" fill="#b36858"/><rect x="226" y="60" fill="#cc8471"/><rect x="230" y="60" fill="#b87966"/><rect x="234" y="60" fill="#b97862"/><rect x="238" y="60" fill="#c9816c"/><rect x="242" y="60" fill="#ba765a"/><rect x="246" y="60" fill="#ab896f"/><rect x="122" y="64" fill="#b8b588"/><rect x="126" y="64" fill="#a7a793"/><rect x="130" y="64" fill="#8f8567"/><rect x="134" y="64" fill="#b0b195"/><rect x="138" y="64" fill="#afa88a"/><rect x="142" y="64" fill="#b3a08e"/><rect x="146" y="64" fill="#b59176"/><rect x="150" y="64" fill="#b89e83"/><rect x="154" y="64" fill="#9c896e"/><rect x="158" y="64" fill="#bf9b7d"/><rect x="162" y="64" fill="#b7967b"/><rect x="166" y="64" fill="#dd9878"/><rect x="170" y="64" fill="#b98762"/><rect x="174" y="64" fill="#b37154"/><rect x="178" y="64" fill="#3c592b"/><rect x="182" y="64" fill="#24421a"/><rect x="186" y="64" fill="#3e5a2e"/><rect x="190" y="64" fill="#a27f69"/><rect x="194" y="64" fill="#b89779"/><rect x="198" y="64" fill="#c7866f"/><rect x="202" y="64" fill="#c57964"/><rect x="206" y="64" fill="#b27862"/><rect x="210" y="64" fill="#c07e67"/><rect x="214" y="64" fill="#c58371"/><rect x="218" y="64" fill="#cc8470"/><rect x="222" y="64" fill="#b3795a"/><rect x="226" y="64" fill="#c67e65"/><rect x="230" y="64" fill="#b97a60"/><rect x="234" y="64" fill="#cb886f"/><rect x="238" y="64" fill="#c77868"/><rect x="242" y="64" fill="#be7b69"/><rect x="246" y="64" fill="#ccad87"/><rect x="114" y="68" fill="#cdc0a2"/><rect x="118" y="68" fill="#aca58d"/><rect x="122" y="68" fill="#b3a392"/><rect x="126" y="68" fill="#a19c7f"/><rect x="130" y="68" fill="#a29979"/><rect x="134" y="68" fill="#b5a689"/><rect x="138" y="68" fill="#b3a790"/><rect x="142" y="68" fill="#a7a487"/><rect x="146" y="68" fill="#b8af9d"/><rect x="150" y="68" fill="#9d7e5c"/><rect x="154" y="68" fill="#997754"/><rect x="158" y="68" fill="#9f7b5f"/><rect x="162" y="68" fill="#c38b67"/><rect x="166" y="68" fill="#bc8867"/><rect x="170" y="68" fill="#b87d5c"/><rect x="174" y="68" fill="#345123"/><rect x="178" y="68" fill="#4b5e3e"/><rect x="182" y="68" fill="#3e6739"/><rect x="186" y="68" fill="#c5ae90"/><rect x="190" y="68" fill="#b39870"/><rect x="194" y="68" fill="#9a7f61"/><rect x="198" y="68" fill="#c27d64"/><rect x="202" y="68" fill="#bd785f"/><rect x="206" y="68" fill="#c07463"/><rect x="210" y="68" fill="#c8886b"/><rect x="214" y="68" fill="#c87d70"/><rect x="218" y="68" fill="#ba6e5a"/><rect x="222" y="68" fill="#bf7d64"/><rect x="226" y="68" fill="#c4815f"/><rect x="230" y="68" fill="#c97e6f"/><rect x="234" y="68" fill="#c67a6e"/><rect x="238" y="68" fill="#c57765"/><rect x="242" y="68" fill="#b57a63"/><rect x="246" y="68" fill="#c7a381"/><rect x="106" y="72" fill="#a69985"/><rect x="110" y="72" fill="#b5ab90"/><rect x="114" y="72" fill="#b7ac8c"/><rect x="118" y="72" fill="#a2917b"/><rect x="122" y="72" fill="#998f6f"/><rect x="126" y="72" fill="#ada38b"/><rect x="130" y="72" fill="#a09b83"/><rect x="134" y="72" fill="#afab91"/><rect x="138" y="72" fill="#b7ae96"/><rect x="142" y="72" fill="#a29f86"/><rect x="146" y="72" fill="#b5a38b"/><rect x="150" y="72" fill="#ae946f"/><rect x="154" y="72" fill="#d0af91"/><rect x="158" y="72" fill="#cc936f"/><rect x="162" y="72" fill="#c48766"/><rect x="166" y="72" fill="#b87861"/><rect x="170" y="72" fill="#355127"/><rect x="174" y="72" fill="#495a39"/><rect x="178" y="72" fill="#435a33"/><rect x="182" y="72" fill="#a98863"/><rect x="186" y="72" fill="#ac9872"/><rect x="190" y="72" fill="#a38670"/><rect x="194" y="72" fill="#bd9e78"/><rect x="198" y="72" fill="#b67060"/><rect x="202" y="72" fill="#b36e54"/><rect x="206" y="72" fill="#c98066"/><rect x="210" y="72" fill="#a3634a"/><rect x="214" y="72" fill="#cd876b"/><rect x="218" y="72" fill="#cb7e6c"/><rect x="222" y="72" fill="#af6e51"/><rect x="226" y="72" fill="#ae6655"/><rect x="230" y="72" fill="#b5755e"/><rect x="234" y="72" fill="#bc7765"/><rect x="238" y="72" fill="#c87e71"/><rect x="242" y="72" fill="#bb7665"/><rect x="246" y="72" fill="#bca289"/><rect x="98" y="76" fill="#aca389"/><rect x="102" y="76" fill="#b3a894"/><rect x="106" y="76" fill="#c1a795"/><rect x="110" y="76" fill="#b6ad97"/><rect x="114" y="76" fill="#aaa081"/><rect x="118" y="76" fill="#b5aa94"/><rect x="122" y="76" fill="#aba484"/><rect x="126" y="76" fill="#b2a28e"/><rect x="130" y="76" fill="#a29176"/><rect x="134" y="76" fill="#c7c5a7"/><rect x="138" y="76" fill="#c2bfa6"/><rect x="142" y="76" fill="#afae8b"/><rect x="146" y="76" fill="#a9a187"/><rect x="150" y="76" fill="#b99278"/><rect x="154" y="76" fill="#c69477"/><rect x="158" y="76" fill="#a66c49"/><rect x="162" y="76" fill="#b7866a"/><rect x="166" y="76" fill="#2e4122"/><rect x="170" y="76" fill="#365129"/><rect x="174" y="76" fill="#3a522b"/><rect x="178" y="76" fill="#a17b62"/><rect x="182" y="76" fill="#c9a58d"/><rect x="186" y="76" fill="#9c826a"/><rect x="190" y="76" fill="#b49374"/><rect x="194" y="76" fill="#c29f7d"/><rect x="198" y="76" fill="#ba6755"/><rect x="202" y="76" fill="#bf7a60"/><rect x="206" y="76" fill="#ba6c5c"/><rect x="210" y="76" fill="#ab6a57"/><rect x="214" y="76" fill="#b57055"/><rect x="218" y="76" fill="#bf7b68"/><rect x="222" y="76" fill="#a25a43"/><rect x="226" y="76" fill="#bc7464"/><rect x="230" y="76" fill="#ad7459"/><rect x="234" y="76" fill="#c4866e"/><rect x="238" y="76" fill="#c48567"/><rect x="242" y="76" fill="#ae7557"/><rect x="246" y="76" fill="#9e8261"/><rect x="90" y="80" fill="#ab9f84"/><rect x="94" y="80" fill="#b0a68d"/><rect x="98" y="80" fill="#aea88d"/><rect x="102" y="80" fill="#b6ad95"/><rect x="106" y="80" fill="#b19f8b"/><rect x="110" y="80" fill="#969679"/><rect x="114" y="80" fill="#b9ae8d"/><rect x="118" y="80" fill="#bdb799"/><rect x="122" y="80" fill="#918e6f"/><rect x="126" y="80" fill="#ad9e84"/><rect x="130" y="80" fill="#b4ad8d"/><rect x="134" y="80" fill="#d3c7aa"/><rect x="138" y="80" fill="#b4a78a"/><rect x="142" y="80" fill="#aeab8d"/><rect x="146" y="80" fill="#a49f84"/><rect x="150" y="80" fill="#a96b56"/><rect x="154" y="80" fill="#c37f5e"/><rect x="158" y="80" fill="#ca906e"/><rect x="162" y="80" fill="#3e562f"/><rect x="166" y="80" fill="#3a512e"/><rect x="170" y="80" fill="#334f27"/><rect x="174" y="80" fill="#a88264"/><rect x="178" y="80" fill="#a38760"/><rect x="182" y="80" fill="#a4926e"/><rect x="186" y="80" fill="#a18871"/><rect x="190" y="80" fill="#afa492"/><rect x="194" y="80" fill="#928077"/><rect x="198" y="80" fill="#8b8771"/><rect x="202" y="80" fill="#a7988d"/><rect x="206" y="80" fill="#9fa48d"/><rect x="210" y="80" fill="#9f9989"/><rect x="214" y="80" fill="#a39c85"/><rect x="218" y="80" fill="#9f8d7f"/><rect x="222" y="80" fill="#aa9d87"/><rect x="226" y="80" fill="#918879"/><rect x="230" y="80" fill="#a6967f"/><rect x="234" y="80" fill="#b1a48f"/><rect x="238" y="80" fill="#8b886f"/><rect x="242" y="80" fill="#948b7a"/><rect x="246" y="80" fill="#be9780"/><rect x="82" y="84" fill="#535f34"/><rect x="86" y="84" fill="#bfb79d"/><rect x="90" y="84" fill="#b1a48b"/><rect x="94" y="84" fill="#afaf8b"/><rect x="98" y="84" fill="#b9ad95"/><rect x="102" y="84" fill="#b0af8c"/><rect x="106" y="84" fill="#b7b59c"/><rect x="110" y="84" fill="#b7a98f"/><rect x="114" y="84" fill="#948274"/><rect x="118" y="84" fill="#b5a78d"/><rect x="122" y="84" fill="#d2bfaa"/><rect x="126" y="84" fill="#948d72"/><rect x="130" y="84" fill="#aaaa81"/><rect x="134" y="84" fill="#b3a690"/><rect x="138" y="84" fill="#c5bfa3"/><rect x="142" y="84" fill="#b0a387"/><rect x="146" y="84" fill="#c0865c"/><rect x="150" y="84" fill="#b27658"/><rect x="154" y="84" fill="#c38769"/><rect x="158" y="84" fill="#38522a"/><rect x="162" y="84" fill="#9e9480"/><rect x="166" y="84" fill="#b6aba1"/><rect x="170" y="84" fill="#a6a593"/><rect x="174" y="84" fill="#b6aa90"/><rect x="178" y="84" fill="#999078"/><rect x="182" y="84" fill="#9a9281"/><rect x="186" y="84" fill="#989887"/><rect x="190" y="84" fill="#a39685"/><rect x="194" y="84" fill="#a19c8c"/><rect x="198" y="84" fill="#9f9683"/><rect x="202" y="84" fill="#b4a693"/><rect x="206" y="84" fill="#998e7f"/><rect x="210" y="84" fill="#978c71"/><rect x="214" y="84" fill="#a79d89"/><rect x="218" y="84" fill="#9b9582"/><rect x="222" y="84" fill="#9f9987"/><rect x="226" y="84" fill="#a19d8d"/><rect x="230" y="84" fill="#a39988"/><rect x="234" y="84" fill="#ac9b87"/><rect x="238" y="84" fill="#a49584"/><rect x="242" y="84" fill="#a1907f"/><rect x="246" y="84" fill="#5c6f44"/><rect x="82" y="88" fill="#56683b"/><rect x="86" y="88" fill="#969578"/><rect x="90" y="88" fill="#afa787"/><rect x="94" y="88" fill="#b7b09a"/><rect x="98" y="88" fill="#ae9c8a"/><rect x="102" y="88" fill="#c3b29e"/><rect x="106" y="88" fill="#c6b994"/><rect x="110" y="88" fill="#ae9787"/><rect x="114" y="88" fill="#cfc4a5"/><rect x="118" y="88" fill="#898273"/><rect x="122" y="88" fill="#9c9788"/><rect x="126" y="88" fill="#9d9180"/><rect x="130" y="88" fill="#91937e"/><rect x="134" y="88" fill="#918873"/><rect x="138" y="88" fill="#a09c87"/><rect x="142" y="88" fill="#928876"/><rect x="146" y="88" fill="#ab8569"/><rect x="150" y="88" fill="#c68866"/><rect x="154" y="88" fill="#3f5e3a"/><rect x="158" y="88" fill="#3f5639"/><rect x="162" y="88" fill="#9d9788"/><rect x="166" y="88" fill="#8d8164"/><rect x="170" y="88" fill="#9fa18c"/><rect x="174" y="88" fill="#b1aa9c"/><rect x="178" y="88" fill="#978e7d"/><rect x="182" y="88" fill="#988e7a"/><rect x="186" y="88" fill="#adaa91"/><rect x="190" y="88" fill="#9f9d8a"/><rect x="194" y="88" fill="#99907c"/><rect x="198" y="88" fill="#89806e"/><rect x="202" y="88" fill="#958f79"/><rect x="206" y="88" fill="#a09583"/><rect x="210" y="88" fill="#a99f92"/><rect x="214" y="88" fill="#9a9280"/><rect x="218" y="88" fill="#a19284"/><rect x="222" y="88" fill="#aca288"/><rect x="226" y="88" fill="#918c7e"/><rect x="230" y="88" fill="#968776"/><rect x="234" y="88" fill="#a09486"/><rect x="238" y="88" fill="#9a907b"/><rect x="242" y="88" fill="#a29586"/><rect x="246" y="88" fill="#60603d"/><rect x="82" y="92" fill="#5f6f3d"/><rect x="86" y="92" fill="#a09187"/><rect x="90" y="92" fill="#9d997f"/><rect x="94" y="92" fill="#bca997"/><rect x="98" y="92" fill="#82836d"/><rect x="102" y="92" fill="#8e8f7a"/><rect x="106" y="92" fill="#939582"/><rect x="110" y="92" fill="#96917b"/><rect x="114" y="92" fill="#7c7264"/><rect x="118" y="92" fill="#929181"/><rect x="122" y="92" fill="#8c8472"/><rect x="126" y="92" fill="#8f8378"/><rect x="130" y="92" fill="#989181"/><rect x="134" y="92" fill="#485835"/><rect x="138" y="92" fill="#3d5128"/><rect x="142" y="92" fill="#455e36"/><rect x="146" y="92" fill="#9a795a"/><rect x="150" y="92" fill="#325421"/><rect x="154" y="92" fill="#1b330e"/><rect x="158" y="92" fill="#36512e"/><rect x="162" y="92" fill="#a57d5c"/><rect x="166" y="92" fill="#a9988e"/><rect x="170" y="92" fill="#8b8972"/><rect x="174" y="92" fill="#968d78"/><rect x="178" y="92" fill="#8e8776"/><rect x="182" y="92" fill="#afa494"/><rect x="186" y="92" fill="#a7a683"/><rect x="190" y="92" fill="#a49f8d"/><rect x="194" y="92" fill="#958c7b"/><rect x="198" y="92" fill="#938585"/><rect x="202" y="92" fill="#9d8e85"/><rect x="206" y="92" fill="#a0947f"/><rect x="210" y="92" fill="#a29b88"/><rect x="214" y="92" fill="#94897e"/><rect x="218" y="92" fill="#7f7463"/><rect x="222" y="92" fill="#a59985"/><rect x="226" y="92" fill="#a59387"/><rect x="230" y="92" fill="#8e8a77"/><rect x="234" y="92" fill="#9d9681"/><rect x="238" y="92" fill="#a6a08c"/><rect x="242" y="92" fill="#968a7d"/><rect x="246" y="92" fill="#74764e"/><rect x="78" y="96" fill="#8b8374"/><rect x="82" y="96" fill="#a49c95"/><rect x="86" y="96" fill="#968979"/><rect x="90" y="96" fill="#7d7567"/><rect x="94" y="96" fill="#918982"/><rect x="98" y="96" fill="#857e70"/><rect x="102" y="96" fill="#938f7b"/><rect x="106" y="96" fill="#90877a"/><rect x="110" y="96" fill="#939282"/><rect x="114" y="96" fill="#938c7e"/><rect x="118" y="96" fill="#978e7d"/><rect x="122" y="96" fill="#a39b8a"/><rect x="126" y="96" fill="#424d33"/><rect x="130" y="96" fill="#414f34"/><rect x="134" y="96" fill="#384427"/><rect x="138" y="96" fill="#3b4928"/><rect x="142" y="96" fill="#3d5428"/><rect x="146" y="96" fill="#ab896b"/><rect x="150" y="96" fill="#b39178"/><rect x="154" y="96" fill="#b38a75"/><rect x="158" y="96" fill="#a4866a"/><rect x="162" y="96" fill="#c29a84"/><rect x="166" y="96" fill="#ac9b90"/><rect x="170" y="96" fill="#a09385"/><rect x="174" y="96" fill="#ae9f92"/><rect x="178" y="96" fill="#a9a88b"/><rect x="182" y="96" fill="#a7a089"/><rect x="186" y="96" fill="#988c82"/><rect x="190" y="96" fill="#9a957e"/><rect x="194" y="96" fill="#9a9885"/><rect x="198" y="96" fill="#989582"/><rect x="202" y="96" fill="#a5978a"/><rect x="206" y="96" fill="#a89b89"/><rect x="210" y="96" fill="#a19b87"/><rect x="214" y="96" fill="#958977"/><rect x="218" y="96" fill="#a19d8d"/><rect x="222" y="96" fill="#a3a08c"/><rect x="226" y="96" fill="#b0a498"/><rect x="230" y="96" fill="#9e9480"/><rect x="234" y="96" fill="#989585"/><rect x="238" y="96" fill="#a7a48a"/><rect x="242" y="96" fill="#97917f"/><rect x="246" y="96" fill="#6e7550"/><rect x="78" y="100" fill="#999483"/><rect x="82" y="100" fill="#89887b"/><rect x="86" y="100" fill="#a29989"/><rect x="90" y="100" fill="#a09486"/><rect x="94" y="100" fill="#968a74"/><rect x="98" y="100" fill="#998c80"/><rect x="102" y="100" fill="#9d9690"/><rect x="106" y="100" fill="#a2948e"/><rect x="110" y="100" fill="#838275"/><rect x="114" y="100" fill="#8a876f"/><rect x="118" y="100" fill="#495535"/><rect x="122" y="100" fill="#495a3a"/><rect x="126" y="100" fill="#3e4b2d"/><rect x="130" y="100" fill="#404e2a"/><rect x="134" y="100" fill="#506640"/><rect x="138" y="100" fill="#4c613c"/><rect x="142" y="100" fill="#3d4c28"/><rect x="146" y="100" fill="#677145"/><rect x="150" y="100" fill="#54653b"/><rect x="154" y="100" fill="#6f7e4d"/><rect x="158" y="100" fill="#67753c"/><rect x="162" y="100" fill="#6b7641"/><rect x="166" y="100" fill="#5b6837"/><rect x="170" y="100" fill="#565b3a"/><rect x="174" y="100" fill="#5d653b"/><rect x="178" y="100" fill="#5d793f"/><rect x="182" y="100" fill="#4f5e33"/><rect x="186" y="100" fill="#576537"/><rect x="190" y="100" fill="#34441b"/><rect x="194" y="100" fill="#44552d"/><rect x="198" y="100" fill="#4e673a"/><rect x="202" y="100" fill="#4c5430"/><rect x="206" y="100" fill="#475227"/><rect x="210" y="100" fill="#606e47"/><rect x="214" y="100" fill="#516136"/><rect x="218" y="100" fill="#5a6d36"/><rect x="222" y="100" fill="#678350"/><rect x="226" y="100" fill="#5c693a"/><rect x="230" y="100" fill="#5c6a38"/><rect x="234" y="100" fill="#535f3f"/><rect x="238" y="100" fill="#636f41"/><rect x="242" y="100" fill="#6c744f"/><rect x="246" y="100" fill="#525a30"/><rect x="74" y="104" fill="#627340"/><rect x="78" y="104" fill="#aa9d8c"/><rect x="82" y="104" fill="#8d8174"/><rect x="86" y="104" fill="#9d9381"/><rect x="90" y="104" fill="#918979"/><rect x="94" y="104" fill="#86776b"/><rect x="98" y="104" fill="#94967f"/><rect x="102" y="104" fill="#a99d90"/><rect x="106" y="104" fill="#a19c8a"/><rect x="110" y="104" fill="#415232"/><rect x="114" y="104" fill="#4e5e3d"/><rect x="118" y="104" fill="#3b5327"/><rect x="122" y="104" fill="#466132"/><rect x="126" y="104" fill="#4f553b"/><rect x="130" y="104" fill="#344d29"/><rect x="134" y="104" fill="#36502b"/><rect x="138" y="104" fill="#91857a"/><rect x="142" y="104" fill="#747b4e"/><rect x="146" y="104" fill="#64703d"/><rect x="150" y="104" fill="#5e7144"/><rect x="154" y="104" fill="#666e49"/><rect x="158" y="104" fill="#596935"/><rect x="162" y="104" fill="#4d6336"/><rect x="166" y="104" fill="#5a5e3a"/><rect x="170" y="104" fill="#495f3b"/><rect x="174" y="104" fill="#425530"/><rect x="178" y="104" fill="#4c6535"/><rect x="182" y="104" fill="#536544"/><rect x="186" y="104" fill="#465b34"/><rect x="190" y="104" fill="#3e4c29"/><rect x="194" y="104" fill="#576841"/><rect x="198" y="104" fill="#304118"/><rect x="202" y="104" fill="#435734"/><rect x="206" y="104" fill="#4e5131"/><rect x="210" y="104" fill="#5e663e"/><rect x="214" y="104" fill="#647346"/><rect x="218" y="104" fill="#586630"/><rect x="222" y="104" fill="#697753"/><rect x="226" y="104" fill="#aa6464"/><rect x="230" y="104" fill="#a66361"/><rect x="234" y="104" fill="#b0595d"/><rect x="238" y="104" fill="#b36669"/><rect x="242" y="104" fill="#727c55"/><rect x="246" y="104" fill="#526236"/><rect x="74" y="108" fill="#968c78"/><rect x="78" y="108" fill="#9d9b81"/><rect x="82" y="108" fill="#9c897b"/><rect x="86" y="108" fill="#907c74"/><rect x="90" y="108" fill="#a29b84"/><rect x="94" y="108" fill="#969182"/><rect x="98" y="108" fill="#918b7f"/><rect x="102" y="108" fill="#2e421d"/><rect x="106" y="108" fill="#354e2a"/><rect x="110" y="108" fill="#415736"/><rect x="114" y="108" fill="#4a5a2e"/><rect x="118" y="108" fill="#465439"/><rect x="122" y="108" fill="#394a25"/><rect x="126" y="108" fill="#4c6038"/><rect x="130" y="108" fill="#596035"/><rect x="134" y="108" fill="#5a6c39"/><rect x="138" y="108" fill="#5f683d"/><rect x="142" y="108" fill="#5b683d"/><rect x="146" y="108" fill="#5a6c3a"/><rect x="150" y="108" fill="#3b4925"/><rect x="154" y="108" fill="#405429"/><rect x="158" y="108" fill="#3f582c"/><rect x="162" y="108" fill="#425c38"/><rect x="166" y="108" fill="#31441c"/><rect x="170" y="108" fill="#3c4e21"/><rect x="174" y="108" fill="#506339"/><rect x="178" y="108" fill="#4f653b"/><rect x="182" y="108" fill="#43592c"/><rect x="186" y="108" fill="#4f5f2e"/><rect x="190" y="108" fill="#4c5d32"/><rect x="194" y="108" fill="#55653c"/><rect x="198" y="108" fill="#495b3f"/><rect x="202" y="108" fill="#5a6d42"/><rect x="206" y="108" fill="#3e5025"/><rect x="210" y="108" fill="#4b5a27"/><rect x="214" y="108" fill="#606b43"/><rect x="218" y="108" fill="#5f6b39"/><rect x="222" y="108" fill="#5d6038"/><rect x="226" y="108" fill="#bf726e"/><rect x="230" y="108" fill="#a8676b"/><rect x="234" y="108" fill="#9f5a5c"/><rect x="238" y="108" fill="#a6595c"/><rect x="242" y="108" fill="#696b49"/><rect x="246" y="108" fill="#5e7738"/><rect x="74" y="112" fill="#969786"/><rect x="78" y="112" fill="#aca797"/><rect x="82" y="112" fill="#9c927f"/><rect x="86" y="112" fill="#918067"/><rect x="90" y="112" fill="#989185"/><rect x="94" y="112" fill="#938c7e"/><rect x="98" y="112" fill="#3e5a2b"/><rect x="102" y="112" fill="#424d29"/><rect x="106" y="112" fill="#4b5a39"/><rect x="110" y="112" fill="#505836"/><rect x="114" y="112" fill="#3f4e25"/><rect x="118" y="112" fill="#515b2e"/><rect x="122" y="112" fill="#818f52"/><rect x="126" y="112" fill="#8b965f"/><rect x="130" y="112" fill="#7f8c4b"/><rect x="134" y="112" fill="#73803c"/><rect x="138" y="112" fill="#85975e"/><rect x="142" y="112" fill="#70773f"/><rect x="146" y="112" fill="#586538"/><rect x="150" y="112" fill="#324a27"/><rect x="154" y="112" fill="#465730"/><rect x="158" y="112" fill="#4d663c"/><rect x="162" y="112" fill="#43552c"/><rect x="166" y="112" fill="#495729"/><rect x="170" y="112" fill="#4d5834"/><rect x="174" y="112" fill="#505d31"/><rect x="178" y="112" fill="#435430"/><rect x="182" y="112" fill="#42542c"/><rect x="186" y="112" fill="#515d3f"/><rect x="190" y="112" fill="#3b4723"/><rect x="194" y="112" fill="#4d6132"/><rect x="198" y="112" fill="#3d5125"/><rect x="202" y="112" fill="#595f3e"/><rect x="206" y="112" fill="#4c663d"/><rect x="210" y="112" fill="#414e24"/><rect x="214" y="112" fill="#637145"/><rect x="218" y="112" fill="#5b6c42"/><rect x="222" y="112" fill="#a2504e"/><rect x="226" y="112" fill="#a25957"/><rect x="230" y="112" fill="#a96164"/><rect x="234" y="112" fill="#ad6263"/><rect x="238" y="112" fill="#b86d6c"/><rect x="242" y="112" fill="#57663e"/><rect x="246" y="112" fill="#5c673a"/><rect x="70" y="116" fill="#636e3c"/><rect x="74" y="116" fill="#94887b"/><rect x="78" y="116" fill="#90877d"/><rect x="82" y="116" fill="#968d82"/><rect x="86" y="116" fill="#9a9a80"/><rect x="90" y="116" fill="#8f8477"/><rect x="94" y="116" fill="#3e4d2d"/><rect x="98" y="116" fill="#4a633b"/><rect x="102" y="116" fill="#394a20"/><rect x="106" y="116" fill="#303b1d"/><rect x="110" y="116" fill="#303e17"/><rect x="114" y="116" fill="#7e8b4b"/><rect x="118" y="116" fill="#7b9355"/><rect x="122" y="116" fill="#92a061"/><rect x="126" y="116" fill="#7b9554"/><rect x="130" y="116" fill="#799351"/><rect x="134" y="116" fill="#788d47"/><rect x="138" y="116" fill="#819159"/><rect x="142" y="116" fill="#9baa70"/><rect x="146" y="116" fill="#5b6936"/><rect x="150" y="116" fill="#3f542a"/><rect x="154" y="116" fill="#50693d"/><rect x="158" y="116" fill="#4c5934"/><rect x="162" y="116" fill="#3f4d26"/><rect x="166" y="116" fill="#496233"/><rect x="170" y="116" fill="#53603b"/><rect x="174" y="116" fill="#405232"/><rect x="178" y="116" fill="#4c592a"/><rect x="182" y="116" fill="#363d20"/><rect x="186" y="116" fill="#55653c"/><rect x="190" y="116" fill="#4b5c35"/><rect x="194" y="116" fill="#52683a"/><rect x="198" y="116" fill="#3d542f"/><rect x="202" y="116" fill="#4b6135"/><rect x="206" y="116" fill="#4e612e"/><rect x="210" y="116" fill="#404e30"/><rect x="214" y="116" fill="#576d3d"/><rect x="218" y="116" fill="#727d55"/><rect x="222" y="116" fill="#a85f61"/><rect x="226" y="116" fill="#b46f6c"/><rect x="230" y="116" fill="#ac6e6f"/><rect x="234" y="116" fill="#ab6064"/><rect x="238" y="116" fill="#b96e6b"/><rect x="242" y="116" fill="#576839"/><rect x="246" y="116" fill="#768f5c"/><rect x="70" y="120" fill="#978d78"/><rect x="74" y="120" fill="#998a80"/><rect x="78" y="120" fill="#888572"/><rect x="82" y="120" fill="#9b8c76"/><rect x="86" y="120" fill="#978778"/><rect x="90" y="120" fill="#3d4520"/><rect x="94" y="120" fill="#404d2f"/><rect x="98" y="120" fill="#4f5836"/><rect x="102" y="120" fill="#3d4727"/><rect x="106" y="120" fill="#374e26"/><rect x="110" y="120" fill="#8d9e60"/><rect x="114" y="120" fill="#7d894a"/><rect x="118" y="120" fill="#929663"/><rect x="122" y="120" fill="#83985a"/><rect x="126" y="120" fill="#818e55"/><rect x="130" y="120" fill="#8a9a5d"/><rect x="134" y="120" fill="#77884d"/><rect x="138" y="120" fill="#83915b"/><rect x="142" y="120" fill="#6c863f"/><rect x="146" y="120" fill="#495127"/><rect x="150" y="120" fill="#646e42"/><rect x="154" y="120" fill="#54623d"/><rect x="158" y="120" fill="#4c5c35"/><rect x="162" y="120" fill="#374d24"/><rect x="166" y="120" fill="#4f5d34"/><rect x="170" y="120" fill="#3a5225"/><rect x="174" y="120" fill="#496037"/><rect x="178" y="120" fill="#52643e"/><rect x="182" y="120" fill="#515b32"/><rect x="186" y="120" fill="#485933"/><rect x="190" y="120" fill="#465526"/><rect x="194" y="120" fill="#3e511f"/><rect x="198" y="120" fill="#445d39"/><rect x="202" y="120" fill="#4e6b41"/><rect x="206" y="120" fill="#485e2f"/><rect x="210" y="120" fill="#47602b"/><rect x="214" y="120" fill="#677c46"/><rect x="218" y="120" fill="#a6635a"/><rect x="222" y="120" fill="#b2716b"/><rect x="226" y="120" fill="#b3726a"/><rect x="230" y="120" fill="#b7686a"/><rect x="234" y="120" fill="#ab5962"/><rect x="238" y="120" fill="#a55d67"/><rect x="242" y="120" fill="#5a753f"/><rect x="246" y="120" fill="#596133"/><rect x="70" y="124" fill="#938a6e"/><rect x="74" y="124" fill="#a19b87"/><rect x="78" y="124" fill="#968e7d"/><rect x="82" y="124" fill="#94857e"/><rect x="86" y="124" fill="#3a4f2a"/><rect x="90" y="124" fill="#3a4b24"/><rect x="94" y="124" fill="#506339"/><rect x="98" y="124" fill="#47582f"/><rect x="102" y="124" fill="#4d4e2b"/><rect x="106" y="124" fill="#7a8c48"/><rect x="110" y="124" fill="#859655"/><rect x="114" y="124" fill="#7f945a"/><rect x="118" y="124" fill="#728046"/><rect x="122" y="124" fill="#8c9c57"/><rect x="126" y="124" fill="#77853f"/><rect x="130" y="124" fill="#8d9160"/><rect x="134" y="124" fill="#7b8446"/><rect x="138" y="124" fill="#718642"/><rect x="142" y="124" fill="#788644"/><rect x="146" y="124" fill="#515d3a"/><rect x="150" y="124" fill="#65774a"/><rect x="154" y="124" fill="#49612f"/><rect x="158" y="124" fill="#56633b"/><rect x="162" y="124" fill="#414d24"/><rect x="166" y="124" fill="#475833"/><rect x="170" y="124" fill="#576c3c"/><rect x="174" y="124" fill="#3e471b"/><rect x="178" y="124" fill="#4b542f"/><rect x="182" y="124" fill="#48613a"/><rect x="186" y="124" fill="#4c6035"/><rect x="190" y="124" fill="#495936"/><rect x="194" y="124" fill="#607650"/><rect x="198" y="124" fill="#4f603e"/><rect x="202" y="124" fill="#515e3c"/><rect x="206" y="124" fill="#506644"/><rect x="210" y="124" fill="#3a451c"/><rect x="214" y="124" fill="#5b6736"/><rect x="218" y="124" fill="#a25c59"/><rect x="222" y="124" fill="#ab595b"/><rect x="226" y="124" fill="#a96362"/><rect x="230" y="124" fill="#b06774"/><rect x="234" y="124" fill="#b26b69"/><rect x="238" y="124" fill="#aa626c"/><rect x="242" y="124" fill="#656a3c"/><rect x="66" y="128" fill="#4c5f2e"/><rect x="70" y="128" fill="#a29b8e"/><rect x="74" y="128" fill="#959486"/><rect x="78" y="128" fill="#897d68"/><rect x="82" y="128" fill="#4a5b35"/><rect x="86" y="128" fill="#303d17"/><rect x="90" y="128" fill="#3b472b"/><rect x="94" y="128" fill="#3e5936"/><rect x="98" y="128" fill="#3d5929"/><rect x="102" y="128" fill="#778a4a"/><rect x="106" y="128" fill="#8e9756"/><rect x="110" y="128" fill="#80894c"/><rect x="114" y="128" fill="#818f52"/><rect x="118" y="128" fill="#6b8643"/><rect x="122" y="128" fill="#7d904d"/><rect x="126" y="128" fill="#8c9e61"/><rect x="130" y="128" fill="#8a9258"/><rect x="134" y="128" fill="#92a264"/><rect x="138" y="128" fill="#778750"/><rect x="142" y="128" fill="#8a955c"/><rect x="146" y="128" fill="#7f9a57"/><rect x="150" y="128" fill="#69754b"/><rect x="154" y="128" fill="#3a4d26"/><rect x="158" y="128" fill="#3c4f2e"/><rect x="162" y="128" fill="#5b7145"/><rect x="166" y="128" fill="#4d5d38"/><rect x="170" y="128" fill="#3d4c21"/><rect x="174" y="128" fill="#485532"/><rect x="178" y="128" fill="#555d39"/><rect x="182" y="128" fill="#54623c"/><rect x="186" y="128" fill="#395424"/><rect x="190" y="128" fill="#5c7043"/><rect x="194" y="128" fill="#8c9b68"/><rect x="198" y="128" fill="#7b8860"/><rect x="202" y="128" fill="#919868"/><rect x="206" y="128" fill="#8b8d6d"/><rect x="210" y="128" fill="#849165"/><rect x="214" y="128" fill="#bd6372"/><rect x="218" y="128" fill="#b86c75"/><rect x="222" y="128" fill="#b46668"/><rect x="226" y="128" fill="#b4726a"/><rect x="230" y="128" fill="#a16762"/><rect x="234" y="128" fill="#ab6a60"/><rect x="238" y="128" fill="#b16a6e"/><rect x="242" y="128" fill="#5b6c36"/><rect x="66" y="132" fill="#596a37"/><rect x="70" y="132" fill="#9f907e"/><rect x="74" y="132" fill="#354624"/><rect x="78" y="132" fill="#475d38"/><rect x="82" y="132" fill="#485133"/><rect x="86" y="132" fill="#344725"/><rect x="90" y="132" fill="#404d2e"/><rect x="94" y="132" fill="#354b2d"/><rect x="98" y="132" fill="#536b40"/><rect x="102" y="132" fill="#7c8e5b"/><rect x="106" y="132" fill="#85924b"/><rect x="110" y="132" fill="#718748"/><rect x="114" y="132" fill="#8ea162"/><rect x="118" y="132" fill="#8a9259"/><rect x="122" y="132" fill="#899e5c"/><rect x="126" y="132" fill="#819151"/><rect x="130" y="132" fill="#8ca066"/><rect x="134" y="132" fill="#899b5b"/><rect x="138" y="132" fill="#89a761"/><rect x="142" y="132" fill="#6d7a42"/><rect x="146" y="132" fill="#6e8345"/><rect x="150" y="132" fill="#526035"/><rect x="154" y="132" fill="#495f2d"/><rect x="158" y="132" fill="#45552c"/><rect x="162" y="132" fill="#465c2e"/><rect x="166" y="132" fill="#485829"/><rect x="170" y="132" fill="#4b5c39"/><rect x="174" y="132" fill="#48532d"/><rect x="178" y="132" fill="#495d35"/><rect x="182" y="132" fill="#40522e"/><rect x="186" y="132" fill="#79784b"/><rect x="190" y="132" fill="#7a9059"/><rect x="194" y="132" fill="#828858"/><rect x="198" y="132" fill="#717952"/><rect x="202" y="132" fill="#747a51"/><rect x="206" y="132" fill="#80895c"/><rect x="210" y="132" fill="#94a36e"/><rect x="214" y="132" fill="#b27572"/><rect x="218" y="132" fill="#b46a68"/><rect x="222" y="132" fill="#b7727b"/><rect x="226" y="132" fill="#aa6b65"/><rect x="230" y="132" fill="#c07178"/><rect x="234" y="132" fill="#ad6360"/><rect x="238" y="132" fill="#a3535a"/><rect x="242" y="132" fill="#4c511f"/><rect x="62" y="136" fill="#636e4c"/><rect x="66" y="136" fill="#9e9377"/><rect x="70" y="136" fill="#4a532c"/><rect x="74" y="136" fill="#3a5130"/><rect x="78" y="136" fill="#50603e"/><rect x="82" y="136" fill="#4d5937"/><rect x="86" y="136" fill="#334624"/><rect x="90" y="136" fill="#435131"/><rect x="94" y="136" fill="#687946"/><rect x="98" y="136" fill="#60683c"/><rect x="102" y="136" fill="#808b4a"/><rect x="106" y="136" fill="#7d924f"/><rect x="110" y="136" fill="#344c24"/><rect x="114" y="136" fill="#37512c"/><rect x="118" y="136" fill="#395129"/><rect x="122" y="136" fill="#758849"/><rect x="126" y="136" fill="#839654"/><rect x="130" y="136" fill="#75894c"/><rect x="134" y="136" fill="#92a86b"/><rect x="138" y="136" fill="#7b8b4d"/><rect x="142" y="136" fill="#838d51"/><rect x="146" y="136" fill="#878f55"/><rect x="150" y="136" fill="#596b41"/><rect x="154" y="136" fill="#565f32"/><rect x="158" y="136" fill="#4b5a2f"/><rect x="162" y="136" fill="#4b5a34"/><rect x="166" y="136" fill="#3c4e25"/><rect x="170" y="136" fill="#445632"/><rect x="174" y="136" fill="#4d5b3a"/><rect x="178" y="136" fill="#536a40"/><rect x="182" y="136" fill="#44622c"/><rect x="186" y="136" fill="#869461"/><rect x="190" y="136" fill="#868e5e"/><rect x="194" y="136" fill="#8d9866"/><rect x="198" y="136" fill="#818860"/><rect x="202" y="136" fill="#8e8f66"/><rect x="206" y="136" fill="#91996e"/><rect x="210" y="136" fill="#506637"/><rect x="214" y="136" fill="#aa676c"/><rect x="218" y="136" fill="#a36364"/><rect x="222" y="136" fill="#ba7671"/><rect x="226" y="136" fill="#b26c71"/><rect x="230" y="136" fill="#b16a6b"/><rect x="234" y="136" fill="#ac666a"/><rect x="238" y="136" fill="#9a525b"/><rect x="242" y="136" fill="#77855d"/><rect x="62" y="140" fill="#404223"/><rect x="66" y="140" fill="#3b4e27"/><rect x="70" y="140" fill="#4b5d42"/><rect x="74" y="140" fill="#414a2e"/><rect x="78" y="140" fill="#4b5e3d"/><rect x="82" y="140" fill="#4e5e3e"/><rect x="86" y="140" fill="#495b30"/><rect x="90" y="140" fill="#777f54"/><rect x="94" y="140" fill="#4c5c2e"/><rect x="98" y="140" fill="#5f663c"/><rect x="102" y="140" fill="#747b3b"/><rect x="106" y="140" fill="#39532a"/><rect x="110" y="140" fill="#475b37"/><rect x="114" y="140" fill="#355022"/><rect x="118" y="140" fill="#2d4517"/><rect x="122" y="140" fill="#758c4d"/><rect x="126" y="140" fill="#758c43"/><rect x="130" y="140" fill="#859d5b"/><rect x="134" y="140" fill="#798949"/><rect x="138" y="140" fill="#848a51"/><rect x="142" y="140" fill="#909a5c"/><rect x="146" y="140" fill="#728c4a"/><rect x="150" y="140" fill="#4e6034"/><rect x="154" y="140" fill="#6c7d54"/><rect x="158" y="140" fill="#4f5940"/><rect x="162" y="140" fill="#4e6136"/><rect x="166" y="140" fill="#3b552d"/><rect x="170" y="140" fill="#4e5f36"/><rect x="174" y="140" fill="#43572d"/><rect x="178" y="140" fill="#546445"/><rect x="182" y="140" fill="#566237"/><rect x="186" y="140" fill="#7e8164"/><rect x="190" y="140" fill="#7e8a5d"/><rect x="194" y="140" fill="#71855d"/><rect x="198" y="140" fill="#848b58"/><rect x="202" y="140" fill="#8b986c"/><rect x="206" y="140" fill="#939a6b"/><rect x="210" y="140" fill="#b06b6e"/><rect x="214" y="140" fill="#b56d74"/><rect x="218" y="140" fill="#b1706f"/><rect x="222" y="140" fill="#b46970"/><rect x="226" y="140" fill="#b06164"/><rect x="230" y="140" fill="#b36c6c"/><rect x="234" y="140" fill="#a25e66"/><rect x="238" y="140" fill="#ab6467"/><rect x="242" y="140" fill="#66784b"/><rect x="62" y="144" fill="#3b4e28"/><rect x="66" y="144" fill="#3f5b35"/><rect x="70" y="144" fill="#4c592c"/><rect x="74" y="144" fill="#444f2a"/><rect x="78" y="144" fill="#475430"/><rect x="82" y="144" fill="#54643c"/><rect x="86" y="144" fill="#495f2d"/><rect x="90" y="144" fill="#60673a"/><rect x="94" y="144" fill="#44592f"/><rect x="98" y="144" fill="#54673b"/><rect x="102" y="144" fill="#2e491e"/><rect x="106" y="144" fill="#32492d"/><rect x="110" y="144" fill="#405530"/><rect x="114" y="144" fill="#2f4c1e"/><rect x="118" y="144" fill="#7a8d4f"/><rect x="122" y="144" fill="#778644"/><rect x="126" y="144" fill="#7e9454"/><rect x="130" y="144" fill="#798748"/><rect x="134" y="144" fill="#7f8a47"/><rect x="138" y="144" fill="#7c9147"/><rect x="142" y="144" fill="#7b8750"/><rect x="146" y="144" fill="#809850"/><rect x="150" y="144" fill="#677044"/><rect x="154" y="144" fill="#6f7b4a"/><rect x="158" y="144" fill="#546d42"/><rect x="162" y="144" fill="#526439"/><rect x="166" y="144" fill="#4d613b"/><rect x="170" y="144" fill="#4a623d"/><rect x="174" y="144" fill="#546337"/><rect x="178" y="144" fill="#616f49"/><rect x="182" y="144" fill="#697252"/><rect x="186" y="144" fill="#7a7d59"/><rect x="190" y="144" fill="#818e68"/><rect x="194" y="144" fill="#999b73"/><rect x="198" y="144" fill="#888d5f"/><rect x="202" y="144" fill="#87956c"/><rect x="206" y="144" fill="#81815f"/><rect x="210" y="144" fill="#b2756f"/><rect x="214" y="144" fill="#9d5d59"/><rect x="218" y="144" fill="#b27074"/><rect x="222" y="144" fill="#ad6164"/><rect x="226" y="144" fill="#bb656d"/><rect x="230" y="144" fill="#b5727b"/><rect x="234" y="144" fill="#ac6f69"/><rect x="238" y="144" fill="#af6867"/><rect x="242" y="144" fill="#5d6940"/><rect x="58" y="148" fill="#42592b"/><rect x="62" y="148" fill="#445b2f"/><rect x="66" y="148" fill="#36532a"/><rect x="70" y="148" fill="#37442a"/><rect x="74" y="148" fill="#3d5635"/><rect x="78" y="148" fill="#5d693e"/><rect x="82" y="148" fill="#5b6d40"/><rect x="86" y="148" fill="#58653e"/><rect x="90" y="148" fill="#5b704c"/><rect x="94" y="148" fill="#637943"/><rect x="98" y="148" fill="#35421f"/><rect x="102" y="148" fill="#233818"/><rect x="106" y="148" fill="#293a15"/><rect x="110" y="148" fill="#314b1f"/><rect x="114" y="148" fill="#94a361"/><rect x="118" y="148" fill="#758145"/><rect x="122" y="148" fill="#6e803d"/><rect x="126" y="148" fill="#899351"/><rect x="130" y="148" fill="#8ca168"/><rect x="134" y="148" fill="#718b50"/><rect x="138" y="148" fill="#7e8a4f"/><rect x="142" y="148" fill="#72884c"/><rect x="146" y="148" fill="#8b9c5b"/><rect x="150" y="148" fill="#657641"/><rect x="154" y="148" fill="#525a2e"/><rect x="158" y="148" fill="#344e18"/><rect x="162" y="148" fill="#32421c"/><rect x="166" y="148" fill="#495733"/><rect x="170" y="148" fill="#5e653f"/><rect x="174" y="148" fill="#576839"/><rect x="178" y="148" fill="#51663d"/><rect x="182" y="148" fill="#545c31"/><rect x="186" y="148" fill="#8d8f5e"/><rect x="190" y="148" fill="#798663"/><rect x="194" y="148" fill="#869362"/><rect x="198" y="148" fill="#88915e"/><rect x="202" y="148" fill="#8f8b5d"/><rect x="206" y="148" fill="#7f8158"/><rect x="210" y="148" fill="#b7696a"/><rect x="214" y="148" fill="#b56d6c"/><rect x="218" y="148" fill="#b06668"/><rect x="222" y="148" fill="#9f4a54"/><rect x="226" y="148" fill="#ab6061"/><rect x="230" y="148" fill="#b2665f"/><rect x="234" y="148" fill="#ab5e63"/><rect x="238" y="148" fill="#a9696b"/><rect x="242" y="148" fill="#5a6c37"/><rect x="58" y="152" fill="#3e4d24"/><rect x="62" y="152" fill="#3c4525"/><rect x="66" y="152" fill="#36522e"/><rect x="70" y="152" fill="#455634"/><rect x="74" y="152" fill="#917d6d"/><rect x="78" y="152" fill="#60713b"/><rect x="82" y="152" fill="#666e48"/><rect x="86" y="152" fill="#535732"/><rect x="90" y="152" fill="#67744c"/><rect x="94" y="152" fill="#2f421a"/><rect x="98" y="152" fill="#313e27"/><rect x="102" y="152" fill="#2c4026"/><rect x="106" y="152" fill="#3f532c"/><rect x="110" y="152" fill="#91a063"/><rect x="114" y="152" fill="#879552"/><rect x="118" y="152" fill="#8d9961"/><rect x="122" y="152" fill="#969e64"/><rect x="126" y="152" fill="#778e52"/><rect x="130" y="152" fill="#859156"/><rect x="134" y="152" fill="#839355"/><rect x="138" y="152" fill="#778e50"/><rect x="142" y="152" fill="#8a904d"/><rect x="146" y="152" fill="#787c43"/><rect x="150" y="152" fill="#5e763b"/><rect x="154" y="152" fill="#57693e"/><rect x="158" y="152" fill="#43542a"/><rect x="162" y="152" fill="#455233"/><rect x="166" y="152" fill="#4f632f"/><rect x="170" y="152" fill="#95bdd5"/><rect x="174" y="152" fill="#9bc3e5"/><rect x="178" y="152" fill="#536431"/><rect x="182" y="152" fill="#5a7441"/><rect x="186" y="152" fill="#77764d"/><rect x="190" y="152" fill="#6f7b43"/><rect x="194" y="152" fill="#79815a"/><rect x="198" y="152" fill="#919f6a"/><rect x="202" y="152" fill="#959b78"/><rect x="206" y="152" fill="#b46b6d"/><rect x="210" y="152" fill="#a96360"/><rect x="214" y="152" fill="#b97879"/><rect x="218" y="152" fill="#9c5456"/><rect x="222" y="152" fill="#b26b69"/><rect x="226" y="152" fill="#b16a64"/><rect x="230" y="152" fill="#ac6661"/><rect x="234" y="152" fill="#ba6f6c"/><rect x="238" y="152" fill="#a95e6a"/><rect x="242" y="152" fill="#7b8964"/><rect x="58" y="156" fill="#958c84"/><rect x="62" y="156" fill="#353e1c"/><rect x="66" y="156" fill="#3f512c"/><rect x="70" y="156" fill="#a29a86"/><rect x="74" y="156" fill="#52633e"/><rect x="78" y="156" fill="#697c4e"/><rect x="82" y="156" fill="#5d6741"/><rect x="86" y="156" fill="#2b422b"/><rect x="90" y="156" fill="#374c25"/><rect x="94" y="156" fill="#3c4c2b"/><rect x="98" y="156" fill="#3a522b"/><rect x="102" y="156" fill="#375327"/><rect x="106" y="156" fill="#6d794c"/><rect x="110" y="156" fill="#829d5d"/><rect x="114" y="156" fill="#7e9453"/><rect x="118" y="156" fill="#71883f"/><rect x="122" y="156" fill="#8c9357"/><rect x="126" y="156" fill="#848d55"/><rect x="130" y="156" fill="#82884e"/><rect x="134" y="156" fill="#7a8e4a"/><rect x="138" y="156" fill="#95ac6e"/><rect x="142" y="156" fill="#879559"/><rect x="146" y="156" fill="#86985a"/><rect x="150" y="156" fill="#4e6632"/><rect x="154" y="156" fill="#3f461e"/><rect x="158" y="156" fill="#4d603f"/><rect x="162" y="156" fill="#9ab4e0"/><rect x="166" y="156" fill="#97b8dc"/><rect x="170" y="156" fill="#92b9d3"/><rect x="174" y="156" fill="#87b9d5"/><rect x="178" y="156" fill="#5b6d3f"/><rect x="182" y="156" fill="#647247"/><rect x="186" y="156" fill="#4b4f25"/><rect x="190" y="156" fill="#4d6440"/><rect x="194" y="156" fill="#606d4e"/><rect x="198" y="156" fill="#3b5427"/><rect x="202" y="156" fill="#435e26"/><rect x="206" y="156" fill="#586742"/><rect x="210" y="156" fill="#3f5b23"/><rect x="214" y="156" fill="#55683f"/><rect x="218" y="156" fill="#3e5236"/><rect x="222" y="156" fill="#485b33"/><rect x="226" y="156" fill="#314b25"/><rect x="230" y="156" fill="#374928"/><rect x="234" y="156" fill="#495b37"/><rect x="238" y="156" fill="#435b2f"/><rect x="242" y="156" fill="#68714a"/><rect x="54" y="160" fill="#596738"/><rect x="58" y="160" fill="#8c876e"/><rect x="62" y="160" fill="#98927f"/><rect x="66" y="160" fill="#a59789"/><rect x="70" y="160" fill="#7d7666"/><rect x="74" y="160" fill="#5c6b37"/><rect x="78" y="160" fill="#576538"/><rect x="82" y="160" fill="#355331"/><rect x="86" y="160" fill="#3e5130"/><rect x="90" y="160" fill="#2d4625"/><rect x="94" y="160" fill="#2c4420"/><rect x="98" y="160" fill="#344b2a"/><rect x="102" y="160" fill="#5f6633"/><rect x="106" y="160" fill="#5a6437"/><rect x="110" y="160" fill="#515a31"/><rect x="114" y="160" fill="#8ca35b"/><rect x="118" y="160" fill="#8b955a"/><rect x="122" y="160" fill="#768c49"/><rect x="126" y="160" fill="#8c9c61"/><rect x="130" y="160" fill="#7b8847"/><rect x="134" y="160" fill="#65803e"/><rect x="138" y="160" fill="#7f9054"/><rect x="142" y="160" fill="#707f4a"/><rect x="146" y="160" fill="#7b8453"/><rect x="150" y="160" fill="#5b6e40"/><rect x="154" y="160" fill="#4d6742"/><rect x="158" y="160" fill="#455435"/><rect x="162" y="160" fill="#98b7e4"/><rect x="166" y="160" fill="#9cc6de"/><rect x="170" y="160" fill="#98c5e1"/><rect x="174" y="160" fill="#9cc4e9"/><rect x="178" y="160" fill="#3c4c2b"/><rect x="182" y="160" fill="#3d5230"/><rect x="186" y="160" fill="#3a4d24"/><rect x="190" y="160" fill="#3c5223"/><rect x="194" y="160" fill="#435c3d"/><rect x="198" y="160" fill="#3b4e2b"/><rect x="202" y="160" fill="#394e2d"/><rect x="206" y="160" fill="#4d5a37"/><rect x="210" y="160" fill="#3f4e23"/><rect x="214" y="160" fill="#4e582e"/><rect x="218" y="160" fill="#364e28"/><rect x="222" y="160" fill="#445c2f"/><rect x="226" y="160" fill="#2f4d21"/><rect x="230" y="160" fill="#445928"/><rect x="234" y="160" fill="#3b4e2c"/><rect x="238" y="160" fill="#385925"/><rect x="242" y="160" fill="#525b3d"/><rect x="54" y="164" fill="#606a49"/><rect x="58" y="164" fill="#5f743d"/><rect x="62" y="164" fill="#918872"/><rect x="66" y="164" fill="#ab9a8d"/><rect x="70" y="164" fill="#8d8b76"/><rect x="74" y="164" fill="#5b6441"/><rect x="78" y="164" fill="#33421e"/><rect x="82" y="164" fill="#40532f"/><rect x="86" y="164" fill="#405129"/><rect x="90" y="164" fill="#28401e"/><rect x="94" y="164" fill="#33401d"/><rect x="98" y="164" fill="#636d47"/><rect x="102" y="164" fill="#536336"/><rect x="106" y="164" fill="#656b44"/><rect x="110" y="164" fill="#5a6934"/><rect x="114" y="164" fill="#605c3d"/><rect x="118" y="164" fill="#67744d"/><rect x="122" y="164" fill="#586940"/><rect x="126" y="164" fill="#5b6b46"/><rect x="130" y="164" fill="#404d20"/><rect x="134" y="164" fill="#5c6b3f"/><rect x="138" y="164" fill="#575e35"/><rect x="142" y="164" fill="#536839"/><rect x="146" y="164" fill="#4e5736"/><rect x="150" y="164" fill="#555c39"/><rect x="154" y="164" fill="#3a4f29"/><rect x="158" y="164" fill="#50673f"/><rect x="162" y="164" fill="#8fb0dc"/><rect x="166" y="164" fill="#95b9d7"/><rect x="170" y="164" fill="#93b3d3"/><rect x="174" y="164" fill="#3c502e"/><rect x="178" y="164" fill="#334122"/><rect x="182" y="164" fill="#4e6738"/><rect x="186" y="164" fill="#3c512c"/><rect x="190" y="164" fill="#526036"/><rect x="194" y="164" fill="#40542c"/><rect x="198" y="164" fill="#3c4e27"/><rect x="202" y="164" fill="#374d25"/><rect x="206" y="164" fill="#3b4e27"/><rect x="210" y="164" fill="#3d4b2d"/><rect x="214" y="164" fill="#324624"/><rect x="218" y="164" fill="#586c44"/><rect x="222" y="164" fill="#43612b"/><rect x="226" y="164" fill="#415a2e"/><rect x="230" y="164" fill="#476839"/><rect x="234" y="164" fill="#35441a"/><rect x="238" y="164" fill="#486134"/><rect x="242" y="164" fill="#667548"/><rect x="54" y="168" fill="#56673c"/><rect x="58" y="168" fill="#606c35"/><rect x="62" y="168" fill="#677646"/><rect x="66" y="168" fill="#6a7b4d"/><rect x="70" y="168" fill="#757951"/><rect x="74" y="168" fill="#354b24"/><rect x="78" y="168" fill="#314f31"/><rect x="82" y="168" fill="#374820"/><rect x="86" y="168" fill="#2d4726"/><rect x="90" y="168" fill="#3a4c2d"/><rect x="94" y="168" fill="#6f7b47"/><rect x="98" y="168" fill="#59613e"/><rect x="102" y="168" fill="#526137"/><rect x="106" y="168" fill="#646d48"/><rect x="110" y="168" fill="#676b49"/><rect x="114" y="168" fill="#656e41"/><rect x="118" y="168" fill="#556037"/><rect x="122" y="168" fill="#6f7d59"/><rect x="126" y="168" fill="#4c5a2e"/><rect x="130" y="168" fill="#5a703a"/><rect x="134" y="168" fill="#4c5b37"/><rect x="138" y="168" fill="#627447"/><rect x="142" y="168" fill="#55653f"/><rect x="146" y="168" fill="#455732"/><rect x="150" y="168" fill="#505935"/><rect x="154" y="168" fill="#34501f"/><rect x="158" y="168" fill="#495b2d"/><rect x="162" y="168" fill="#90b5d3"/><rect x="166" y="168" fill="#92b4d8"/><rect x="170" y="168" fill="#93b9d8"/><rect x="174" y="168" fill="#41512d"/><rect x="178" y="168" fill="#5b6b41"/><rect x="182" y="168" fill="#475a33"/><rect x="186" y="168" fill="#3d502d"/><rect x="190" y="168" fill="#3d4c22"/><rect x="194" y="168" fill="#465933"/><rect x="198" y="168" fill="#39562b"/><rect x="202" y="168" fill="#596448"/><rect x="206" y="168" fill="#405b2e"/><rect x="210" y="168" fill="#394728"/><rect x="214" y="168" fill="#48613b"/><rect x="218" y="168" fill="#4c6036"/><rect x="222" y="168" fill="#394c29"/><rect x="226" y="168" fill="#47573b"/><rect x="230" y="168" fill="#47572f"/><rect x="234" y="168" fill="#49633b"/><rect x="238" y="168" fill="#3b5733"/><rect x="242" y="168" fill="#4e6535"/><rect x="50" y="172" fill="#5a6239"/><rect x="54" y="172" fill="#546636"/><rect x="58" y="172" fill="#465b2f"/><rect x="62" y="172" fill="#778756"/><rect x="66" y="172" fill="#59613c"/><rect x="70" y="172" fill="#586138"/><rect x="74" y="172" fill="#3a4f2e"/><rect x="78" y="172" fill="#3a4c26"/><rect x="82" y="172" fill="#2d3f1d"/><rect x="86" y="172" fill="#3d542c"/><rect x="90" y="172" fill="#4d582e"/><rect x="94" y="172" fill="#4f662f"/><rect x="98" y="172" fill="#626a3f"/><rect x="102" y="172" fill="#48512c"/><rect x="106" y="172" fill="#596a3c"/><rect x="110" y="172" fill="#5c6838"/><rect x="114" y="172" fill="#677446"/><rect x="118" y="172" fill="#5e6c40"/><rect x="122" y="172" fill="#556534"/><rect x="126" y="172" fill="#5e6a3c"/><rect x="130" y="172" fill="#596d3c"/><rect x="134" y="172" fill="#45592c"/><rect x="138" y="172" fill="#516435"/><rect x="142" y="172" fill="#545f38"/><rect x="146" y="172" fill="#3f5130"/><rect x="150" y="172" fill="#5b6641"/><rect x="154" y="172" fill="#545c3a"/><rect x="158" y="172" fill="#435528"/><rect x="162" y="172" fill="#a3d2ea"/><rect x="166" y="172" fill="#9cb7d9"/><rect x="170" y="172" fill="#a0c5e1"/><rect x="174" y="172" fill="#5d6e48"/><rect x="178" y="172" fill="#3e4e2e"/><rect x="182" y="172" fill="#566a42"/><rect x="186" y="172" fill="#375228"/><rect x="190" y="172" fill="#4f613e"/><rect x="194" y="172" fill="#395128"/><rect x="198" y="172" fill="#37512f"/><rect x="202" y="172" fill="#577144"/><rect x="206" y="172" fill="#475e30"/><rect x="210" y="172" fill="#566f43"/><rect x="214" y="172" fill="#445b38"/><rect x="218" y="172" fill="#456333"/><rect x="222" y="172" fill="#4b5a33"/><rect x="226" y="172" fill="#445a34"/><rect x="230" y="172" fill="#51593c"/><rect x="234" y="172" fill="#46562f"/><rect x="238" y="172" fill="#3d5828"/><rect x="242" y="172" fill="#5b6c3d"/><rect x="50" y="176" fill="#a09d8b"/><rect x="54" y="176" fill="#958f83"/><rect x="58" y="176" fill="#a6a78f"/><rect x="62" y="176" fill="#b0a993"/><rect x="66" y="176" fill="#5c6941"/><rect x="70" y="176" fill="#677149"/><rect x="74" y="176" fill="#3e4827"/><rect x="78" y="176" fill="#28481b"/><rect x="82" y="176" fill="#516433"/><rect x="86" y="176" fill="#666f3d"/><rect x="90" y="176" fill="#4d6631"/><rect x="94" y="176" fill="#515e2e"/><rect x="98" y="176" fill="#6b7646"/><rect x="102" y="176" fill="#4a6236"/><rect x="106" y="176" fill="#526c2f"/><rect x="110" y="176" fill="#4b5529"/><rect x="114" y="176" fill="#627446"/><rect x="118" y="176" fill="#696e4f"/><rect x="122" y="176" fill="#4d5826"/><rect x="126" y="176" fill="#60663e"/><rect x="130" y="176" fill="#505f3a"/><rect x="134" y="176" fill="#637145"/><rect x="138" y="176" fill="#5f6644"/><rect x="142" y="176" fill="#355425"/><rect x="146" y="176" fill="#465632"/><rect x="150" y="176" fill="#44532e"/><rect x="154" y="176" fill="#3e552b"/><rect x="158" y="176" fill="#476239"/><rect x="162" y="176" fill="#9bc8e8"/><rect x="166" y="176" fill="#99bfec"/><rect x="170" y="176" fill="#95c0e8"/><rect x="174" y="176" fill="#415325"/><rect x="178" y="176" fill="#435728"/><rect x="182" y="176" fill="#4f673e"/><rect x="186" y="176" fill="#394a1a"/><rect x="190" y="176" fill="#394d25"/><rect x="194" y="176" fill="#35562a"/><rect x="198" y="176" fill="#475d33"/><rect x="202" y="176" fill="#344e2a"/><rect x="206" y="176" fill="#4e5733"/><rect x="210" y="176" fill="#445929"/><rect x="214" y="176" fill="#4d5d39"/><rect x="218" y="176" fill="#40512b"/><rect x="222" y="176" fill="#406136"/><rect x="226" y="176" fill="#2c441e"/><rect x="230" y="176" fill="#3d5026"/><rect x="234" y="176" fill="#445931"/><rect x="238" y="176" fill="#3c5a32"/><rect x="242" y="176" fill="#556731"/><rect x="46" y="180" fill="#6a7040"/><rect x="50" y="180" fill="#b0a896"/><rect x="54" y="180" fill="#9a9483"/><rect x="58" y="180" fill="#a6a387"/><rect x="62" y="180" fill="#a0907c"/><rect x="66" y="180" fill="#989287"/><rect x="70" y="180" fill="#b0a490"/><rect x="74" y="180" fill="#969988"/><rect x="78" y="180" fill="#9d9b8a"/><rect x="82" y="180" fill="#596c3d"/><rect x="86" y="180" fill="#667344"/><rect x="90" y="180" fill="#6f7f51"/><rect x="94" y="180" fill="#646c3e"/><rect x="98" y="180" fill="#546334"/><rect x="102" y="180" fill="#646938"/><rect x="106" y="180" fill="#4a5c30"/><rect x="110" y="180" fill="#5c6738"/><rect x="114" y="180" fill="#5a6935"/><rect x="118" y="180" fill="#51672e"/><rect x="122" y="180" fill="#505e2e"/><rect x="126" y="180" fill="#5d623d"/><rect x="130" y="180" fill="#667544"/><rect x="134" y="180" fill="#515d2c"/><rect x="138" y="180" fill="#6b7440"/><rect x="142" y="180" fill="#40522d"/><rect x="146" y="180" fill="#3e5622"/><rect x="150" y="180" fill="#50663b"/><rect x="154" y="180" fill="#51693b"/><rect x="158" y="180" fill="#4a602e"/><rect x="162" y="180" fill="#92b2d9"/><rect x="166" y="180" fill="#8fb5db"/><rect x="170" y="180" fill="#93bcdb"/><rect x="174" y="180" fill="#404a26"/><rect x="178" y="180" fill="#526742"/><rect x="182" y="180" fill="#54623b"/><rect x="186" y="180" fill="#506240"/><rect x="190" y="180" fill="#5a623b"/><rect x="194" y="180" fill="#3f502e"/><rect x="198" y="180" fill="#2c3a14"/><rect x="202" y="180" fill="#4c5c3d"/><rect x="206" y="180" fill="#4a6133"/><rect x="210" y="180" fill="#374e25"/><rect x="214" y="180" fill="#384b2f"/><rect x="218" y="180" fill="#466238"/><rect x="222" y="180" fill="#3f5a2e"/><rect x="226" y="180" fill="#586941"/><rect x="230" y="180" fill="#3f532c"/><rect x="234" y="180" fill="#465e33"/><rect x="238" y="180" fill="#465c33"/><rect x="242" y="180" fill="#546936"/><rect x="46" y="184" fill="#4b5d30"/><rect x="50" y="184" fill="#667040"/><rect x="54" y="184" fill="#637647"/><rect x="58" y="184" fill="#a7978f"/><rect x="62" y="184" fill="#9d897c"/><rect x="66" y="184" fill="#a7a08f"/><rect x="70" y="184" fill="#a09588"/><rect x="74" y="184" fill="#9d9a8f"/><rect x="78" y="184" fill="#918a7b"/><rect x="82" y="184" fill="#9d9888"/><rect x="86" y="184" fill="#a59781"/><rect x="90" y="184" fill="#968a79"/><rect x="94" y="184" fill="#948d7a"/><rect x="98" y="184" fill="#5b693c"/><rect x="102" y="184" fill="#546b41"/><rect x="106" y="184" fill="#6e784d"/><rect x="110" y="184" fill="#606846"/><rect x="114" y="184" fill="#637240"/><rect x="118" y="184" fill="#536b33"/><rect x="122" y="184" fill="#66724a"/><rect x="126" y="184" fill="#4a5c29"/><rect x="130" y="184" fill="#5b6b3b"/><rect x="134" y="184" fill="#5f6940"/><rect x="138" y="184" fill="#62693f"/><rect x="142" y="184" fill="#485627"/><rect x="146" y="184" fill="#434e20"/><rect x="150" y="184" fill="#3f562f"/><rect x="154" y="184" fill="#435d2a"/><rect x="158" y="184" fill="#586946"/><rect x="162" y="184" fill="#495836"/><rect x="166" y="184" fill="#52543c"/><rect x="170" y="184" fill="#687345"/><rect x="174" y="184" fill="#4c5c36"/><rect x="178" y="184" fill="#45552d"/><rect x="182" y="184" fill="#4d5f32"/><rect x="186" y="184" fill="#4d5b41"/><rect x="190" y="184" fill="#3e4c20"/><rect x="194" y="184" fill="#2a461e"/><rect x="198" y="184" fill="#425b33"/><rect x="202" y="184" fill="#4a6030"/><rect x="206" y="184" fill="#444d2e"/><rect x="210" y="184" fill="#616d4f"/><rect x="214" y="184" fill="#334422"/><rect x="218" y="184" fill="#536d42"/><rect x="222" y="184" fill="#3d5e2b"/><rect x="226" y="184" fill="#495c30"/><rect x="230" y="184" fill="#445c2e"/><rect x="234" y="184" fill="#314922"/><rect x="238" y="184" fill="#4c633a"/><rect x="242" y="184" fill="#6d7c52"/><rect x="46" y="188" fill="#657549"/><rect x="50" y="188" fill="#4a5727"/><rect x="54" y="188" fill="#849568"/><rect x="58" y="188" fill="#607949"/><rect x="62" y="188" fill="#4f6035"/><rect x="66" y="188" fill="#5b6e3c"/><rect x="70" y="188" fill="#5e633e"/><rect x="74" y="188" fill="#8d8478"/><rect x="78" y="188" fill="#a5a18d"/><rect x="82" y="188" fill="#a09586"/><rect x="86" y="188" fill="#a5a48b"/><rect x="90" y="188" fill="#97948c"/><rect x="94" y="188" fill="#a79586"/><rect x="98" y="188" fill="#a69e85"/><rect x="102" y="188" fill="#a39c8d"/><rect x="106" y="188" fill="#526235"/><rect x="110" y="188" fill="#4d612d"/><rect x="114" y="188" fill="#4f5b36"/><rect x="118" y="188" fill="#55613a"/><rect x="122" y="188" fill="#515a34"/><rect x="126" y="188" fill="#546234"/><rect x="130" y="188" fill="#6e7852"/><rect x="134" y="188" fill="#516135"/><rect x="138" y="188" fill="#677b54"/><rect x="142" y="188" fill="#475e2b"/><rect x="146" y="188" fill="#4b582b"/><rect x="150" y="188" fill="#3f512f"/><rect x="154" y="188" fill="#4e6a42"/><rect x="158" y="188" fill="#576742"/><rect x="162" y="188" fill="#596f44"/><rect x="166" y="188" fill="#516a31"/><rect x="170" y="188" fill="#41522c"/><rect x="174" y="188" fill="#4f5930"/><rect x="178" y="188" fill="#4a5831"/><rect x="182" y="188" fill="#354925"/><rect x="186" y="188" fill="#415024"/><rect x="190" y="188" fill="#405130"/><rect x="194" y="188" fill="#3c552b"/><rect x="198" y="188" fill="#3e5130"/><rect x="202" y="188" fill="#4d6442"/><rect x="206" y="188" fill="#495831"/><rect x="210" y="188" fill="#33451d"/><rect x="214" y="188" fill="#4d5d3a"/><rect x="218" y="188" fill="#425633"/><rect x="222" y="188" fill="#415539"/><rect x="226" y="188" fill="#505330"/><rect x="230" y="188" fill="#415931"/><rect x="234" y="188" fill="#3f4a28"/><rect x="238" y="188" fill="#4a5839"/><rect x="242" y="188" fill="#5b6839"/><rect x="42" y="192" fill="#657a4d"/><rect x="46" y="192" fill="#506537"/><rect x="50" y="192" fill="#5d6f35"/><rect x="54" y="192" fill="#4c6634"/><rect x="58" y="192" fill="#637649"/><rect x="62" y="192" fill="#5d6d45"/><rect x="66" y="192" fill="#6d7b51"/><rect x="70" y="192" fill="#647344"/><rect x="74" y="192" fill="#536635"/><rect x="78" y="192" fill="#637339"/><rect x="82" y="192" fill="#4c5e36"/><rect x="86" y="192" fill="#7d8a5a"/><rect x="90" y="192" fill="#9f8c88"/><rect x="94" y="192" fill="#a29483"/><rect x="98" y="192" fill="#9a9481"/><rect x="102" y="192" fill="#a5968a"/><rect x="106" y="192" fill="#918f79"/><rect x="110" y="192" fill="#b0aa96"/><rect x="114" y="192" fill="#697345"/><rect x="118" y="192" fill="#5d6336"/><rect x="122" y="192" fill="#4d6037"/><rect x="126" y="192" fill="#53663a"/><rect x="130" y="192" fill="#58613c"/><rect x="134" y="192" fill="#505f31"/><rect x="138" y="192" fill="#57632a"/><rect x="142" y="192" fill="#586c3a"/><rect x="146" y="192" fill="#4f663c"/><rect x="150" y="192" fill="#47532d"/><rect x="154" y="192" fill="#3c5725"/><rect x="158" y="192" fill="#475829"/><rect x="162" y="192" fill="#445731"/><rect x="166" y="192" fill="#4a542d"/><rect x="170" y="192" fill="#334a1d"/><rect x="174" y="192" fill="#3e5a28"/><rect x="178" y="192" fill="#3a4e30"/><rect x="182" y="192" fill="#455f36"/><rect x="186" y="192" fill="#485e30"/><rect x="190" y="192" fill="#374827"/><rect x="194" y="192" fill="#5f7048"/><rect x="198" y="192" fill="#395424"/><rect x="202" y="192" fill="#486035"/><rect x="206" y="192" fill="#445431"/><rect x="210" y="192" fill="#516635"/><rect x="214" y="192" fill="#3e4e31"/><rect x="218" y="192" fill="#435b3b"/><rect x="222" y="192" fill="#324024"/><rect x="226" y="192" fill="#3d4e2a"/><rect x="230" y="192" fill="#284716"/><rect x="234" y="192" fill="#3e582d"/><rect x="238" y="192" fill="#425225"/><rect x="42" y="196" fill="#6b7b4e"/><rect x="46" y="196" fill="#bbafa4"/><rect x="50" y="196" fill="#577135"/><rect x="54" y="196" fill="#4e6136"/><rect x="58" y="196" fill="#526329"/><rect x="62" y="196" fill="#5c7442"/><rect x="66" y="196" fill="#678046"/><rect x="70" y="196" fill="#637847"/><rect x="74" y="196" fill="#5c6c3c"/><rect x="78" y="196" fill="#506634"/><rect x="82" y="196" fill="#546737"/><rect x="86" y="196" fill="#536536"/><rect x="90" y="196" fill="#556932"/><rect x="94" y="196" fill="#62734a"/><rect x="98" y="196" fill="#60693b"/><rect x="102" y="196" fill="#a79c93"/><rect x="106" y="196" fill="#b09f9b"/><rect x="110" y="196" fill="#9f998e"/><rect x="114" y="196" fill="#8f8f7d"/><rect x="118" y="196" fill="#4d6839"/><rect x="122" y="196" fill="#4a441f"/><rect x="126" y="196" fill="#5c6c3c"/><rect x="130" y="196" fill="#50582f"/><rect x="134" y="196" fill="#6e7e5a"/><rect x="138" y="196" fill="#677848"/><rect x="142" y="196" fill="#56603a"/><rect x="146" y="196" fill="#43582e"/><rect x="150" y="196" fill="#415730"/><rect x="154" y="196" fill="#596545"/><rect x="158" y="196" fill="#5c6d47"/><rect x="162" y="196" fill="#3b4a19"/><rect x="166" y="196" fill="#5e6841"/><rect x="170" y="196" fill="#546539"/><rect x="174" y="196" fill="#3f582a"/><rect x="178" y="196" fill="#4e5a34"/><rect x="182" y="196" fill="#4a5e34"/><rect x="186" y="196" fill="#4c5e2b"/><rect x="190" y="196" fill="#465a2d"/><rect x="194" y="196" fill="#455531"/><rect x="198" y="196" fill="#254019"/><rect x="202" y="196" fill="#425834"/><rect x="206" y="196" fill="#4f613f"/><rect x="210" y="196" fill="#4f5e34"/><rect x="214" y="196" fill="#456037"/><rect x="218" y="196" fill="#31471e"/><rect x="222" y="196" fill="#3d5830"/><rect x="226" y="196" fill="#425433"/><rect x="230" y="196" fill="#3a522d"/><rect x="234" y="196" fill="#2d481b"/><rect x="238" y="196" fill="#445129"/><rect x="42" y="200" fill="#b6ac98"/><rect x="46" y="200" fill="#b6ab99"/><rect x="50" y="200" fill="#b5ab99"/><rect x="54" y="200" fill="#5b6b33"/><rect x="58" y="200" fill="#69814e"/><rect x="62" y="200" fill="#3c5830"/><rect x="66" y="200" fill="#2e4b21"/><rect x="70" y="200" fill="#667745"/><rect x="74" y="200" fill="#61713c"/><rect x="78" y="200" fill="#586433"/><rect x="82" y="200" fill="#5c6b37"/><rect x="86" y="200" fill="#5a6e3f"/><rect x="90" y="200" fill="#3e5517"/><rect x="94" y="200" fill="#54693d"/><rect x="98" y="200" fill="#5e6f43"/><rect x="102" y="200" fill="#62663b"/><rect x="106" y="200" fill="#9f9e88"/><rect x="110" y="200" fill="#a7a894"/><rect x="114" y="200" fill="#ada48b"/><rect x="118" y="200" fill="#9f9a89"/><rect x="122" y="200" fill="#a19d8f"/><rect x="126" y="200" fill="#5d6d41"/><rect x="130" y="200" fill="#667642"/><rect x="134" y="200" fill="#394f18"/><rect x="138" y="200" fill="#606e3f"/><rect x="142" y="200" fill="#5a6639"/><rect x="146" y="200" fill="#44592d"/><rect x="150" y="200" fill="#3f562a"/><rect x="154" y="200" fill="#3d491b"/><rect x="158" y="200" fill="#5b6131"/><rect x="162" y="200" fill="#525f32"/><rect x="166" y="200" fill="#5b6d3d"/><rect x="170" y="200" fill="#3e5936"/><rect x="174" y="200" fill="#48613e"/><rect x="178" y="200" fill="#415731"/><rect x="182" y="200" fill="#2d4a23"/><rect x="186" y="200" fill="#425432"/><rect x="190" y="200" fill="#2f3d17"/><rect x="194" y="200" fill="#314921"/><rect x="198" y="200" fill="#586e46"/><rect x="202" y="200" fill="#4e5d35"/><rect x="206" y="200" fill="#445834"/><rect x="210" y="200" fill="#465a35"/><rect x="214" y="200" fill="#818b5a"/><rect x="218" y="200" fill="#93a268"/><rect x="222" y="200" fill="#889c5f"/><rect x="226" y="200" fill="#8d985f"/><rect x="230" y="200" fill="#768952"/><rect x="234" y="200" fill="#74844e"/><rect x="238" y="200" fill="#445e2f"/><rect x="38" y="204" fill="#657f50"/><rect x="42" y="204" fill="#b6ada3"/><rect x="46" y="204" fill="#afa7a4"/><rect x="50" y="204" fill="#b4a594"/><rect x="54" y="204" fill="#aea692"/><rect x="58" y="204" fill="#b6a897"/><rect x="62" y="204" fill="#253e17"/><rect x="66" y="204" fill="#2f4726"/><rect x="70" y="204" fill="#3b5629"/><rect x="74" y="204" fill="#647342"/><rect x="78" y="204" fill="#617041"/><rect x="82" y="204" fill="#718255"/><rect x="86" y="204" fill="#506931"/><rect x="90" y="204" fill="#516926"/><rect x="94" y="204" fill="#58703a"/><rect x="98" y="204" fill="#788f5a"/><rect x="102" y="204" fill="#4f603a"/><rect x="106" y="204" fill="#656841"/><rect x="110" y="204" fill="#517338"/><rect x="114" y="204" fill="#9e9785"/><rect x="118" y="204" fill="#a69f90"/><rect x="122" y="204" fill="#978d80"/><rect x="126" y="204" fill="#9d9788"/><rect x="130" y="204" fill="#9e8e81"/><rect x="134" y="204" fill="#5d613b"/><rect x="138" y="204" fill="#5d6541"/><rect x="142" y="204" fill="#48582a"/><rect x="146" y="204" fill="#626943"/><rect x="150" y="204" fill="#515b37"/><rect x="154" y="204" fill="#4e6231"/><rect x="158" y="204" fill="#797f57"/><rect x="162" y="204" fill="#6f7652"/><rect x="166" y="204" fill="#5f623b"/><rect x="170" y="204" fill="#606f48"/><rect x="174" y="204" fill="#4b613e"/><rect x="178" y="204" fill="#526535"/><rect x="182" y="204" fill="#455e31"/><rect x="186" y="204" fill="#466233"/><rect x="190" y="204" fill="#475831"/><rect x="194" y="204" fill="#585e39"/><rect x="198" y="204" fill="#515f39"/><rect x="202" y="204" fill="#4c572b"/><rect x="206" y="204" fill="#304e1f"/><rect x="210" y="204" fill="#5d7049"/><rect x="214" y="204" fill="#8c9560"/><rect x="218" y="204" fill="#7d8c52"/><rect x="222" y="204" fill="#829452"/><rect x="226" y="204" fill="#859262"/><rect x="230" y="204" fill="#87935a"/><rect x="234" y="204" fill="#6a7d41"/><rect x="238" y="204" fill="#525c3a"/><rect x="38" y="208" fill="#626e41"/><rect x="42" y="208" fill="#aca591"/><rect x="46" y="208" fill="#b3af9b"/><rect x="50" y="208" fill="#b3ae9d"/><rect x="54" y="208" fill="#b6af9e"/><rect x="58" y="208" fill="#a5a291"/><rect x="62" y="208" fill="#aaa48b"/><rect x="66" y="208" fill="#37512b"/><rect x="70" y="208" fill="#20471a"/><rect x="74" y="208" fill="#41552c"/><rect x="78" y="208" fill="#6c8250"/><rect x="82" y="208" fill="#6b7543"/><rect x="86" y="208" fill="#5d743f"/><rect x="90" y="208" fill="#617340"/><rect x="94" y="208" fill="#657b4a"/><rect x="98" y="208" fill="#4b632c"/><rect x="102" y="208" fill="#647543"/><rect x="106" y="208" fill="#657840"/><rect x="110" y="208" fill="#52552a"/><rect x="114" y="208" fill="#45532d"/><rect x="118" y="208" fill="#858171"/><rect x="122" y="208" fill="#988b82"/><rect x="126" y="208" fill="#aa9f96"/><rect x="130" y="208" fill="#9f9989"/><rect x="134" y="208" fill="#a49487"/><rect x="138" y="208" fill="#9c978b"/><rect x="142" y="208" fill="#607949"/><rect x="146" y="208" fill="#6c7f4d"/><rect x="150" y="208" fill="#54603b"/><rect x="154" y="208" fill="#64703d"/><rect x="158" y="208" fill="#56663c"/><rect x="162" y="208" fill="#6c7149"/><rect x="166" y="208" fill="#414e27"/><rect x="170" y="208" fill="#5d6b39"/><rect x="174" y="208" fill="#66764d"/><rect x="178" y="208" fill="#395322"/><rect x="182" y="208" fill="#485a2f"/><rect x="186" y="208" fill="#3a562b"/><rect x="190" y="208" fill="#48633a"/><rect x="194" y="208" fill="#4e6842"/><rect x="198" y="208" fill="#55693f"/><rect x="202" y="208" fill="#526539"/><rect x="206" y="208" fill="#59673f"/><rect x="210" y="208" fill="#546c3d"/><rect x="214" y="208" fill="#485b34"/><rect x="218" y="208" fill="#818e59"/><rect x="222" y="208" fill="#769050"/><rect x="226" y="208" fill="#959969"/><rect x="230" y="208" fill="#7e8d55"/><rect x="234" y="208" fill="#a9a58f"/><rect x="238" y="208" fill="#9f917e"/><rect x="34" y="212" fill="#5e6739"/><rect x="38" y="212" fill="#b8ac9b"/><rect x="42" y="212" fill="#b7a49b"/><rect x="46" y="212" fill="#b09e97"/><rect x="50" y="212" fill="#afa693"/><rect x="54" y="212" fill="#a4998b"/><rect x="58" y="212" fill="#aca39d"/><rect x="62" y="212" fill="#a59e8a"/><rect x="66" y="212" fill="#aba490"/><rect x="70" y="212" fill="#4d673b"/><rect x="74" y="212" fill="#425236"/><rect x="78" y="212" fill="#2a461f"/><rect x="82" y="212" fill="#345024"/><rect x="86" y="212" fill="#5f6e3e"/><rect x="90" y="212" fill="#64774b"/><rect x="94" y="212" fill="#5e6f46"/><rect x="98" y="212" fill="#4d6233"/><rect x="102" y="212" fill="#537235"/><rect x="106" y="212" fill="#647747"/><rect x="110" y="212" fill="#5a623a"/><rect x="114" y="212" fill="#596f48"/><rect x="118" y="212" fill="#727f50"/><rect x="122" y="212" fill="#69754f"/><rect x="126" y="212" fill="#95967a"/><rect x="130" y="212" fill="#9f9881"/><rect x="134" y="212" fill="#9c9d8a"/><rect x="138" y="212" fill="#9d9481"/><rect x="142" y="212" fill="#9d9083"/><rect x="146" y="212" fill="#ada68d"/><rect x="150" y="212" fill="#596f3f"/><rect x="154" y="212" fill="#5e6e42"/><rect x="158" y="212" fill="#636a49"/><rect x="162" y="212" fill="#5a6d3f"/><rect x="166" y="212" fill="#667b4b"/><rect x="170" y="212" fill="#586633"/><rect x="174" y="212" fill="#505838"/><rect x="178" y="212" fill="#485530"/><rect x="182" y="212" fill="#516335"/><rect x="186" y="212" fill="#617750"/><rect x="190" y="212" fill="#566b43"/><rect x="194" y="212" fill="#384523"/><rect x="198" y="212" fill="#3d4d30"/><rect x="202" y="212" fill="#4a5833"/><rect x="206" y="212" fill="#44572e"/><rect x="210" y="212" fill="#4c5f3b"/><rect x="214" y="212" fill="#3c4f25"/><rect x="218" y="212" fill="#7c8b5b"/><rect x="222" y="212" fill="#989486"/><rect x="226" y="212" fill="#a49c8d"/><rect x="230" y="212" fill="#999682"/><rect x="234" y="212" fill="#a29b8c"/><rect x="238" y="212" fill="#99947d"/><rect x="34" y="216" fill="#505a2c"/><rect x="38" y="216" fill="#b8b29d"/><rect x="42" y="216" fill="#aca68d"/><rect x="46" y="216" fill="#ad9f92"/><rect x="50" y="216" fill="#b3a794"/><rect x="54" y="216" fill="#c0c2a4"/><rect x="58" y="216" fill="#b0b0a0"/><rect x="62" y="216" fill="#b3ac9c"/><rect x="66" y="216" fill="#ada093"/><rect x="70" y="216" fill="#c1ac9f"/><rect x="74" y="216" fill="#b2a39c"/><rect x="78" y="216" fill="#3c4b29"/><rect x="82" y="216" fill="#3d4b2e"/><rect x="86" y="216" fill="#374a30"/><rect x="90" y="216" fill="#637340"/><rect x="94" y="216" fill="#536f3d"/><rect x="98" y="216" fill="#657747"/><rect x="102" y="216" fill="#587036"/><rect x="106" y="216" fill="#596d40"/><rect x="110" y="216" fill="#5f7241"/><rect x="114" y="216" fill="#5d703c"/><rect x="118" y="216" fill="#59703c"/><rect x="122" y="216" fill="#4e6c34"/><rect x="126" y="216" fill="#5a6c3b"/><rect x="130" y="216" fill="#5d6e3c"/><rect x="134" y="216" fill="#a59e8c"/><rect x="138" y="216" fill="#a89d8f"/><rect x="142" y="216" fill="#92917d"/><rect x="146" y="216" fill="#999a80"/><rect x="150" y="216" fill="#9b9891"/><rect x="154" y="216" fill="#b1a7a1"/><rect x="158" y="216" fill="#92927d"/><rect x="162" y="216" fill="#998978"/><rect x="166" y="216" fill="#5d7040"/><rect x="170" y="216" fill="#718253"/><rect x="174" y="216" fill="#5f6b38"/><rect x="178" y="216" fill="#52542e"/><rect x="182" y="216" fill="#384825"/><rect x="186" y="216" fill="#425427"/><rect x="190" y="216" fill="#415934"/><rect x="194" y="216" fill="#546b37"/><rect x="198" y="216" fill="#536335"/><rect x="202" y="216" fill="#485b3a"/><rect x="206" y="216" fill="#3f5537"/><rect x="210" y="216" fill="#9c9286"/><rect x="214" y="216" fill="#9a9381"/><rect x="218" y="216" fill="#b5aba1"/><rect x="222" y="216" fill="#a49f8e"/><rect x="226" y="216" fill="#af9f90"/><rect x="230" y="216" fill="#a39889"/><rect x="234" y="216" fill="#a49f94"/><rect x="238" y="216" fill="#aa9e8d"/><rect x="34" y="220" fill="#51602f"/><rect x="38" y="220" fill="#b6b2a3"/><rect x="42" y="220" fill="#a4a795"/><rect x="46" y="220" fill="#b2a992"/><rect x="50" y="220" fill="#a8a69c"/><rect x="54" y="220" fill="#ac9b90"/><rect x="58" y="220" fill="#beb1a2"/><rect x="62" y="220" fill="#b4aeac"/><rect x="66" y="220" fill="#c5bbac"/><rect x="70" y="220" fill="#ada897"/><rect x="74" y="220" fill="#b7b19f"/><rect x="78" y="220" fill="#ad9691"/><rect x="82" y="220" fill="#345526"/><rect x="86" y="220" fill="#2a4523"/><rect x="90" y="220" fill="#374a26"/><rect x="94" y="220" fill="#58723e"/><rect x="98" y="220" fill="#607644"/><rect x="102" y="220" fill="#546a34"/><rect x="106" y="220" fill="#657643"/><rect x="110" y="220" fill="#4e6530"/><rect x="114" y="220" fill="#4f622e"/><rect x="118" y="220" fill="#526433"/><rect x="122" y="220" fill="#61753e"/><rect x="126" y="220" fill="#657d51"/><rect x="130" y="220" fill="#788a58"/><rect x="134" y="220" fill="#4e5b2e"/><rect x="138" y="220" fill="#657d4e"/><rect x="142" y="220" fill="#606f3d"/><rect x="146" y="220" fill="#a19b87"/><rect x="150" y="220" fill="#9e938d"/><rect x="154" y="220" fill="#9ca58f"/><rect x="158" y="220" fill="#989389"/><rect x="162" y="220" fill="#9a918a"/><rect x="166" y="220" fill="#a19d8a"/><rect x="170" y="220" fill="#92917d"/><rect x="174" y="220" fill="#a49b8d"/><rect x="178" y="220" fill="#a69e88"/><rect x="182" y="220" fill="#5a704d"/><rect x="186" y="220" fill="#405628"/><rect x="190" y="220" fill="#425a2f"/><rect x="194" y="220" fill="#5a6a4c"/><rect x="198" y="220" fill="#40562b"/><rect x="202" y="220" fill="#9c987e"/><rect x="206" y="220" fill="#928c7f"/><rect x="210" y="220" fill="#9f9081"/><rect x="214" y="220" fill="#a59988"/><rect x="218" y="220" fill="#9c9582"/><rect x="222" y="220" fill="#98958c"/><rect x="226" y="220" fill="#aa9a9a"/><rect x="230" y="220" fill="#8a8f5e"/><rect x="234" y="220" fill="#5a6833"/><rect x="238" y="220" fill="#747747"/><rect x="30" y="224" fill="#5d673d"/><rect x="34" y="224" fill="#acae9b"/><rect x="38" y="224" fill="#b4a399"/><rect x="42" y="224" fill="#a4a08b"/><rect x="46" y="224" fill="#b1ad9c"/><rect x="50" y="224" fill="#b2a6a2"/><rect x="54" y="224" fill="#b6b9a6"/><rect x="58" y="224" fill="#b6ac9d"/><rect x="62" y="224" fill="#b4a695"/><rect x="66" y="224" fill="#b7ae9e"/><rect x="70" y="224" fill="#bfb4a2"/><rect x="74" y="224" fill="#adab9a"/><rect x="78" y="224" fill="#afb29c"/><rect x="82" y="224" fill="#bbab99"/><rect x="86" y="224" fill="#bcb5a6"/><rect x="90" y="224" fill="#2f4626"/><rect x="94" y="224" fill="#365029"/><rect x="98" y="224" fill="#445a30"/><rect x="102" y="224" fill="#4d642d"/><rect x="106" y="224" fill="#5e6d3b"/><rect x="110" y="224" fill="#425723"/><rect x="114" y="224" fill="#4b5c2c"/><rect x="118" y="224" fill="#496128"/><rect x="122" y="224" fill="#597643"/><rect x="126" y="224" fill="#5b6839"/><rect x="130" y="224" fill="#6f7f56"/><rect x="134" y="224" fill="#616f3c"/><rect x="138" y="224" fill="#505f29"/><rect x="142" y="224" fill="#6f7a4d"/><rect x="146" y="224" fill="#4c5f27"/><rect x="150" y="224" fill="#5a6a3f"/><rect x="154" y="224" fill="#a59c8e"/><rect x="158" y="224" fill="#ac9d91"/><rect x="162" y="224" fill="#999c86"/><rect x="166" y="224" fill="#98978b"/><rect x="170" y="224" fill="#9c9c85"/><rect x="174" y="224" fill="#9d9489"/><rect x="178" y="224" fill="#a49b8b"/><rect x="182" y="224" fill="#aba78e"/><rect x="186" y="224" fill="#a59f8b"/><rect x="190" y="224" fill="#a5a094"/><rect x="194" y="224" fill="#9e9b89"/><rect x="198" y="224" fill="#a89d8b"/><rect x="202" y="224" fill="#9d9b86"/><rect x="206" y="224" fill="#a49a86"/><rect x="210" y="224" fill="#9d978b"/><rect x="214" y="224" fill="#a2a294"/><rect x="218" y="224" fill="#697550"/><rect x="222" y="224" fill="#52673b"/><rect x="226" y="224" fill="#4c6633"/><rect x="230" y="224" fill="#626c45"/><rect x="234" y="224" fill="#67714b"/><rect x="30" y="228" fill="#596339"/><rect x="34" y="228" fill="#afa497"/><rect x="38" y="228" fill="#a7a099"/><rect x="42" y="228" fill="#baae97"/><rect x="46" y="228" fill="#ada992"/><rect x="50" y="228" fill="#a8a797"/><rect x="54" y="228" fill="#a69684"/><rect x="58" y="228" fill="#a1a495"/><rect x="62" y="228" fill="#a39f90"/><rect x="66" y="228" fill="#a6a291"/><rect x="70" y="228" fill="#a29483"/><rect x="74" y="228" fill="#bfb9a4"/><rect x="78" y="228" fill="#ac9f97"/><rect x="82" y="228" fill="#b0a399"/><rect x="86" y="228" fill="#c2b7a3"/><rect x="90" y="228" fill="#b3a99d"/><rect x="94" y="228" fill="#263e20"/><rect x="98" y="228" fill="#2d461e"/><rect x="102" y="228" fill="#375029"/><rect x="106" y="228" fill="#5c6a39"/><rect x="110" y="228" fill="#6d7c4c"/><rect x="114" y="228" fill="#516532"/><rect x="118" y="228" fill="#5f683c"/><rect x="122" y="228" fill="#5b6d3e"/><rect x="126" y="228" fill="#6d804e"/><rect x="130" y="228" fill="#505e34"/><rect x="134" y="228" fill="#687e48"/><rect x="138" y="228" fill="#475e23"/><rect x="142" y="228" fill="#526335"/><rect x="146" y="228" fill="#647949"/><rect x="150" y="228" fill="#5a713c"/><rect x="154" y="228" fill="#748654"/><rect x="158" y="228" fill="#667c49"/><rect x="162" y="228" fill="#596d3e"/><rect x="166" y="228" fill="#6a7045"/><rect x="170" y="228" fill="#a99f8b"/><rect x="174" y="228" fill="#9f9e8c"/><rect x="178" y="228" fill="#9a9181"/><rect x="182" y="228" fill="#a19a84"/><rect x="186" y="228" fill="#a3a68a"/><rect x="190" y="228" fill="#99968b"/><rect x="194" y="228" fill="#a19783"/><rect x="198" y="228" fill="#9f8880"/><rect x="202" y="228" fill="#a7a98c"/><rect x="206" y="228" fill="#4d5e36"/><rect x="210" y="228" fill="#4a5c28"/><rect x="214" y="228" fill="#52683c"/><rect x="218" y="228" fill="#637443"/><rect x="222" y="228" fill="#667647"/><rect x="30" y="232" fill="#5f6538"/><rect x="34" y="232" fill="#bdb0a2"/><rect x="38" y="232" fill="#afa49a"/><rect x="42" y="232" fill="#ad9691"/><rect x="46" y="232" fill="#aea89d"/><rect x="50" y="232" fill="#b0aa9a"/><rect x="54" y="232" fill="#a7a88c"/><rect x="58" y="232" fill="#aaa594"/><rect x="62" y="232" fill="#aaa492"/><rect x="66" y="232" fill="#b7ad9b"/><rect x="70" y="232" fill="#b5a19e"/><rect x="74" y="232" fill="#b6aba5"/><rect x="78" y="232" fill="#bdb99a"/><rect x="82" y="232" fill="#afa699"/><rect x="86" y="232" fill="#b6ab97"/><rect x="90" y="232" fill="#b6b4a0"/><rect x="94" y="232" fill="#abb295"/><rect x="98" y="232" fill="#384f2e"/><rect x="102" y="232" fill="#2a451c"/><rect x="106" y="232" fill="#354923"/><rect x="110" y="232" fill="#556933"/><rect x="114" y="232" fill="#607e46"/><rect x="118" y="232" fill="#3b561f"/><rect x="122" y="232" fill="#778d57"/><rect x="126" y="232" fill="#69854c"/><rect x="130" y="232" fill="#566f3f"/><rect x="134" y="232" fill="#577341"/><rect x="138" y="232" fill="#5e7339"/><rect x="142" y="232" fill="#546b3f"/><rect x="146" y="232" fill="#53672b"/><rect x="150" y="232" fill="#5c6a38"/><rect x="154" y="232" fill="#4d6141"/><rect x="158" y="232" fill="#566e34"/><rect x="162" y="232" fill="#737d50"/><rect x="166" y="232" fill="#546232"/><rect x="170" y="232" fill="#6c7746"/><rect x="174" y="232" fill="#4f5a2c"/><rect x="178" y="232" fill="#6a754b"/><rect x="182" y="232" fill="#5b733f"/><rect x="186" y="232" fill="#a19786"/><rect x="190" y="232" fill="#8f8371"/><rect x="194" y="232" fill="#496538"/><rect x="198" y="232" fill="#596229"/><rect x="202" y="232" fill="#58633d"/><rect x="206" y="232" fill="#6a7148"/><rect x="210" y="232" fill="#586131"/><rect x="26" y="236" fill="#4a5c37"/><rect x="30" y="236" fill="#9c684e"/><rect x="34" y="236" fill="#aaa598"/><rect x="38" y="236" fill="#a29a8b"/><rect x="42" y="236" fill="#aba996"/><rect x="46" y="236" fill="#a6a390"/><rect x="50" y="236" fill="#aea496"/><rect x="54" y="236" fill="#b3a492"/><rect x="58" y="236" fill="#aaad9a"/><rect x="62" y="236" fill="#a39e89"/><rect x="66" y="236" fill="#b1ab9b"/><rect x="70" y="236" fill="#b0a79d"/><rect x="74" y="236" fill="#aea18e"/><rect x="78" y="236" fill="#b7b09c"/><rect x="82" y="236" fill="#b29e9c"/><rect x="86" y="236" fill="#b3ac9e"/><rect x="90" y="236" fill="#aa9e8a"/><rect x="94" y="236" fill="#b2ac9b"/><rect x="98" y="236" fill="#b8a9a2"/><rect x="102" y="236" fill="#c3b8b0"/><rect x="106" y="236" fill="#3e5828"/><rect x="110" y="236" fill="#385327"/><rect x="114" y="236" fill="#5a6f3d"/><rect x="118" y="236" fill="#536e3c"/><rect x="122" y="236" fill="#496836"/><rect x="126" y="236" fill="#576932"/><rect x="130" y="236" fill="#707347"/><rect x="134" y="236" fill="#5a6d36"/><rect x="138" y="236" fill="#607148"/><rect x="142" y="236" fill="#6e814a"/><rect x="146" y="236" fill="#718657"/><rect x="150" y="236" fill="#6a7e4c"/><rect x="154" y="236" fill="#667a47"/><rect x="158" y="236" fill="#545f2b"/><rect x="162" y="236" fill="#566e32"/><rect x="166" y="236" fill="#4e5d2b"/><rect x="170" y="236" fill="#505c2a"/><rect x="174" y="236" fill="#585c38"/><rect x="178" y="236" fill="#515f2a"/><rect x="182" y="236" fill="#575d38"/><rect x="186" y="236" fill="#6a784a"/><rect x="190" y="236" fill="#637b49"/><rect x="194" y="236" fill="#51643b"/><rect x="198" y="236" fill="#637749"/><rect x="26" y="240" fill="#a46f57"/><rect x="30" y="240" fill="#935738"/><rect x="34" y="240" fill="#b98966"/><rect x="38" y="240" fill="#a37452"/><rect x="42" y="240" fill="#a9a590"/><rect x="46" y="240" fill="#949787"/><rect x="50" y="240" fill="#b4ab99"/><rect x="54" y="240" fill="#b3b29d"/><rect x="58" y="240" fill="#a6a398"/><rect x="62" y="240" fill="#ad9c97"/><rect x="66" y="240" fill="#cabfa9"/><rect x="70" y="240" fill="#a9a48b"/><rect x="74" y="240" fill="#aca194"/><rect x="78" y="240" fill="#b2a9a0"/><rect x="82" y="240" fill="#b0a59c"/><rect x="86" y="240" fill="#b8aa9e"/><rect x="90" y="240" fill="#aba790"/><rect x="94" y="240" fill="#afa992"/><rect x="98" y="240" fill="#a2958a"/><rect x="102" y="240" fill="#c5b9aa"/><rect x="106" y="240" fill="#b9b5a5"/><rect x="110" y="240" fill="#2b401f"/><rect x="114" y="240" fill="#717e50"/><rect x="118" y="240" fill="#617448"/><rect x="122" y="240" fill="#617548"/><rect x="126" y="240" fill="#516734"/><rect x="130" y="240" fill="#6c7e4b"/><rect x="134" y="240" fill="#6e8952"/><rect x="138" y="240" fill="#576c3c"/><rect x="142" y="240" fill="#677f41"/><rect x="146" y="240" fill="#566c3b"/><rect x="150" y="240" fill="#50623a"/><rect x="154" y="240" fill="#5c6730"/><rect x="158" y="240" fill="#586638"/><rect x="162" y="240" fill="#546435"/><rect x="166" y="240" fill="#5e6738"/><rect x="170" y="240" fill="#555f32"/><rect x="174" y="240" fill="#606a42"/><rect x="178" y="240" fill="#687c4b"/><rect x="182" y="240" fill="#555939"/><rect x="186" y="240" fill="#67754e"/><rect x="190" y="240" fill="#5c6b3b"/><rect x="22" y="244" fill="#475523"/><rect x="26" y="244" fill="#b68062"/><rect x="30" y="244" fill="#c49177"/><rect x="34" y="244" fill="#c49070"/><rect x="38" y="244" fill="#c78b75"/><rect x="42" y="244" fill="#9a6542"/><rect x="46" y="244" fill="#a16a55"/><rect x="50" y="244" fill="#a67b62"/><rect x="54" y="244" fill="#a4a58e"/><rect x="58" y="244" fill="#aca68f"/><rect x="62" y="244" fill="#a8a091"/><rect x="66" y="244" fill="#b8b1a3"/><rect x="70" y="244" fill="#b1a99a"/><rect x="74" y="244" fill="#a69e8f"/><rect x="78" y="244" fill="#a9a392"/><rect x="82" y="244" fill="#b8aea0"/><rect x="86" y="244" fill="#bcb19c"/><rect x="90" y="244" fill="#c7bfad"/><rect x="94" y="244" fill="#abaa96"/><rect x="98" y="244" fill="#a4aa90"/><rect x="102" y="244" fill="#a9a18b"/><rect x="106" y="244" fill="#b0a89a"/><rect x="110" y="244" fill="#b4a7a6"/><rect x="114" y="244" fill="#a8a797"/><rect x="118" y="244" fill="#5d5f3b"/><rect x="122" y="244" fill="#5c703c"/><rect x="126" y="244" fill="#5a7249"/><rect x="130" y="244" fill="#41471b"/><rect x="134" y="244" fill="#647842"/><rect x="138" y="244" fill="#596b36"/><rect x="142" y="244" fill="#5f7641"/><rect x="146" y="244" fill="#737656"/><rect x="150" y="244" fill="#567040"/><rect x="154" y="244" fill="#446029"/><rect x="158" y="244" fill="#6e7f4a"/><rect x="162" y="244" fill="#5b6b3f"/><rect x="166" y="244" fill="#757b4f"/><rect x="170" y="244" fill="#686e4e"/><rect x="174" y="244" fill="#5e5e3b"/><rect x="178" y="244" fill="#5c6131"/><rect x="22" y="248" fill="#ca9b78"/><rect x="26" y="248" fill="#bd896b"/><rect x="30" y="248" fill="#a97461"/><rect x="34" y="248" fill="#ba8871"/><rect x="38" y="248" fill="#d09e80"/><rect x="42" y="248" fill="#b6896b"/><rect x="46" y="248" fill="#c18868"/><rect x="50" y="248" fill="#d3a281"/><rect x="54" y="248" fill="#b48a60"/><rect x="58" y="248" fill="#b07b66"/><rect x="62" y="248" fill="#b07a5f"/><rect x="66" y="248" fill="#aca391"/><rect x="70" y="248" fill="#b2a797"/><rect x="74" y="248" fill="#b8a699"/><rect x="78" y="248" fill="#b7ae96"/><rect x="82" y="248" fill="#b3a997"/><rect x="86" y="248" fill="#a79e8e"/><rect x="90" y="248" fill="#c0b0a4"/><rect x="94" y="248" fill="#adac99"/><rect x="98" y="248" fill="#ada799"/><rect x="102" y="248" fill="#b0a48f"/><rect x="106" y="248" fill="#b4b7a7"/><rect x="110" y="248" fill="#bcb5a6"/><rect x="114" y="248" fill="#b2ae9a"/><rect x="118" y="248" fill="#a4a090"/><rect x="122" y="248" fill="#53632a"/><rect x="126" y="248" fill="#657742"/><rect x="130" y="248" fill="#566734"/><rect x="134" y="248" fill="#536337"/><rect x="138" y="248" fill="#6c7a51"/><rect x="142" y="248" fill="#557140"/><rect x="146" y="248" fill="#526b2f"/><rect x="150" y="248" fill="#62713b"/><rect x="154" y="248" fill="#627d45"/><rect x="158" y="248" fill="#718150"/><rect x="162" y="248" fill="#4f5d2b"/><rect x="166" y="248" fill="#606d43"/><rect x="22" y="252" fill="#bc8c6a"/><rect x="26" y="252" fill="#8b8673"/><rect x="30" y="252" fill="#92897f"/><rect x="34" y="252" fill="#c89375"/><rect x="38" y="252" fill="#aa7950"/><rect x="42" y="252" fill="#d2998c"/><rect x="46" y="252" fill="#b18069"/><rect x="50" y="252" fill="#b58963"/><rect x="54" y="252" fill="#a6735b"/><rect x="58" y="252" fill="#ac7d59"/><rect x="62" y="252" fill="#b68665"/><rect x="66" y="252" fill="#b58769"/><rect x="70" y="252" fill="#a67254"/><rect x="74" y="252" fill="#b4a491"/><rect x="78" y="252" fill="#aba08e"/><rect x="82" y="252" fill="#ada296"/><rect x="86" y="252" fill="#abab99"/><rect x="90" y="252" fill="#a99e96"/><rect x="94" y="252" fill="#aea593"/><rect x="98" y="252" fill="#b1a699"/><rect x="102" y="252" fill="#a9a18c"/><rect x="106" y="252" fill="#b5b099"/><rect x="110" y="252" fill="#aca59d"/><rect x="114" y="252" fill="#9c998b"/><rect x="118" y="252" fill="#a19a93"/><rect x="122" y="252" fill="#bcada6"/><rect x="126" y="252" fill="#b0a59c"/><rect x="130" y="252" fill="#4d6838"/><rect x="134" y="252" fill="#5c723c"/><rect x="138" y="252" fill="#596e41"/><rect x="142" y="252" fill="#465921"/><rect x="146" y="252" fill="#5c6c41"/><rect x="150" y="252" fill="#738257"/><rect x="154" y="252" fill="#5e653d"/><rect x="18" y="256" fill="#c28a6b"/><rect x="22" y="256" fill="#9a9187"/><rect x="26" y="256" fill="#918577"/><rect x="30" y="256" fill="#867f77"/><rect x="34" y="256" fill="#857967"/><rect x="38" y="256" fill="#c08e6b"/><rect x="42" y="256" fill="#a97957"/><rect x="46" y="256" fill="#af7865"/><rect x="50" y="256" fill="#b77d66"/><rect x="54" y="256" fill="#ad7e57"/><rect x="58" y="256" fill="#bf8a70"/><rect x="62" y="256" fill="#b9896a"/><rect x="66" y="256" fill="#a97b58"/><rect x="70" y="256" fill="#c28f78"/><rect x="74" y="256" fill="#c39671"/><rect x="78" y="256" fill="#ad7f59"/><rect x="82" y="256" fill="#aa7b58"/><rect x="86" y="256" fill="#b09e87"/><rect x="90" y="256" fill="#b1a7a5"/><rect x="94" y="256" fill="#b6ada3"/><rect x="98" y="256" fill="#c2baa3"/><rect x="102" y="256" fill="#a39d8a"/><rect x="106" y="256" fill="#b5a49c"/><rect x="110" y="256" fill="#b4af9f"/><rect x="114" y="256" fill="#b0ab9c"/><rect x="118" y="256" fill="#b0a997"/><rect x="122" y="256" fill="#b0a192"/><rect x="126" y="256" fill="#a4a290"/><rect x="130" y="256" fill="#b0a699"/><rect x="134" y="256" fill="#728459"/><rect x="138" y="256" fill="#5d7646"/><rect x="142" y="256" fill="#606f44"/><rect x="18" y="260" fill="#978e89"/><rect x="22" y="260" fill="#908272"/><rect x="26" y="260" fill="#948583"/><rect x="30" y="260" fill="#a19283"/><rect x="34" y="260" fill="#958a7c"/><rect x="38" y="260" fill="#898174"/><rect x="42" y="260" fill="#c89977"/><rect x="46" y="260" fill="#ad7d5b"/><rect x="50" y="260" fill="#9e634b"/><rect x="54" y="260" fill="#b08360"/><rect x="58" y="260" fill="#b88b6d"/><rect x="62" y="260" fill="#b9846a"/><rect x="66" y="260" fill="#ac8163"/><rect x="70" y="260" fill="#ae7c5a"/><rect x="74" y="260" fill="#c69373"/><rect x="78" y="260" fill="#a97d5b"/><rect x="82" y="260" fill="#a5745a"/><rect x="86" y="260" fill="#bd9376"/><rect x="90" y="260" fill="#ad8865"/><rect x="94" y="260" fill="#b9a99d"/><rect x="98" y="260" fill="#aeac98"/><rect x="102" y="260" fill="#b4a59b"/><rect x="106" y="260" fill="#b2a397"/><rect x="110" y="260" fill="#afb29f"/><rect x="114" y="260" fill="#b9b09b"/><rect x="118" y="260" fill="#c4bdac"/><rect x="122" y="260" fill="#aea099"/><rect x="126" y="260" fill="#b09d93"/><rect x="130" y="260" fill="#57643b"/><rect x="134" y="260" fill="#5c6645"/><rect x="18" y="264" fill="#978c7c"/><rect x="22" y="264" fill="#867b76"/><rect x="26" y="264" fill="#88756d"/><rect x="30" y="264" fill="#857c73"/><rect x="34" y="264" fill="#928d7a"/><rect x="38" y="264" fill="#a47253"/><rect x="42" y="264" fill="#c79874"/><rect x="46" y="264" fill="#91623e"/><rect x="50" y="264" fill="#af7a57"/><rect x="54" y="264" fill="#a07a57"/><rect x="58" y="264" fill="#ae7d61"/><rect x="62" y="264" fill="#d2a085"/><rect x="66" y="264" fill="#c49270"/><rect x="70" y="264" fill="#b28262"/><rect x="74" y="264" fill="#9d7653"/><rect x="78" y="264" fill="#a9765f"/><rect x="82" y="264" fill="#b18464"/><rect x="86" y="264" fill="#a87954"/><rect x="90" y="264" fill="#ac795c"/><rect x="94" y="264" fill="#ab7b5c"/><rect x="98" y="264" fill="#c39771"/><rect x="102" y="264" fill="#be8366"/><rect x="106" y="264" fill="#a4a290"/><rect x="110" y="264" fill="#bfb0ac"/><rect x="114" y="264" fill="#b7b0a2"/><rect x="118" y="264" fill="#aba49a"/><rect x="122" y="264" fill="#6b7350"/><rect x="14" y="268" fill="#998b80"/><rect x="18" y="268" fill="#998f8f"/><rect x="22" y="268" fill="#91867a"/><rect x="26" y="268" fill="#9d9c85"/><rect x="30" y="268" fill="#979084"/><rect x="34" y="268" fill="#a67555"/><rect x="38" y="268" fill="#a67b5e"/><rect x="42" y="268" fill="#c38b69"/><rect x="46" y="268" fill="#ac7d60"/><rect x="50" y="268" fill="#ac745a"/><rect x="54" y="268" fill="#c58b70"/><rect x="58" y="268" fill="#b7876b"/><rect x="62" y="268" fill="#9c7550"/><rect x="66" y="268" fill="#a5775e"/><rect x="70" y="268" fill="#be8c6a"/><rect x="74" y="268" fill="#c39776"/><rect x="78" y="268" fill="#a16b50"/><rect x="82" y="268" fill="#c48f73"/><rect x="86" y="268" fill="#b88469"/><rect x="90" y="268" fill="#ba8e71"/><rect x="94" y="268" fill="#b47e5d"/><rect x="98" y="268" fill="#b57f59"/><rect x="102" y="268" fill="#ad785e"/><rect x="106" y="268" fill="#a87457"/><rect x="110" y="268" fill="#ba866b"/><rect x="14" y="272" fill="#a16b4d"/><rect x="18" y="272" fill="#848478"/><rect x="22" y="272" fill="#9f9a87"/><rect x="26" y="272" fill="#91807b"/><rect x="30" y="272" fill="#b37f6a"/><rect x="34" y="272" fill="#b27b64"/><rect x="38" y="272" fill="#b28966"/><rect x="42" y="272" fill="#c4896c"/><rect x="46" y="272" fill="#9c6d57"/><rect x="50" y="272" fill="#bb8367"/><rect x="54" y="272" fill="#966a4d"/><rect x="58" y="272" fill="#a7735a"/><rect x="62" y="272" fill="#b98867"/><rect x="66" y="272" fill="#b67b61"/><rect x="70" y="272" fill="#c08767"/><rect x="74" y="272" fill="#c48c75"/><rect x="78" y="272" fill="#b38865"/><rect x="82" y="272" fill="#b6866b"/><rect x="86" y="272" fill="#b68969"/><rect x="90" y="272" fill="#b67d61"/><rect x="94" y="272" fill="#a67666"/><rect x="98" y="272" fill="#ba8b63"/><rect x="10" y="276" fill="#ba8561"/><rect x="14" y="276" fill="#bd8b70"/><rect x="18" y="276" fill="#b87d68"/><rect x="22" y="276" fill="#959084"/><rect x="26" y="276" fill="#cb9d73"/><rect x="30" y="276" fill="#b7785f"/><rect x="34" y="276" fill="#c49475"/><rect x="38" y="276" fill="#bc886d"/><rect x="42" y="276" fill="#a87961"/><rect x="46" y="276" fill="#b38663"/><rect x="50" y="276" fill="#c59675"/><rect x="54" y="276" fill="#a4775f"/><rect x="58" y="276" fill="#caa377"/><rect x="62" y="276" fill="#ac705c"/><rect x="66" y="276" fill="#bb816a"/><rect x="70" y="276" fill="#bf916f"/><rect x="74" y="276" fill="#b68067"/><rect x="78" y="276" fill="#b78063"/><rect x="82" y="276" fill="#c38f79"/><rect x="86" y="276" fill="#ab7d5e"/><rect x="90" y="276" fill="#ad7f63"/><rect x="10" y="280" fill="#ab795f"/><rect x="14" y="280" fill="#ad7d59"/><rect x="18" y="280" fill="#a66e55"/><rect x="22" y="280" fill="#a37156"/><rect x="26" y="280" fill="#b68366"/><rect x="30" y="280" fill="#a87859"/><rect x="34" y="280" fill="#a46a55"/><rect x="38" y="280" fill="#af7c60"/><rect x="42" y="280" fill="#af8164"/><rect x="46" y="280" fill="#ba8873"/><rect x="50" y="280" fill="#c18973"/><rect x="54" y="280" fill="#b0886c"/><rect x="58" y="280" fill="#b48169"/><rect x="62" y="280" fill="#b78571"/><rect x="66" y="280" fill="#a67859"/><rect x="70" y="280" fill="#bd8a69"/><rect x="74" y="280" fill="#b48168"/><rect x="78" y="280" fill="#9f6f4f"/><rect x="10" y="284" fill="#af6f5c"/><rect x="14" y="284" fill="#a26e4f"/><rect x="18" y="284" fill="#a16348"/><rect x="22" y="284" fill="#b3845d"/><rect x="26" y="284" fill="#a8795d"/><rect x="30" y="284" fill="#a9755c"/><rect x="34" y="284" fill="#ad7959"/><rect x="38" y="284" fill="#ba8968"/><rect x="42" y="284" fill="#aa775b"/><rect x="46" y="284" fill="#b87d67"/><rect x="50" y="284" fill="#ab7e62"/><rect x="54" y="284" fill="#a17357"/><rect x="58" y="284" fill="#b67f5c"/><rect x="62" y="284" fill="#bb8e6e"/><rect x="66" y="284" fill="#bf9475"/><rect x="6" y="288" fill="#ab7f59"/><rect x="10" y="288" fill="#a97d5b"/><rect x="14" y="288" fill="#c49a70"/><rect x="18" y="288" fill="#b07d66"/><rect x="22" y="288" fill="#ad815f"/><rect x="26" y="288" fill="#ab7460"/><rect x="30" y="288" fill="#c38e77"/><rect x="34" y="288" fill="#b48871"/><rect x="38" y="288" fill="#b2865b"/><rect x="42" y="288" fill="#d09880"/><rect x="46" y="288" fill="#bd936c"/><rect x="50" y="288" fill="#b57e5f"/><rect x="54" y="288" fill="#b68869"/><rect x="6" y="292" fill="#cb937b"/><rect x="10" y="292" fill="#aa7a5e"/><rect x="14" y="292" fill="#b87e69"/><rect x="18" y="292" fill="#b7875f"/><rect x="22" y="292" fill="#c5987c"/><rect x="26" y="292" fill="#b98e74"/><rect x="30" y="292" fill="#b28068"/><rect x="34" y="292" fill="#a9765a"/><rect x="38" y="292" fill="#b27e5a"/><rect x="42" y="292" fill="#a2704a"/><rect x="6" y="296" fill="#b69772"/><rect x="10" y="296" fill="#a06c4c"/><rect x="14" y="296" fill="#ae7c5b"/><rect x="18" y="296" fill="#ae7c57"/><rect x="22" y="296" fill="#b37e64"/><rect x="26" y="296" fill="#9e674a"/><rect x="30" y="296" fill="#aa785c"/><rect x="34" y="296" fill="#5d6a34"/><rect x="6" y="300" fill="#c69177"/><rect x="10" y="300" fill="#a9825c"/><rect x="14" y="300" fill="#ae805e"/><rect x="18" y="300" fill="#aa7a59"/><rect x="22" y="300" fill="#61703e"/><rect x="2" y="304" fill="#4f623c"/><rect x="6" y="304" fill="#916146"/><rect x="10" y="304" fill="#65734f"/><ellipse cx="203.3" cy="185.0" rx="3.5" ry="2.1" fill="#29341d" transform="rotate(-35 203.3 185.0)"/><ellipse cx="100.9" cy="142.0" rx="3.5" ry="2.4" fill="#414c2c" transform="rotate(-35 100.9 142.0)"/><ellipse cx="118.9" cy="125.6" rx="2.9" ry="2.5" fill="#464f2d" transform="rotate(-35 118.9 125.6)"/><ellipse cx="154.0" cy="109.7" rx="4.5" ry="2.4" fill="#2f3b21" transform="rotate(-35 154.0 109.7)"/><ellipse cx="171.4" cy="105.1" rx="4.3" ry="2.5" fill="#353d23" transform="rotate(-35 171.4 105.1)"/><ellipse cx="113.5" cy="174.7" rx="3.7" ry="2.2" fill="#303720" transform="rotate(-35 113.5 174.7)"/><ellipse cx="178.8" cy="163.7" rx="4.2" ry="2.4" fill="#2a361e" transform="rotate(-35 178.8 163.7)"/><ellipse cx="177.0" cy="121.0" rx="3.4" ry="2.1" fill="#2b361e" transform="rotate(-35 177.0 121.0)"/><ellipse cx="186.4" cy="165.5" rx="4.8" ry="3.1" fill="#324023" transform="rotate(-35 186.4 165.5)"/><ellipse cx="100.8" cy="145.2" rx="3.1" ry="2.2" fill="#343c23" transform="rotate(-35 100.8 145.2)"/><ellipse cx="143.9" cy="248.8" rx="2.9" ry="3.1" fill="#3b4828" transform="rotate(-35 143.9 248.8)"/><ellipse cx="98.9" cy="215.0" rx="4.9" ry="2.9" fill="#394526" transform="rotate(-35 98.9 215.0)"/><ellipse cx="162.6" cy="241.7" rx="3.1" ry="2.9" fill="#323d22" transform="rotate(-35 162.6 241.7)"/><ellipse cx="205.1" cy="121.7" rx="2.6" ry="1.9" fill="#2f3b21" transform="rotate(-35 205.1 121.7)"/><ellipse cx="148.4" cy="202.6" rx="3.8" ry="2.3" fill="#28321c" transform="rotate(-35 148.4 202.6)"/><ellipse cx="163.7" cy="239.2" rx="4.9" ry="2.4" fill="#3f4c2a" transform="rotate(-35 163.7 239.2)"/><ellipse cx="141.2" cy="111.7" rx="3.8" ry="3.2" fill="#48512e" transform="rotate(-35 141.2 111.7)"/><ellipse cx="128.1" cy="99.4" rx="2.5" ry="1.9" fill="#27311b" transform="rotate(-35 128.1 99.4)"/><ellipse cx="130.5" cy="230.3" rx="4.3" ry="2.8" fill="#3d4b29" transform="rotate(-35 130.5 230.3)"/><ellipse cx="155.2" cy="175.2" rx="2.7" ry="2.3" fill="#313e22" transform="rotate(-35 155.2 175.2)"/><ellipse cx="231.7" cy="221.9" rx="3.4" ry="2.8" fill="#4d5636" transform="rotate(-35 231.7 221.9)"/><ellipse cx="203.0" cy="179.8" rx="4.2" ry="2.4" fill="#26311b" transform="rotate(-35 203.0 179.8)"/><ellipse cx="227.0" cy="212.3" rx="4.8" ry="2.2" fill="#434b2f" transform="rotate(-35 227.0 212.3)"/><ellipse cx="227.4" cy="159.8" rx="3.0" ry="2.5" fill="#2a371e" transform="rotate(-35 227.4 159.8)"/><ellipse cx="192.8" cy="172.8" rx="3.8" ry="3.1" fill="#324023" transform="rotate(-35 192.8 172.8)"/><ellipse cx="88.6" cy="145.0" rx="3.1" ry="2.3" fill="#3e472a" transform="rotate(-35 88.6 145.0)"/><ellipse cx="214.2" cy="200.2" rx="2.5" ry="2.9" fill="#2a361e" transform="rotate(-35 214.2 200.2)"/><ellipse cx="135.1" cy="111.1" rx="2.8" ry="2.3" fill="#4e5732" transform="rotate(-35 135.1 111.1)"/><ellipse cx="186.4" cy="104.0" rx="3.6" ry="3.1" fill="#252f1a" transform="rotate(-35 186.4 104.0)"/><ellipse cx="141.8" cy="191.6" rx="4.1" ry="3.1" fill="#3d4629" transform="rotate(-35 141.8 191.6)"/><ellipse cx="196.4" cy="105.8" rx="4.1" ry="2.0" fill="#27311b" transform="rotate(-35 196.4 105.8)"/><ellipse cx="161.9" cy="191.0" rx="4.7" ry="2.8" fill="#242e19" transform="rotate(-35 161.9 191.0)"/><ellipse cx="229.1" cy="189.5" rx="4.7" ry="2.8" fill="#2c3920" transform="rotate(-35 229.1 189.5)"/><ellipse cx="108.5" cy="119.8" rx="3.1" ry="3.2" fill="#212917" transform="rotate(-35 108.5 119.8)"/><ellipse cx="182.2" cy="186.2" rx="3.0" ry="3.1" fill="#314023" transform="rotate(-35 182.2 186.2)"/><ellipse cx="214.5" cy="202.9" rx="3.2" ry="2.7" fill="#313f23" transform="rotate(-35 214.5 202.9)"/><ellipse cx="237.1" cy="195.8" rx="4.4" ry="1.9" fill="#313f23" transform="rotate(-35 237.1 195.8)"/><ellipse cx="188.9" cy="120.5" rx="4.7" ry="2.7" fill="#28321c" transform="rotate(-35 188.9 120.5)"/><ellipse cx="187.1" cy="198.8" rx="2.8" ry="3.0" fill="#2c381f" transform="rotate(-35 187.1 198.8)"/><ellipse cx="233.0" cy="165.3" rx="2.7" ry="2.2" fill="#25301b" transform="rotate(-35 233.0 165.3)"/><ellipse cx="152.9" cy="196.7" rx="3.0" ry="2.9" fill="#242d19" transform="rotate(-35 152.9 196.7)"/><ellipse cx="117.1" cy="240.1" rx="4.9" ry="2.1" fill="#404e2b" transform="rotate(-35 117.1 240.1)"/><ellipse cx="169.3" cy="126.3" rx="2.8" ry="2.7" fill="#252e1a" transform="rotate(-35 169.3 126.3)"/><ellipse cx="208.3" cy="209.6" rx="4.2" ry="2.9" fill="#303e22" transform="rotate(-35 208.3 209.6)"/><ellipse cx="212.2" cy="184.4" rx="2.9" ry="2.1" fill="#2b371e" transform="rotate(-35 212.2 184.4)"/><ellipse cx="144.5" cy="253.8" rx="4.7" ry="3.0" fill="#333e22" transform="rotate(-35 144.5 253.8)"/><ellipse cx="178.4" cy="165.1" rx="2.9" ry="2.0" fill="#28331c" transform="rotate(-35 178.4 165.1)"/><ellipse cx="205.4" cy="177.0" rx="4.8" ry="2.9" fill="#28331c" transform="rotate(-35 205.4 177.0)"/><ellipse cx="212.7" cy="191.7" rx="3.8" ry="3.0" fill="#2b371f" transform="rotate(-35 212.7 191.7)"/><ellipse cx="142.6" cy="244.8" rx="3.8" ry="2.1" fill="#374325" transform="rotate(-35 142.6 244.8)"/><ellipse cx="105.8" cy="228.2" rx="5.0" ry="2.5" fill="#3f4d2a" transform="rotate(-35 105.8 228.2)"/><ellipse cx="179.4" cy="188.7" rx="3.8" ry="3.0" fill="#25301a" transform="rotate(-35 179.4 188.7)"/><ellipse cx="198.9" cy="183.1" rx="2.9" ry="1.9" fill="#2c391f" transform="rotate(-35 198.9 183.1)"/><ellipse cx="104.3" cy="140.2" rx="2.9" ry="2.0" fill="#4a532f" transform="rotate(-35 104.3 140.2)"/><ellipse cx="184.9" cy="196.0" rx="4.1" ry="2.5" fill="#2d3a20" transform="rotate(-35 184.9 196.0)"/><ellipse cx="113.4" cy="243.2" rx="3.1" ry="3.1" fill="#1e2c17" transform="rotate(-35 113.4 243.2)"/><ellipse cx="113.1" cy="130.3" rx="3.0" ry="2.0" fill="#5a663a" transform="rotate(-35 113.1 130.3)"/><ellipse cx="108.7" cy="121.1" rx="2.6" ry="2.3" fill="#27311b" transform="rotate(-35 108.7 121.1)"/><ellipse cx="192.7" cy="167.6" rx="2.8" ry="2.6" fill="#2a361e" transform="rotate(-35 192.7 167.6)"/><ellipse cx="210.4" cy="102.8" rx="3.4" ry="2.9" fill="#2b361e" transform="rotate(-35 210.4 102.8)"/><ellipse cx="99.6" cy="141.3" rx="2.8" ry="3.1" fill="#2e351f" transform="rotate(-35 99.6 141.3)"/><ellipse cx="176.1" cy="122.4" rx="2.9" ry="2.9" fill="#252f1a" transform="rotate(-35 176.1 122.4)"/><ellipse cx="64.5" cy="204.6" rx="3.2" ry="2.4" fill="#1c2a16" transform="rotate(-35 64.5 204.6)"/><ellipse cx="104.9" cy="134.3" rx="2.6" ry="2.0" fill="#49522e" transform="rotate(-35 104.9 134.3)"/><ellipse cx="128.3" cy="227.8" rx="3.6" ry="2.1" fill="#3d4b29" transform="rotate(-35 128.3 227.8)"/><ellipse cx="120.6" cy="133.6" rx="4.7" ry="3.1" fill="#5a663a" transform="rotate(-35 120.6 133.6)"/><ellipse cx="233.1" cy="168.8" rx="4.9" ry="2.1" fill="#303e22" transform="rotate(-35 233.1 168.8)"/><ellipse cx="92.7" cy="150.6" rx="4.5" ry="3.1" fill="#3e482a" transform="rotate(-35 92.7 150.6)"/><ellipse cx="231.6" cy="177.1" rx="4.5" ry="2.4" fill="#2f3c21" transform="rotate(-35 231.6 177.1)"/><ellipse cx="203.6" cy="218.7" rx="2.8" ry="2.0" fill="#232d19" transform="rotate(-35 203.6 218.7)"/><ellipse cx="151.4" cy="238.0" rx="2.7" ry="2.6" fill="#344023" transform="rotate(-35 151.4 238.0)"/><ellipse cx="157.1" cy="135.2" rx="3.4" ry="2.1" fill="#29331d" transform="rotate(-35 157.1 135.2)"/><ellipse cx="206.0" cy="120.7" rx="3.9" ry="2.1" fill="#303c22" transform="rotate(-35 206.0 120.7)"/><ellipse cx="74.8" cy="206.8" rx="4.8" ry="2.0" fill="#23341b" transform="rotate(-35 74.8 206.8)"/><ellipse cx="161.1" cy="186.2" rx="3.2" ry="2.9" fill="#29331c" transform="rotate(-35 161.1 186.2)"/><ellipse cx="121.2" cy="125.1" rx="4.7" ry="2.8" fill="#535d35" transform="rotate(-35 121.2 125.1)"/><ellipse cx="126.0" cy="117.9" rx="2.6" ry="2.4" fill="#49522f" transform="rotate(-35 126.0 117.9)"/><ellipse cx="188.1" cy="219.4" rx="2.6" ry="2.8" fill="#324023" transform="rotate(-35 188.1 219.4)"/><ellipse cx="125.2" cy="168.7" rx="2.5" ry="2.3" fill="#3f482a" transform="rotate(-35 125.2 168.7)"/><ellipse cx="212.4" cy="109.5" rx="4.1" ry="3.0" fill="#323921" transform="rotate(-35 212.4 109.5)"/><ellipse cx="121.6" cy="173.4" rx="4.6" ry="3.2" fill="#3c4528" transform="rotate(-35 121.6 173.4)"/><ellipse cx="231.5" cy="187.3" rx="2.9" ry="2.9" fill="#303e22" transform="rotate(-35 231.5 187.3)"/><ellipse cx="174.8" cy="138.4" rx="3.0" ry="2.1" fill="#2b361e" transform="rotate(-35 174.8 138.4)"/><ellipse cx="108.8" cy="135.2" rx="4.7" ry="2.2" fill="#596439" transform="rotate(-35 108.8 135.2)"/><ellipse cx="226.0" cy="212.7" rx="4.2" ry="2.1" fill="#58633e" transform="rotate(-35 226.0 212.7)"/><ellipse cx="180.0" cy="177.9" rx="3.3" ry="3.1" fill="#2b381f" transform="rotate(-35 180.0 177.9)"/><ellipse cx="146.5" cy="199.9" rx="4.7" ry="3.1" fill="#3a4327" transform="rotate(-35 146.5 199.9)"/><ellipse cx="83.7" cy="210.8" rx="4.1" ry="2.2" fill="#313b21" transform="rotate(-35 83.7 210.8)"/><ellipse cx="147.2" cy="191.2" rx="2.9" ry="2.3" fill="#28321b" transform="rotate(-35 147.2 191.2)"/><ellipse cx="128.0" cy="123.4" rx="2.9" ry="2.1" fill="#556036" transform="rotate(-35 128.0 123.4)"/><ellipse cx="75.7" cy="144.1" rx="4.5" ry="3.0" fill="#242c19" transform="rotate(-35 75.7 144.1)"/><ellipse cx="181.2" cy="126.0" rx="4.8" ry="2.1" fill="#323f23" transform="rotate(-35 181.2 126.0)"/><ellipse cx="106.8" cy="227.8" rx="2.7" ry="2.5" fill="#333f22" transform="rotate(-35 106.8 227.8)"/><ellipse cx="215.8" cy="179.0" rx="3.0" ry="2.6" fill="#27321b" transform="rotate(-35 215.8 179.0)"/><ellipse cx="116.1" cy="119.3" rx="3.5" ry="2.6" fill="#454d2c" transform="rotate(-35 116.1 119.3)"/><ellipse cx="124.7" cy="110.2" rx="3.8" ry="2.3" fill="#212917" transform="rotate(-35 124.7 110.2)"/><ellipse cx="157.6" cy="111.7" rx="4.1" ry="1.9" fill="#303c22" transform="rotate(-35 157.6 111.7)"/><ellipse cx="154.9" cy="173.0" rx="3.4" ry="2.8" fill="#27311b" transform="rotate(-35 154.9 173.0)"/><ellipse cx="62.2" cy="194.4" rx="2.5" ry="2.9" fill="#374325" transform="rotate(-35 62.2 194.4)"/><ellipse cx="179.1" cy="131.8" rx="2.8" ry="2.6" fill="#2a341d" transform="rotate(-35 179.1 131.8)"/><ellipse cx="144.3" cy="235.3" rx="4.1" ry="2.6" fill="#344023" transform="rotate(-35 144.3 235.3)"/><ellipse cx="224.9" cy="186.6" rx="3.3" ry="2.0" fill="#2d3a20" transform="rotate(-35 224.9 186.6)"/><ellipse cx="83.7" cy="207.5" rx="4.5" ry="2.8" fill="#374225" transform="rotate(-35 83.7 207.5)"/><ellipse cx="80.3" cy="206.4" rx="3.8" ry="2.0" fill="#313b21" transform="rotate(-35 80.3 206.4)"/><ellipse cx="232.2" cy="203.0" rx="4.1" ry="2.7" fill="#5d6842" transform="rotate(-35 232.2 203.0)"/><ellipse cx="226.6" cy="173.5" rx="3.6" ry="2.3" fill="#2c3920" transform="rotate(-35 226.6 173.5)"/><ellipse cx="92.2" cy="146.8" rx="4.0" ry="3.1" fill="#394226" transform="rotate(-35 92.2 146.8)"/><ellipse cx="156.8" cy="189.2" rx="3.9" ry="3.1" fill="#27301b" transform="rotate(-35 156.8 189.2)"/><ellipse cx="225.2" cy="190.8" rx="4.4" ry="2.4" fill="#2b371e" transform="rotate(-35 225.2 190.8)"/><ellipse cx="179.9" cy="118.1" rx="4.3" ry="2.6" fill="#2e3920" transform="rotate(-35 179.9 118.1)"/><ellipse cx="154.3" cy="121.5" rx="4.1" ry="2.4" fill="#2a351e" transform="rotate(-35 154.3 121.5)"/><ellipse cx="114.5" cy="119.9" rx="4.1" ry="3.0" fill="#48512e" transform="rotate(-35 114.5 119.9)"/><ellipse cx="53.9" cy="200.6" rx="4.1" ry="2.7" fill="#384526" transform="rotate(-35 53.9 200.6)"/><ellipse cx="95.4" cy="162.3" rx="4.8" ry="2.7" fill="#212f18" transform="rotate(-35 95.4 162.3)"/><ellipse cx="166.7" cy="111.4" rx="2.8" ry="3.0" fill="#313e23" transform="rotate(-35 166.7 111.4)"/><ellipse cx="176.3" cy="168.8" rx="2.8" ry="1.9" fill="#324023" transform="rotate(-35 176.3 168.8)"/><ellipse cx="114.3" cy="136.8" rx="3.9" ry="2.1" fill="#1a2513" transform="rotate(-35 114.3 136.8)"/><ellipse cx="223.2" cy="106.4" rx="4.3" ry="3.1" fill="#3e472a" transform="rotate(-35 223.2 106.4)"/><ellipse cx="147.5" cy="114.4" rx="3.1" ry="1.9" fill="#333b22" transform="rotate(-35 147.5 114.4)"/><ellipse cx="102.9" cy="231.4" rx="2.7" ry="3.0" fill="#1a2714" transform="rotate(-35 102.9 231.4)"/><ellipse cx="101.0" cy="225.9" rx="4.9" ry="2.7" fill="#2e381f" transform="rotate(-35 101.0 225.9)"/><ellipse cx="131.9" cy="199.7" rx="3.7" ry="2.6" fill="#343c23" transform="rotate(-35 131.9 199.7)"/><ellipse cx="109.6" cy="139.5" rx="5.0" ry="2.8" fill="#23321a" transform="rotate(-35 109.6 139.5)"/><ellipse cx="129.0" cy="234.9" rx="4.8" ry="2.9" fill="#3c4a29" transform="rotate(-35 129.0 234.9)"/><ellipse cx="124.6" cy="105.3" rx="4.8" ry="2.6" fill="#2d381f" transform="rotate(-35 124.6 105.3)"/><ellipse cx="141.3" cy="102.8" rx="4.0" ry="3.0" fill="#222b18" transform="rotate(-35 141.3 102.8)"/><ellipse cx="119.6" cy="133.1" rx="3.5" ry="1.9" fill="#454d2c" transform="rotate(-35 119.6 133.1)"/><ellipse cx="139.3" cy="126.1" rx="2.9" ry="2.8" fill="#4e5832" transform="rotate(-35 139.3 126.1)"/><ellipse cx="146.2" cy="248.1" rx="5.0" ry="2.8" fill="#333e22" transform="rotate(-35 146.2 248.1)"/><ellipse cx="222.2" cy="173.9" rx="4.7" ry="2.8" fill="#324023" transform="rotate(-35 222.2 173.9)"/><ellipse cx="176.9" cy="116.9" rx="2.9" ry="2.1" fill="#344024" transform="rotate(-35 176.9 116.9)"/><ellipse cx="188.9" cy="103.4" rx="3.3" ry="2.6" fill="#2e3920" transform="rotate(-35 188.9 103.4)"/><ellipse cx="204.7" cy="191.0" rx="3.6" ry="2.1" fill="#313f23" transform="rotate(-35 204.7 191.0)"/><ellipse cx="85.6" cy="219.4" rx="2.6" ry="2.5" fill="#202f19" transform="rotate(-35 85.6 219.4)"/><ellipse cx="219.3" cy="200.0" rx="4.1" ry="3.2" fill="#303d22" transform="rotate(-35 219.3 200.0)"/><ellipse cx="78.4" cy="205.1" rx="2.5" ry="2.7" fill="#3b4827" transform="rotate(-35 78.4 205.1)"/><ellipse cx="164.8" cy="195.3" rx="4.3" ry="1.9" fill="#323921" transform="rotate(-35 164.8 195.3)"/><ellipse cx="145.9" cy="164.8" rx="4.9" ry="3.2" fill="#384126" transform="rotate(-35 145.9 164.8)"/><ellipse cx="138.1" cy="251.0" rx="3.7" ry="2.0" fill="#3b4828" transform="rotate(-35 138.1 251.0)"/><ellipse cx="172.4" cy="126.5" rx="3.4" ry="2.2" fill="#2b361e" transform="rotate(-35 172.4 126.5)"/><ellipse cx="143.4" cy="205.6" rx="4.4" ry="2.3" fill="#3a4327" transform="rotate(-35 143.4 205.6)"/><ellipse cx="194.6" cy="180.7" rx="2.8" ry="2.7" fill="#26321b" transform="rotate(-35 194.6 180.7)"/><ellipse cx="73.2" cy="151.3" rx="2.5" ry="2.0" fill="#28321c" transform="rotate(-35 73.2 151.3)"/><ellipse cx="195.3" cy="220.2" rx="4.9" ry="2.2" fill="#232d19" transform="rotate(-35 195.3 220.2)"/><ellipse cx="142.6" cy="176.9" rx="4.6" ry="2.5" fill="#252e19" transform="rotate(-35 142.6 176.9)"/><ellipse cx="174.2" cy="181.1" rx="4.5" ry="1.9" fill="#28341d" transform="rotate(-35 174.2 181.1)"/><ellipse cx="140.4" cy="169.1" rx="4.4" ry="2.1" fill="#404a2b" transform="rotate(-35 140.4 169.1)"/><ellipse cx="224.9" cy="183.1" rx="4.3" ry="2.0" fill="#27321b" transform="rotate(-35 224.9 183.1)"/><ellipse cx="147.8" cy="179.3" rx="3.9" ry="2.1" fill="#2b361e" transform="rotate(-35 147.8 179.3)"/><ellipse cx="157.8" cy="198.9" rx="4.6" ry="2.4" fill="#2a351d" transform="rotate(-35 157.8 198.9)"/><ellipse cx="50.4" cy="193.8" rx="3.7" ry="2.7" fill="#3b4828" transform="rotate(-35 50.4 193.8)"/><ellipse cx="203.4" cy="164.1" rx="4.6" ry="2.7" fill="#2e3b21" transform="rotate(-35 203.4 164.1)"/><ellipse cx="143.6" cy="187.6" rx="4.0" ry="2.3" fill="#2c371f" transform="rotate(-35 143.6 187.6)"/><ellipse cx="64.6" cy="205.8" rx="4.2" ry="2.7" fill="#23341b" transform="rotate(-35 64.6 205.8)"/><ellipse cx="147.4" cy="253.5" rx="2.5" ry="2.5" fill="#3b4827" transform="rotate(-35 147.4 253.5)"/><ellipse cx="117.7" cy="168.9" rx="4.6" ry="2.4" fill="#3a4227" transform="rotate(-35 117.7 168.9)"/><ellipse cx="126.2" cy="224.5" rx="2.7" ry="1.9" fill="#3a4627" transform="rotate(-35 126.2 224.5)"/><ellipse cx="210.6" cy="120.2" rx="2.5" ry="2.8" fill="#303c22" transform="rotate(-35 210.6 120.2)"/><ellipse cx="179.9" cy="181.4" rx="2.5" ry="2.1" fill="#2c391f" transform="rotate(-35 179.9 181.4)"/><ellipse cx="231.4" cy="194.3" rx="4.1" ry="2.0" fill="#2e3c21" transform="rotate(-35 231.4 194.3)"/><ellipse cx="191.5" cy="131.9" rx="3.3" ry="2.2" fill="#565b3e" transform="rotate(-35 191.5 131.9)"/><ellipse cx="185.9" cy="110.4" rx="3.2" ry="1.8" fill="#344024" transform="rotate(-35 185.9 110.4)"/><ellipse cx="175.9" cy="119.7" rx="4.2" ry="2.4" fill="#323e23" transform="rotate(-35 175.9 119.7)"/><ellipse cx="135.0" cy="124.8" rx="4.4" ry="2.8" fill="#48512e" transform="rotate(-35 135.0 124.8)"/><ellipse cx="184.9" cy="168.8" rx="4.7" ry="2.9" fill="#232d19" transform="rotate(-35 184.9 168.8)"/><ellipse cx="148.0" cy="196.2" rx="2.6" ry="2.8" fill="#27311b" transform="rotate(-35 148.0 196.2)"/><ellipse cx="219.5" cy="175.5" rx="4.2" ry="2.8" fill="#242f1a" transform="rotate(-35 219.5 175.5)"/><ellipse cx="79.8" cy="135.1" rx="2.8" ry="2.8" fill="#28321c" transform="rotate(-35 79.8 135.1)"/><ellipse cx="186.0" cy="118.9" rx="4.4" ry="3.0" fill="#27311b" transform="rotate(-35 186.0 118.9)"/><ellipse cx="155.8" cy="245.0" rx="4.2" ry="2.7" fill="#414f2b" transform="rotate(-35 155.8 245.0)"/><ellipse cx="228.0" cy="161.0" rx="4.1" ry="2.8" fill="#324023" transform="rotate(-35 228.0 161.0)"/><ellipse cx="107.7" cy="228.4" rx="3.0" ry="2.7" fill="#313b21" transform="rotate(-35 107.7 228.4)"/><ellipse cx="92.8" cy="160.8" rx="2.5" ry="1.9" fill="#1e2b16" transform="rotate(-35 92.8 160.8)"/><ellipse cx="201.4" cy="119.4" rx="3.0" ry="2.5" fill="#29331d" transform="rotate(-35 201.4 119.4)"/><ellipse cx="135.7" cy="104.7" rx="4.7" ry="1.9" fill="#222a18" transform="rotate(-35 135.7 104.7)"/><ellipse cx="114.5" cy="212.4" rx="3.4" ry="3.1" fill="#333e22" transform="rotate(-35 114.5 212.4)"/><ellipse cx="162.1" cy="139.7" rx="4.5" ry="3.1" fill="#28321c" transform="rotate(-35 162.1 139.7)"/><ellipse cx="98.0" cy="149.7" rx="3.1" ry="2.1" fill="#1a2513" transform="rotate(-35 98.0 149.7)"/><ellipse cx="229.7" cy="160.6" rx="4.5" ry="2.5" fill="#2c381f" transform="rotate(-35 229.7 160.6)"/><ellipse cx="126.5" cy="219.1" rx="3.9" ry="2.2" fill="#374325" transform="rotate(-35 126.5 219.1)"/><ellipse cx="202.0" cy="220.5" rx="3.3" ry="2.9" fill="#2f3d22" transform="rotate(-35 202.0 220.5)"/><ellipse cx="186.7" cy="115.2" rx="4.4" ry="2.3" fill="#2f3a21" transform="rotate(-35 186.7 115.2)"/><ellipse cx="81.9" cy="216.3" rx="4.3" ry="2.2" fill="#1e2d17" transform="rotate(-35 81.9 216.3)"/><ellipse cx="113.1" cy="138.4" rx="2.8" ry="2.2" fill="#202e18" transform="rotate(-35 113.1 138.4)"/><ellipse cx="67.8" cy="200.8" rx="4.9" ry="2.2" fill="#2e381f" transform="rotate(-35 67.8 200.8)"/><ellipse cx="122.2" cy="100.3" rx="4.0" ry="3.1" fill="#252e1a" transform="rotate(-35 122.2 100.3)"/><ellipse cx="120.9" cy="223.2" rx="4.7" ry="2.7" fill="#414f2b" transform="rotate(-35 120.9 223.2)"/><ellipse cx="157.5" cy="113.4" rx="2.9" ry="2.4" fill="#303b21" transform="rotate(-35 157.5 113.4)"/><ellipse cx="170.3" cy="134.0" rx="4.9" ry="2.2" fill="#28321c" transform="rotate(-35 170.3 134.0)"/><ellipse cx="120.3" cy="112.8" rx="2.6" ry="2.8" fill="#2b361e" transform="rotate(-35 120.3 112.8)"/><ellipse cx="105.3" cy="227.8" rx="4.6" ry="3.2" fill="#343f23" transform="rotate(-35 105.3 227.8)"/><ellipse cx="100.1" cy="205.1" rx="3.4" ry="3.1" fill="#303a20" transform="rotate(-35 100.1 205.1)"/><ellipse cx="127.7" cy="127.7" rx="4.0" ry="2.2" fill="#515b34" transform="rotate(-35 127.7 127.7)"/><ellipse cx="196.8" cy="222.2" rx="3.8" ry="2.6" fill="#324023" transform="rotate(-35 196.8 222.2)"/><ellipse cx="222.0" cy="197.8" rx="3.9" ry="3.0" fill="#313f23" transform="rotate(-35 222.0 197.8)"/><ellipse cx="142.1" cy="206.0" rx="2.7" ry="3.0" fill="#353d24" transform="rotate(-35 142.1 206.0)"/><ellipse cx="97.1" cy="225.5" rx="5.0" ry="2.2" fill="#1d2b16" transform="rotate(-35 97.1 225.5)"/><ellipse cx="139.5" cy="193.1" rx="3.5" ry="2.4" fill="#333b22" transform="rotate(-35 139.5 193.1)"/><ellipse cx="140.0" cy="205.6" rx="4.7" ry="2.2" fill="#2e351f" transform="rotate(-35 140.0 205.6)"/><ellipse cx="171.6" cy="128.0" rx="3.5" ry="2.5" fill="#2e3920" transform="rotate(-35 171.6 128.0)"/><ellipse cx="110.7" cy="105.6" rx="3.2" ry="2.9" fill="#2d381f" transform="rotate(-35 110.7 105.6)"/><ellipse cx="204.7" cy="206.6" rx="2.8" ry="2.6" fill="#27321c" transform="rotate(-35 204.7 206.6)"/><ellipse cx="119.7" cy="112.0" rx="3.8" ry="3.1" fill="#2e3920" transform="rotate(-35 119.7 112.0)"/><ellipse cx="84.4" cy="163.0" rx="4.8" ry="1.8" fill="#1c2915" transform="rotate(-35 84.4 163.0)"/><ellipse cx="189.6" cy="117.8" rx="3.3" ry="2.0" fill="#333f23" transform="rotate(-35 189.6 117.8)"/><ellipse cx="201.6" cy="216.4" rx="3.3" ry="2.2" fill="#25301a" transform="rotate(-35 201.6 216.4)"/><ellipse cx="163.8" cy="140.2" rx="4.6" ry="2.7" fill="#333f23" transform="rotate(-35 163.8 140.2)"/><ellipse cx="105.9" cy="147.6" rx="4.2" ry="2.8" fill="#212f18" transform="rotate(-35 105.9 147.6)"/><ellipse cx="152.2" cy="192.3" rx="3.8" ry="2.6" fill="#252e1a" transform="rotate(-35 152.2 192.3)"/><ellipse cx="213.2" cy="191.2" rx="3.8" ry="2.0" fill="#2f3d21" transform="rotate(-35 213.2 191.2)"/><ellipse cx="101.0" cy="206.8" rx="3.4" ry="1.8" fill="#3e4b29" transform="rotate(-35 101.0 206.8)"/><ellipse cx="98.0" cy="213.4" rx="3.6" ry="2.4" fill="#414f2c" transform="rotate(-35 98.0 213.4)"/><ellipse cx="220.0" cy="169.7" rx="3.1" ry="2.1" fill="#313f23" transform="rotate(-35 220.0 169.7)"/><ellipse cx="100.4" cy="141.5" rx="4.8" ry="2.9" fill="#323921" transform="rotate(-35 100.4 141.5)"/><ellipse cx="119.4" cy="119.4" rx="4.1" ry="3.2" fill="#556037" transform="rotate(-35 119.4 119.4)"/><ellipse cx="75.0" cy="152.3" rx="3.0" ry="2.9" fill="#2c371f" transform="rotate(-35 75.0 152.3)"/><ellipse cx="120.1" cy="220.1" rx="4.6" ry="2.8" fill="#384426" transform="rotate(-35 120.1 220.1)"/><ellipse cx="205.2" cy="211.7" rx="3.6" ry="3.1" fill="#26311b" transform="rotate(-35 205.2 211.7)"/><ellipse cx="207.7" cy="177.5" rx="3.1" ry="3.1" fill="#25301a" transform="rotate(-35 207.7 177.5)"/><ellipse cx="161.7" cy="127.9" rx="4.7" ry="2.8" fill="#2c371f" transform="rotate(-35 161.7 127.9)"/><ellipse cx="113.8" cy="227.1" rx="3.3" ry="2.9" fill="#364124" transform="rotate(-35 113.8 227.1)"/><ellipse cx="177.2" cy="114.8" rx="3.2" ry="2.5" fill="#303c22" transform="rotate(-35 177.2 114.8)"/><ellipse cx="86.4" cy="158.0" rx="4.6" ry="2.2" fill="#40492b" transform="rotate(-35 86.4 158.0)"/><ellipse cx="113.6" cy="136.1" rx="2.9" ry="1.8" fill="#1d2915" transform="rotate(-35 113.6 136.1)"/><ellipse cx="124.4" cy="168.1" rx="3.6" ry="3.1" fill="#313921" transform="rotate(-35 124.4 168.1)"/><ellipse cx="158.1" cy="202.1" rx="3.2" ry="2.1" fill="#3a4327" transform="rotate(-35 158.1 202.1)"/><ellipse cx="124.0" cy="188.4" rx="2.8" ry="2.0" fill="#414b2c" transform="rotate(-35 124.0 188.4)"/><ellipse cx="125.2" cy="243.4" rx="3.5" ry="2.8" fill="#2e381f" transform="rotate(-35 125.2 243.4)"/><ellipse cx="131.5" cy="167.4" rx="4.4" ry="2.4" fill="#3b4428" transform="rotate(-35 131.5 167.4)"/><ellipse cx="221.8" cy="192.9" rx="3.7" ry="2.5" fill="#303e22" transform="rotate(-35 221.8 192.9)"/><ellipse cx="79.3" cy="155.2" rx="4.1" ry="2.0" fill="#313921" transform="rotate(-35 79.3 155.2)"/><ellipse cx="86.3" cy="142.5" rx="2.8" ry="2.0" fill="#242d19" transform="rotate(-35 86.3 142.5)"/><ellipse cx="201.1" cy="131.3" rx="3.1" ry="2.2" fill="#4a4e35" transform="rotate(-35 201.1 131.3)"/><ellipse cx="111.8" cy="220.1" rx="4.5" ry="2.8" fill="#394626" transform="rotate(-35 111.8 220.1)"/><ellipse cx="158.7" cy="134.1" rx="3.4" ry="3.0" fill="#2d381f" transform="rotate(-35 158.7 134.1)"/><ellipse cx="207.5" cy="214.5" rx="3.6" ry="2.8" fill="#303e22" transform="rotate(-35 207.5 214.5)"/><ellipse cx="198.3" cy="208.2" rx="4.8" ry="2.5" fill="#28331c" transform="rotate(-35 198.3 208.2)"/><ellipse cx="133.6" cy="164.1" rx="5.0" ry="2.4" fill="#363e24" transform="rotate(-35 133.6 164.1)"/><ellipse cx="202.1" cy="158.1" rx="4.6" ry="3.1" fill="#28331c" transform="rotate(-35 202.1 158.1)"/><ellipse cx="191.5" cy="158.1" rx="4.3" ry="2.0" fill="#29341d" transform="rotate(-35 191.5 158.1)"/><ellipse cx="139.4" cy="202.0" rx="4.4" ry="2.7" fill="#323a22" transform="rotate(-35 139.4 202.0)"/><ellipse cx="197.6" cy="197.2" rx="4.2" ry="2.9" fill="#28341d" transform="rotate(-35 197.6 197.2)"/><ellipse cx="134.2" cy="196.5" rx="3.0" ry="2.5" fill="#3f492a" transform="rotate(-35 134.2 196.5)"/><ellipse cx="94.8" cy="224.0" rx="4.5" ry="3.1" fill="#1d2b16" transform="rotate(-35 94.8 224.0)"/><ellipse cx="149.4" cy="227.2" rx="4.5" ry="3.0" fill="#374325" transform="rotate(-35 149.4 227.2)"/></g></g>
<polygon points="252,7 239,221 6,305 87,87" fill="none" stroke="#d4d2c8" stroke-width="0.9"/></svg>
<div style="left:241px;top:535px;width:552px;height:14px;background:#e9ebef;border-top:1px solid #cfd3da"></div>
<div style="left:244px;top:535px;width:34px;height:14px;background:#f6f7f9;border:1px solid #b4b9c2;border-top:none"></div>
<div class="t" style="left:248px;top:538.42px;font-size:9px;color:#202020;transform:scaleX(0.857);">Model</div>
<div style="left:793px;top:87px;width:32px;height:511px;background:#f0f3f8"></div>
<div style="left:17px;top:549px;width:776px;height:49px;background:#f4f6f9;border:1px solid #c2c8d2"></div>
<div style="left:18px;top:550px;width:774px;height:17px;background:linear-gradient(#fbfcfd,#e6eaf0);border-bottom:1px solid #c8ced8"></div>
<div class="t" style="left:20px;top:555.42px;font-size:9px;color:#b8bcc4;transform:scaleX(0.829);">Riga di comando</div>
<div style="left:18px;top:567px;width:774px;height:15px;background:#fff;border-bottom:1px solid #d0d4da"></div>
<div class="t" style="left:22.3px;top:570.92px;font-size:9px;color:#1a1a1a;transform:scaleX(0.794);">Comando: View3DVISE</div>
<div style="left:18px;top:582px;width:774px;height:15px;background:#f4f6f9"></div>
<div class="t" style="left:24px;top:586.32px;font-size:9px;color:#1a1a1a;transform:scaleX(0.819);">Comando:</div>
<div style="left:64px;top:583px;width:728px;height:14px;background:#fff;border:1px solid #d8dce2"></div>
<div style="left:0px;top:599px;width:825px;height:17px;background:linear-gradient(#f2f4f7,#e4e9ef 50%,#d8dfe7);border-top:1px solid #d4dae2"></div>
<div class="t" style="left:3px;top:606.12px;font-size:9px;color:#0a0a0a;transform:scaleX(0.835);-webkit-text-stroke:0.25px #0a0a0a">485.8834 , 15.5063 , 0.0000</div>
<div class="t" style="left:103px;top:606.12px;font-size:9px;color:#0a0a0a;transform:scaleX(0.839);-webkit-text-stroke:0.25px #0a0a0a">SNAP OFF</div>
<div class="t" style="left:145.5px;top:606.12px;font-size:9px;color:#0a0a0a;transform:scaleX(0.816);-webkit-text-stroke:0.25px #0a0a0a">GRID OFF</div>
<div class="t" style="left:185.8px;top:606.12px;font-size:9px;color:#0a0a0a;transform:scaleX(0.837);-webkit-text-stroke:0.25px #0a0a0a">ORTHO OFF</div>
<div class="t" style="left:235.3px;top:606.12px;font-size:9px;color:#0a0a0a;transform:scaleX(0.813);-webkit-text-stroke:0.25px #0a0a0a">POLARE</div>
<div class="t" style="left:270px;top:606.12px;font-size:9px;color:#0a0a0a;transform:scaleX(0.804);-webkit-text-stroke:0.25px #0a0a0a">SINGLE OFF</div>
<div class="t" style="left:318px;top:606.12px;font-size:9px;color:#0a0a0a;transform:scaleX(0.857);-webkit-text-stroke:0.25px #0a0a0a">OSNAP</div>
<div class="t" style="left:350px;top:606.12px;font-size:9px;color:#0a0a0a;transform:scaleX(0.887);-webkit-text-stroke:0.25px #0a0a0a">OSNAP ON</div>
<div style="left:3px;top:89px;width:10px;height:1px;background:#c4ccd8"></div>
<div style="left:3px;top:91px;width:10px;height:1px;background:#c4ccd8"></div>
<div style="left:3px;top:93px;width:10px;height:1px;background:#c4ccd8"></div>
<svg style="position:absolute;left:1px;top:94px;" width="14" height="14" viewBox="0 0 14 14"><path d="M2 9a5 3 0 1 0 10 0a5 3 0 1 0-10 0" fill="none" stroke="#5a6270" stroke-width="1.2" stroke-linecap="round" stroke-linejoin="round"/><path d="M7 2v7M5 4l2-2 2 2" fill="none" stroke="#5a6270" stroke-width="1.2" stroke-linecap="round" stroke-linejoin="round"/><path d="M6 10h2v3h-2z" fill="#5a6270"/></svg>
<svg style="position:absolute;left:1px;top:110px;" width="14" height="14" viewBox="0 0 14 14"><path d="M2 7l5-3 5 3-1 4h-8z" fill="none" stroke="#5a6270" stroke-width="1.2" stroke-linecap="round" stroke-linejoin="round"/><path d="M12 7l2-1" fill="none" stroke="#5a6270" stroke-width="1" stroke-linecap="round" stroke-linejoin="round"/></svg>
<svg style="position:absolute;left:1px;top:124px;" width="14" height="14" viewBox="0 0 14 14"><path d="M3 5l6-3 4 5-6 5-4-5z" fill="none" stroke="#5a6270" stroke-width="1.1" stroke-linecap="round" stroke-linejoin="round"/><path d="M3 5l-2-2" fill="none" stroke="#5a6270" stroke-width="1" stroke-linecap="round" stroke-linejoin="round"/></svg>
<svg style="position:absolute;left:1px;top:139px;" width="14" height="14" viewBox="0 0 14 14"><path d="M4 5l5-3 4 5-5 5-4-5z" fill="none" stroke="#5a6270" stroke-width="1.1" stroke-linecap="round" stroke-linejoin="round"/><path d="M1 8h4v4h-4z" fill="#e8b030"/></svg>
<svg style="position:absolute;left:1px;top:155px;" width="14" height="14" viewBox="0 0 14 14"><path d="M4 5l5-3 4 5-5 5-4-5z" fill="none" stroke="#5a6270" stroke-width="1.1" stroke-linecap="round" stroke-linejoin="round"/><path d="M1 3l3 2" fill="none" stroke="#5a6270" stroke-width="1" stroke-linecap="round" stroke-linejoin="round"/></svg>
<svg style="position:absolute;left:1px;top:170px;" width="14" height="14" viewBox="0 0 14 14"><path d="M7 2a5.5 5.5 0 1 1 0 11a5.5 5.5 0 1 1 0-11zM2 9l5-2 5 3" fill="none" stroke="#5a6270" stroke-width="1.2" stroke-linecap="round" stroke-linejoin="round"/></svg>
<svg style="position:absolute;left:1px;top:186px;" width="14" height="14" viewBox="0 0 14 14"><path d="M2 2h7v7h-7z" fill="none" stroke="#5a6270" stroke-width="1.2" stroke-linecap="round" stroke-linejoin="round"/><path d="M9 10m-3.5 0a3.5 3.5 0 1 0 7 0a3.5 3.5 0 1 0-7 0" fill="none" stroke="#5a6270" stroke-width="1.1" stroke-linecap="round" stroke-linejoin="round"/></svg>
<svg style="position:absolute;left:1px;top:202px;" width="14" height="14" viewBox="0 0 14 14"><path d="M2 5h8v8h-8z" fill="#a8d0f0"/><path d="M2 5h8v8h-8zM2 5l3-3h8v8l-3 3M10 5l3-3" fill="none" stroke="#5a6270" stroke-width="1.1" stroke-linecap="round" stroke-linejoin="round"/></svg>
<svg style="position:absolute;left:1px;top:217px;" width="14" height="14" viewBox="0 0 14 14"><path d="M2 5h8v8h-8z" fill="#e8f0f8"/><path d="M2 5h8v8h-8zM2 5l3-3h8v8l-3 3M10 5l3-3" fill="none" stroke="#5a6270" stroke-width="1.1" stroke-linecap="round" stroke-linejoin="round"/></svg>
<svg style="position:absolute;left:1px;top:232px;" width="14" height="14" viewBox="0 0 14 14"><path d="M2 5h8v8h-8z" fill="#e8f0f8"/><path d="M2 5h8v8h-8zM2 5l3-3h8v8l-3 3M10 5l3-3" fill="none" stroke="#5a6270" stroke-width="1.1" stroke-linecap="round" stroke-linejoin="round"/></svg>
<svg style="position:absolute;left:1px;top:249px;" width="14" height="14" viewBox="0 0 14 14"><path d="M2 5h8v8h-8z" fill="#e8f0f8"/><path d="M2 5h8v8h-8zM2 5l3-3h8v8l-3 3M10 5l3-3" fill="none" stroke="#5a6270" stroke-width="1.1" stroke-linecap="round" stroke-linejoin="round"/></svg>
<svg style="position:absolute;left:1px;top:264px;" width="14" height="14" viewBox="0 0 14 14"><path d="M2 5h8v8h-8z" fill="#88c0e8"/><path d="M2 5h8v8h-8zM2 5l3-3h8v8l-3 3M10 5l3-3" fill="none" stroke="#5a6270" stroke-width="1.1" stroke-linecap="round" stroke-linejoin="round"/></svg>
<svg style="position:absolute;left:1px;top:278px;" width="14" height="14" viewBox="0 0 14 14"><path d="M2 5h8v8h-8z" fill="#e8f0f8"/><path d="M2 5h8v8h-8zM2 5l3-3h8v8l-3 3M10 5l3-3" fill="none" stroke="#5a6270" stroke-width="1.1" stroke-linecap="round" stroke-linejoin="round"/></svg>
<svg style="position:absolute;left:1px;top:294px;" width="14" height="14" viewBox="0 0 14 14"><path d="M7 1l6 4v5l-6 3-6-3v-5z" fill="#f0f0f0"/><path d="M7 1l6 4v5l-6 3-6-3v-5zM1 5l6 3 6-3M7 8v5" fill="none" stroke="#5a6270" stroke-width="1.1" stroke-linecap="round" stroke-linejoin="round"/><path d="M7 8l6-3v5l-6 3z" fill="#9aa0a8"/></svg>
<svg style="position:absolute;left:1px;top:308px;" width="14" height="14" viewBox="0 0 14 14"><path d="M7 1l6 4v5l-6 3-6-3v-5z" fill="#f0f0f0"/><path d="M7 1l6 4v5l-6 3-6-3v-5zM1 5l6 3 6-3M7 8v5" fill="none" stroke="#5a6270" stroke-width="1.1" stroke-linecap="round" stroke-linejoin="round"/><path d="M7 8l6-3v5l-6 3z" fill="#9aa0a8"/></svg>
<svg style="position:absolute;left:1px;top:324px;" width="14" height="14" viewBox="0 0 14 14"><path d="M7 1l6 4v5l-6 3-6-3v-5z" fill="#f0f0f0"/><path d="M7 1l6 4v5l-6 3-6-3v-5zM1 5l6 3 6-3M7 8v5" fill="none" stroke="#5a6270" stroke-width="1.1" stroke-linecap="round" stroke-linejoin="round"/><path d="M7 8l6-3v5l-6 3z" fill="#9aa0a8"/></svg>
<svg style="position:absolute;left:1px;top:340px;" width="14" height="14" viewBox="0 0 14 14"><path d="M7 1l6 4v5l-6 3-6-3v-5z" fill="#f0f0f0"/><path d="M7 1l6 4v5l-6 3-6-3v-5zM1 5l6 3 6-3M7 8v5" fill="none" stroke="#5a6270" stroke-width="1.1" stroke-linecap="round" stroke-linejoin="round"/><path d="M7 8l6-3v5l-6 3z" fill="#9aa0a8"/></svg>
<svg style="position:absolute;left:1px;top:355px;" width="14" height="14" viewBox="0 0 14 14"><path d="M7 2a1.2 1.2 0 1 0 0.1 0M7 4v4l-3 4M7 8l3 4M4 6h6" fill="none" stroke="#2040b0" stroke-width="1.6" stroke-linecap="round" stroke-linejoin="round"/></svg>
<svg style="position:absolute;left:1px;top:369px;" width="14" height="14" viewBox="0 0 14 14"><path d="M1 6h8v6h-8zM9 8l4-2v6l-4-2zM2 3a2 2 0 1 0 4 0a2 2 0 1 0-4 0" fill="#2050c0"/></svg>
<svg style="position:absolute;left:1px;top:386px;" width="14" height="14" viewBox="0 0 14 14"><path d="M1 6h9v7h-9z" fill="#e05020"/><path d="M6 6l7-5" fill="none" stroke="#999" stroke-width="1.4" stroke-linecap="round" stroke-linejoin="round"/></svg>
<div style="left:796.5px;top:89.5px;width:11.5px;height:86.5px;background:linear-gradient(90deg,#e4eaf2,#cdd7e4);border:1px solid #b0bccb"></div>
<div class="t" style="left:807.5px;top:92px;font-size:10px;color:#111;transform:rotate(90deg) scaleX(0.759);transform-origin:0 0;">Finestra delle Proprietà</div>
<div style="left:809px;top:87.5px;width:16px;height:127.5px;background:linear-gradient(90deg,#eef2f7,#d6dde7);border:1px solid #bcc6d2;border-right:none;border-radius:2px 0 0 2px"></div>
<div style="left:812px;top:89.5px;width:1px;height:3.0px;background:#b4bcc8"></div>
<div style="left:814px;top:89.5px;width:1px;height:3.0px;background:#b4bcc8"></div>
<div style="left:816px;top:89.5px;width:1px;height:3.0px;background:#b4bcc8"></div>
<div style="left:818px;top:89.5px;width:1px;height:3.0px;background:#b4bcc8"></div>
<div style="left:820px;top:89.5px;width:1px;height:3.0px;background:#b4bcc8"></div>
<div style="left:822px;top:89.5px;width:1px;height:3.0px;background:#b4bcc8"></div>
<div style="left:809px;top:217px;width:16px;height:76px;background:linear-gradient(90deg,#eef2f7,#d6dde7);border:1px solid #bcc6d2;border-right:none;border-radius:2px 0 0 2px"></div>
<div style="left:812px;top:219px;width:1px;height:3px;background:#b4bcc8"></div>
<div style="left:814px;top:219px;width:1px;height:3px;background:#b4bcc8"></div>
<div style="left:816px;top:219px;width:1px;height:3px;background:#b4bcc8"></div>
<div style="left:818px;top:219px;width:1px;height:3px;background:#b4bcc8"></div>
<div style="left:820px;top:219px;width:1px;height:3px;background:#b4bcc8"></div>
<div style="left:822px;top:219px;width:1px;height:3px;background:#b4bcc8"></div>
<div style="left:809px;top:296px;width:16px;height:77px;background:linear-gradient(90deg,#eef2f7,#d6dde7);border:1px solid #bcc6d2;border-right:none;border-radius:2px 0 0 2px"></div>
<div style="left:812px;top:298px;width:1px;height:3px;background:#b4bcc8"></div>
<div style="left:814px;top:298px;width:1px;height:3px;background:#b4bcc8"></div>
<div style="left:816px;top:298px;width:1px;height:3px;background:#b4bcc8"></div>
<div style="left:818px;top:298px;width:1px;height:3px;background:#b4bcc8"></div>
<div style="left:820px;top:298px;width:1px;height:3px;background:#b4bcc8"></div>
<div style="left:822px;top:298px;width:1px;height:3px;background:#b4bcc8"></div>
<svg style="position:absolute;left:810px;top:93px;" width="14" height="14" viewBox="0 0 14 14"><path d="M2 6a4 4 0 1 0 8 0a4 4 0 1 0-8 0" fill="none" stroke="#30363e" stroke-width="1.4" stroke-linecap="round" stroke-linejoin="round"/><path d="M9 9l4 4" fill="none" stroke="#30363e" stroke-width="2" stroke-linecap="round" stroke-linejoin="round"/><path d="M4 4h4v4h-4z" fill="#fff"/><path d="M4 4l4 4" fill="none" stroke="#30363e" stroke-width="1" stroke-linecap="round" stroke-linejoin="round"/></svg>
<svg style="position:absolute;left:810px;top:109px;" width="14" height="14" viewBox="0 0 14 14"><path d="M2 6a4 4 0 1 0 8 0a4 4 0 1 0-8 0" fill="none" stroke="#30363e" stroke-width="1.4" stroke-linecap="round" stroke-linejoin="round"/><path d="M9 9l4 4" fill="none" stroke="#30363e" stroke-width="2" stroke-linecap="round" stroke-linejoin="round"/><path d="M4.5 4.5h3M4.5 7.5h3" fill="none" stroke="#30363e" stroke-width="1" stroke-linecap="round" stroke-linejoin="round"/></svg>
<svg style="position:absolute;left:810px;top:124px;" width="14" height="14" viewBox="0 0 14 14"><path d="M2 6a4 4 0 1 0 8 0a4 4 0 1 0-8 0" fill="none" stroke="#30363e" stroke-width="1.4" stroke-linecap="round" stroke-linejoin="round"/><path d="M9 9l4 4" fill="none" stroke="#30363e" stroke-width="2" stroke-linecap="round" stroke-linejoin="round"/><path d="M6 1l4 0 0 4z" fill="#222"/></svg>
<svg style="position:absolute;left:810px;top:140px;" width="14" height="14" viewBox="0 0 14 14"><path d="M2 6a4 4 0 1 0 8 0a4 4 0 1 0-8 0" fill="none" stroke="#30363e" stroke-width="1.4" stroke-linecap="round" stroke-linejoin="round"/><path d="M9 9l4 4" fill="none" stroke="#30363e" stroke-width="2" stroke-linecap="round" stroke-linejoin="round"/><path d="M4 4h4v4h-4z" fill="none" stroke="#30363e" stroke-width="1" stroke-linecap="round" stroke-linejoin="round"/></svg>
<svg style="position:absolute;left:810px;top:156px;" width="14" height="14" viewBox="0 0 14 14"><path d="M2 6a4 4 0 1 0 8 0a4 4 0 1 0-8 0" fill="none" stroke="#30363e" stroke-width="1.4" stroke-linecap="round" stroke-linejoin="round"/><path d="M9 9l4 4" fill="none" stroke="#30363e" stroke-width="2" stroke-linecap="round" stroke-linejoin="round"/><path d="M6 4v4M4 6h4" fill="none" stroke="#30363e" stroke-width="1" stroke-linecap="round" stroke-linejoin="round"/></svg>
<svg style="position:absolute;left:810px;top:170px;" width="14" height="14" viewBox="0 0 14 14"><path d="M3 7a5 4 0 1 0 10 0a5 4 0 1 0-10 0" fill="none" stroke="#30363e" stroke-width="1.2" stroke-linecap="round" stroke-linejoin="round"/><path d="M1 13h5v-4" fill="none" stroke="#30363e" stroke-width="1" stroke-linecap="round" stroke-linejoin="round"/></svg>
<svg style="position:absolute;left:810px;top:186px;" width="14" height="14" viewBox="0 0 14 14"><path d="M2 6a4 4 0 1 0 8 0a4 4 0 1 0-8 0" fill="none" stroke="#30363e" stroke-width="1.4" stroke-linecap="round" stroke-linejoin="round"/><path d="M9 9l4 4" fill="none" stroke="#30363e" stroke-width="2" stroke-linecap="round" stroke-linejoin="round"/><path d="M6 6m-1.5 0a1.5 1.5 0 1 0 3 0a1.5 1.5 0 1 0-3 0" fill="none" stroke="#30363e" stroke-width="1" stroke-linecap="round" stroke-linejoin="round"/></svg>
<svg style="position:absolute;left:810px;top:202px;" width="14" height="14" viewBox="0 0 14 14"><path d="M2 6a4 4 0 1 0 8 0a4 4 0 1 0-8 0" fill="none" stroke="#30363e" stroke-width="1.4" stroke-linecap="round" stroke-linejoin="round"/><path d="M9 9l4 4" fill="none" stroke="#30363e" stroke-width="2" stroke-linecap="round" stroke-linejoin="round"/></svg>
<svg style="position:absolute;left:810px;top:227px;" width="14" height="14" viewBox="0 0 14 14"><path d="M2 4h7v6h-7zM5 7h7v6h-7zM4 2h7v6" fill="none" stroke="#30363e" stroke-width="1.1" stroke-linecap="round" stroke-linejoin="round"/></svg>
<svg style="position:absolute;left:810px;top:244px;" width="14" height="14" viewBox="0 0 14 14"><path d="M2 2h7v6h-7zM5 6h7v6h-7z" fill="none" stroke="#30363e" stroke-width="1.1" stroke-linecap="round" stroke-linejoin="round"/></svg>
<svg style="position:absolute;left:810px;top:260px;" width="14" height="14" viewBox="0 0 14 14"><path d="M3 1v10h10M3 4h5v4" fill="none" stroke="#30363e" stroke-width="1.4" stroke-linecap="round" stroke-linejoin="round"/><path d="M8 2h3v3h-3z" fill="#222"/></svg>
<svg style="position:absolute;left:810px;top:277px;" width="14" height="14" viewBox="0 0 14 14"><path d="M2 8h10v5h-10z" fill="#222"/><path d="M5 3h5v5h-5z" fill="#444"/><path d="M8 1l3 3" fill="none" stroke="#30363e" stroke-width="1.2" stroke-linecap="round" stroke-linejoin="round"/></svg>
<svg style="position:absolute;left:810px;top:305px;" width="14" height="14" viewBox="0 0 14 14"><path d="M2 2h10v10h-10z" fill="none" stroke="#30363e" stroke-width="1" stroke-linecap="round" stroke-linejoin="round"/><path d="M7 7m-3 0a3 3 0 1 0 6 0a3 3 0 1 0-6 0" fill="none" stroke="#3a6ab0" stroke-width="1.2" stroke-linecap="round" stroke-linejoin="round"/></svg>
<svg style="position:absolute;left:810px;top:323px;" width="14" height="14" viewBox="0 0 14 14"><path d="M3 2v10h10" fill="none" stroke="#30363e" stroke-width="1.2" stroke-linecap="round" stroke-linejoin="round"/><path d="M5 9l3-3" fill="none" stroke="#30363e" stroke-width="1" stroke-linecap="round" stroke-linejoin="round"/></svg>
<svg style="position:absolute;left:810px;top:339px;" width="14" height="14" viewBox="0 0 14 14"><path d="M3 2v10h10M6 5h5" fill="none" stroke="#30363e" stroke-width="1.2" stroke-linecap="round" stroke-linejoin="round"/><path d="M9 3l2 2-2 2" fill="none" stroke="#3a6ab0" stroke-width="1.2" stroke-linecap="round" stroke-linejoin="round"/></svg>
<svg style="position:absolute;left:810px;top:357px;" width="14" height="14" viewBox="0 0 14 14"><path d="M3 2v10h10M6 5h5" fill="none" stroke="#30363e" stroke-width="1.2" stroke-linecap="round" stroke-linejoin="round"/><path d="M9 7a2 2 0 1 0 2-2" fill="none" stroke="#3a6ab0" stroke-width="1.2" stroke-linecap="round" stroke-linejoin="round"/></svg>
<div style="left:781px;top:88px;width:12px;height:447px;background:#f4f5f7;border-left:1px solid #dfe2e6"></div>
<svg style="position:absolute;left:781px;top:88px;" width="12" height="12" viewBox="0 0 12 12"><path d="M3.5 7.5l2.5-3 2.5 3z" fill="#333"/></svg>
<div style="left:782.5px;top:100px;width:9.0px;height:422px;background:linear-gradient(90deg,#f4f6f8,#dcdfe4);border:1px solid #c4c8ce;border-radius:2px"></div>
<div style="left:785px;top:307px;width:4px;height:1px;background:#8a9098"></div>
<div style="left:785px;top:309px;width:4px;height:1px;background:#8a9098"></div>
<div style="left:785px;top:311px;width:4px;height:1px;background:#8a9098"></div>
<svg style="position:absolute;left:781px;top:523px;" width="12" height="12" viewBox="0 0 12 12"><path d="M3.5 4.5l2.5 3 2.5-3z" fill="#333"/></svg>
<svg style="position:absolute;left:592px;top:537px;" width="10" height="10" viewBox="0 0 10 10"><path d="M6.5 2.5l-3 2.5 3 2.5z" fill="#333"/></svg>
<div style="left:648.5px;top:536px;width:87.0px;height:12px;background:linear-gradient(#f4f6f8,#d4d8de);border:1px solid #b8bcc4;border-radius:2px"></div>
<div style="left:688px;top:539.5px;width:1px;height:5.0px;background:#9aa0a8"></div>
<div style="left:690px;top:539.5px;width:1px;height:5.0px;background:#9aa0a8"></div>
<div style="left:692px;top:539.5px;width:1px;height:5.0px;background:#9aa0a8"></div>
<div style="left:694px;top:539.5px;width:1px;height:5.0px;background:#9aa0a8"></div>
<svg style="position:absolute;left:782px;top:537px;" width="10" height="10" viewBox="0 0 10 10"><path d="M3.5 2.5l3 2.5-3 2.5z" fill="#333"/></svg>
<div style="left:214px;top:90px;width:11px;height:10px;background:linear-gradient(#f2f4f7,#dce1e8);border:1px solid #d0d5dc;border-radius:1px"></div>
<svg style="position:absolute;left:214px;top:90px;" width="11" height="10" viewBox="0 0 11 10"><path d="M4 1.5h3v4h-3z" fill="#222"/><path d="M2.5 5.5h6M5.5 5.5v3.5" fill="none" stroke="#222" stroke-width="1.1" stroke-linecap="round" stroke-linejoin="round"/></svg>
<div style="left:227px;top:90px;width:11px;height:10px;background:linear-gradient(#f2f4f7,#dce1e8);border:1px solid #d0d5dc;border-radius:1px"></div>
<svg style="position:absolute;left:227px;top:90px;" width="11" height="10" viewBox="0 0 11 10"><path d="M3 2.5L8 7.5M8 2.5L3 7.5" stroke="#111" stroke-width="1.6"/></svg>
<div style="left:766px;top:555px;width:11px;height:10px;background:linear-gradient(#f2f4f7,#dce1e8);border:1px solid #d0d5dc;border-radius:1px"></div>
<svg style="position:absolute;left:766px;top:555px;" width="11" height="10" viewBox="0 0 11 10"><path d="M4 1.5h3v4h-3z" fill="#222"/><path d="M2.5 5.5h6M5.5 5.5v3.5" fill="none" stroke="#222" stroke-width="1.1" stroke-linecap="round" stroke-linejoin="round"/></svg>
<div style="left:780px;top:555px;width:11px;height:10px;background:linear-gradient(#f2f4f7,#dce1e8);border:1px solid #d0d5dc;border-radius:1px"></div>
<svg style="position:absolute;left:780px;top:555px;" width="11" height="10" viewBox="0 0 11 10"><path d="M3 2.5L8 7.5M8 2.5L3 7.5" stroke="#111" stroke-width="1.6"/></svg>
<svg style="position:absolute;left:779px;top:568px;" width="12" height="14" viewBox="0 0 12 14"><path d="M4 5.5l2-2.5 2 2.5z" fill="#333"/><path d="M4 9l2 2.5 2-2.5z" fill="#333"/><path d="M3.5 13h5" fill="none" stroke="#555" stroke-width="0.8" stroke-linecap="round" stroke-linejoin="round"/></svg>
<div style="left:396.7px;top:599.5px;width:13.800000000000011px;height:15.5px;background:linear-gradient(#fbfcfd,#e8ecf0);border:1px solid #a8b0bc"></div>
<svg style="position:absolute;left:397px;top:601px;" width="14" height="14" viewBox="0 0 14 14"><path d="M3 11l8-8" fill="none" stroke="#555" stroke-width="1.2" stroke-linecap="round" stroke-linejoin="round"/><path d="M3 11m-1.5 0a1.5 1.5 0 1 0 3 0a1.5 1.5 0 1 0-3 0M11 3m-1.5 0a1.5 1.5 0 1 0 3 0a1.5 1.5 0 1 0-3 0" fill="none" stroke="#a04020" stroke-width="1" stroke-linecap="round" stroke-linejoin="round"/></svg>
<svg style="position:absolute;left:411px;top:601px;" width="14" height="14" viewBox="0 0 14 14"><path d="M7 2a5 5 0 1 1 0 10a5 5 0 1 1 0-10zM7 5.5a1.5 1.5 0 1 1 0 3a1.5 1.5 0 1 1 0-3z" fill="none" stroke="#555" stroke-width="1.1" stroke-linecap="round" stroke-linejoin="round"/></svg>
<svg style="position:absolute;left:428px;top:601px;" width="14" height="14" viewBox="0 0 14 14"><path d="M2 12l9-9M4 7l3 3" fill="none" stroke="#555" stroke-width="1.1" stroke-linecap="round" stroke-linejoin="round"/></svg>
<svg style="position:absolute;left:445px;top:601px;" width="14" height="14" viewBox="0 0 14 14"><path d="M2 5h8l2 3-2 3h-8zM4 8h5" fill="none" stroke="#555" stroke-width="1.1" stroke-linecap="round" stroke-linejoin="round"/></svg>
<svg style="position:absolute;left:462px;top:601px;" width="14" height="14" viewBox="0 0 14 14"><path d="M7 2v9M2 11h10" fill="none" stroke="#555" stroke-width="1.2" stroke-linecap="round" stroke-linejoin="round"/></svg>
<svg style="position:absolute;left:479px;top:601px;" width="14" height="14" viewBox="0 0 14 14"><path d="M2 12l8-8M6 4l4 8M9 3l3 3" fill="none" stroke="#555" stroke-width="1.1" stroke-linecap="round" stroke-linejoin="round"/></svg>
<svg style="position:absolute;left:495px;top:601px;" width="14" height="14" viewBox="0 0 14 14"><path d="M2 2l10 10M12 2l-10 10" fill="none" stroke="#555" stroke-width="1.1" stroke-linecap="round" stroke-linejoin="round"/></svg>
<svg style="position:absolute;left:512px;top:601px;" width="14" height="14" viewBox="0 0 14 14"><path d="M6 6h2v2h-2z" fill="none" stroke="#777" stroke-width="1" stroke-linecap="round" stroke-linejoin="round"/></svg>
<svg style="position:absolute;left:530px;top:601px;" width="14" height="14" viewBox="0 0 14 14"><path d="M7 1l6 6-6 6-6-6zM7 4a3 3 0 1 1 0 6a3 3 0 1 1 0-6z" fill="none" stroke="#555" stroke-width="1.1" stroke-linecap="round" stroke-linejoin="round"/></svg>
<svg style="position:absolute;left:546px;top:601px;" width="14" height="14" viewBox="0 0 14 14"><path d="M7 2a5 5 0 1 1-4 2M3 1v3h3" fill="none" stroke="#555" stroke-width="1.1" stroke-linecap="round" stroke-linejoin="round"/></svg>
<svg style="position:absolute;left:563px;top:601px;" width="14" height="14" viewBox="0 0 14 14"><path d="M2 2l10 10M12 2l-10 10M5 3h4" fill="none" stroke="#555" stroke-width="1.1" stroke-linecap="round" stroke-linejoin="round"/></svg>
<svg style="position:absolute;left:579px;top:601px;" width="14" height="14" viewBox="0 0 14 14"><path d="M2 2l2 2M4 4l8 8" fill="none" stroke="#555" stroke-width="1.6" stroke-linecap="round" stroke-linejoin="round"/></svg>
<svg style="position:absolute;left:595px;top:601px;" width="14" height="14" viewBox="0 0 14 14"><path d="M2 4h6v9h-6zM4 2v2M6 2v2" fill="none" stroke="#555" stroke-width="1" stroke-linecap="round" stroke-linejoin="round"/><path d="M8 2l4 4M12 2l-4 4" fill="none" stroke="#d03030" stroke-width="1.6" stroke-linecap="round" stroke-linejoin="round"/></svg>
<div style="left:613px;top:601px;width:65px;height:15px;background:linear-gradient(#f0f3f6,#dfe4ea);border:1px solid #b8c2ce;border-bottom:none;border-radius:2px 2px 0 0"></div>
<div style="left:616px;top:609.5px;width:5.5px;height:1.7000000000000455px;background:#111"></div>
<div style="left:624.5px;top:607.5px;width:37.5px;height:4.5px;background:linear-gradient(#fde9c4,#f4c886);border-radius:2px"></div>
<div style="left:660px;top:604px;width:6.5px;height:12px;background:linear-gradient(90deg,#f8dcb0,#f0bc78);border-radius:1px"></div>
<div style="left:668.5px;top:609.5px;width:6.0px;height:1.7000000000000455px;background:#111"></div>
<div style="left:670.8px;top:607.3px;width:1.400000000000091px;height:6.100000000000023px;background:#111"></div></div></body></html>
